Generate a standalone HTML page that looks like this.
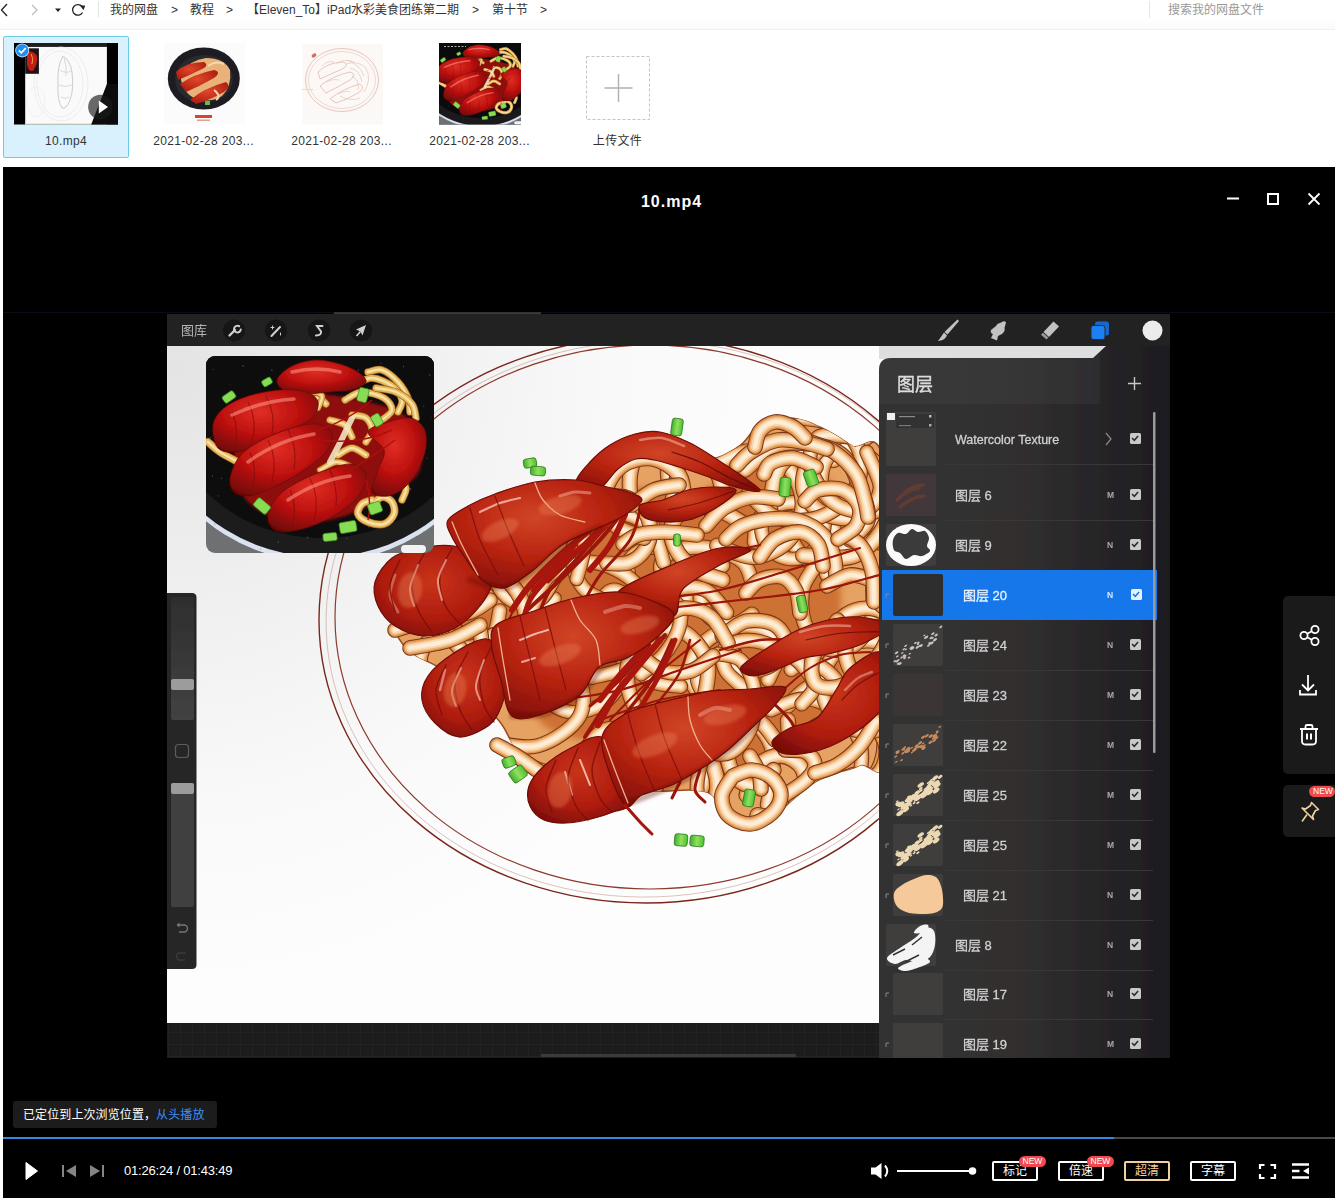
<!DOCTYPE html>
<html lang="zh-CN">
<head>
<meta charset="utf-8">
<title>10.mp4</title>
<style>
html,body{margin:0;padding:0;overflow:hidden;}
body{width:1335px;height:1198px;position:relative;overflow:hidden;background:#fff;font-family:"Liberation Sans","Noto Sans CJK SC",sans-serif;}
.abs{position:absolute;}
#topbar{left:0;top:0;width:1335px;height:29px;background:linear-gradient(#fff 65%,#fafafa);border-bottom:1px solid #efefef;}
.crumb{position:absolute;top:1px;font-size:12px;line-height:18px;color:#333;white-space:nowrap;}
.gt{position:absolute;top:1px;font-size:12px;line-height:18px;color:#333;}
.fitem{position:absolute;top:36px;width:125px;height:121px;}
.fname{position:absolute;left:0;width:100%;top:96px;text-align:center;font-size:12px;line-height:18px;color:#333;white-space:nowrap;letter-spacing:0.35px;}
#player{left:3px;top:167px;width:1332px;height:1031px;background:#000;}
.btn{position:absolute;top:1161px;height:14px;border:2px solid #fff;border-radius:2px;color:#fff;font-size:12px;line-height:16px;text-align:center;width:42px;height:15.5px;}
.new{position:absolute;background:#ee4a50;color:#fff;font-size:8.5px;line-height:11px;height:10.5px;border-radius:6px;padding:0 3.5px;font-family:"Liberation Sans",sans-serif;}
</style>
</head>
<body>
<!-- TOPBAR -->
<div id="topbar" class="abs"></div>
<svg class="abs" style="left:0;top:0" width="100" height="30" viewBox="0 0 100 30">
 <path d="M7 4 L1.5 10 L7 16" fill="none" stroke="#222" stroke-width="1.3"/>
 <path d="M32 5 L37 10 L32 15" fill="none" stroke="#bbb" stroke-width="1.2"/>
 <path d="M55 8.5 L61 8.5 L58 12 Z" fill="#222"/>
 <path d="M82 6.5 A5.3 5.3 0 1 0 82.5 12.5" fill="none" stroke="#222" stroke-width="1.3"/>
 <path d="M79.5 6.2 L84.5 9.5 L84.5 4.5 Z" fill="#222" transform="rotate(20 82 7)"/>
 <rect x="98" y="1" width="1" height="16" fill="#e2e2e2"/>
</svg>
<div class="crumb" style="left:110px">我的网盘</div>
<div class="gt" style="left:171px">&gt;</div>
<div class="crumb" style="left:190px">教程</div>
<div class="gt" style="left:226px">&gt;</div>
<div class="crumb" style="left:247px">【Eleven_To】iPad水彩美食团练第二期</div>
<div class="gt" style="left:472px">&gt;</div>
<div class="crumb" style="left:492px">第十节</div>
<div class="gt" style="left:540px">&gt;</div>
<div class="abs" style="left:1149px;top:1px;width:1px;height:17px;background:#e5e5e5"></div>
<div class="crumb" style="left:1168px;color:#999">搜索我的网盘文件</div>

<!-- FILES -->
<div class="fitem" id="f1" style="left:3px;background:#d9f1fd;border:1px solid #6ccbe6;border-radius:2px;width:124px;height:120px;">
  <div class="fname" style="top:95px">10.mp4</div>
</div>
<div class="fitem" id="f2" style="left:141px"><div class="fname">2021-02-28 203...</div></div>
<div class="fitem" id="f3" style="left:279px"><div class="fname">2021-02-28 203...</div></div>
<div class="fitem" id="f4" style="left:417px"><div class="fname">2021-02-28 203...</div></div>
<div class="fitem" id="f5" style="left:555px"><div class="fname">上传文件</div></div>

<svg class="abs" style="left:0;top:36px" width="668" height="122" viewBox="0 36 668 122">
<defs>
<filter id="tb"><feGaussianBlur stdDeviation="0.5"/></filter>
<filter id="tb2"><feGaussianBlur stdDeviation="1"/></filter>
<clipPath id="t1c"><rect x="14" y="43" width="104" height="81.500"/></clipPath>
<clipPath id="t4c"><rect x="439" y="43" width="82" height="81.500"/></clipPath>
<radialGradient id="tr" cx="0.45" cy="0.4" r="0.7"><stop offset="0" stop-color="#e2472c"/><stop offset="1" stop-color="#a51a0c"/></radialGradient>
</defs>
<!-- thumb 1: video -->
<g clip-path="url(#t1c)">
 <rect x="14" y="43" width="104" height="82" fill="#000"/>
 <rect x="25.200" y="46.700" width="81.700" height="78" fill="#fafafa"/>
 <rect x="25.200" y="43" width="81.700" height="3.700" fill="#1e1e1e"/>
 <rect x="25.200" y="123" width="66" height="1.800" fill="#dff0d0"/>
 <g fill="none" stroke="#e6e6e6" stroke-width="0.700">
  <ellipse cx="61" cy="84" rx="27" ry="37"/><ellipse cx="60" cy="84" rx="23" ry="33"/>
  <path d="M63,56 Q70,60 72,72 Q74,90 70,100 Q66,110 62,108 Q57,100 58,84 Q57,66 63,56 Z" stroke="#b8b8b8"/>
  <path d="M60,70 Q66,74 71,71 M59,85 Q65,88 72,85 M61,97 Q65,100 69,97 M64,58 Q67,66 66,76" stroke="#c8c8c8"/>
  <ellipse cx="36" cy="102" rx="9" ry="15" stroke="#ececec"/>
 </g>
 <rect x="25.200" y="48.300" width="13.700" height="25.500" fill="#1a1416"/>
 <path d="M27,52 Q33,50 37,56 Q38,64 33,71 Q28,72 27,64 Z" fill="#c41c18"/><path d="M31,54 q3,4 1,10" stroke="#e8a040" stroke-width="1" fill="none"/>
 <path d="M106.900,84 L91,125 H118 V84 Z" fill="#0c0c0c"/>
 <circle cx="100.400" cy="107" r="12.300" fill="#1a1a1a" opacity="0.650"/>
 <path d="M98.800,100.400 L108,107 L98.800,113.500 Z" fill="#fff"/>
</g>
<circle cx="22.200" cy="50.400" r="7" fill="#fff" opacity="0.850"/><circle cx="22.200" cy="50.400" r="6.200" fill="#1e90f5"/>
<path d="M18.800,50.400 L21.300,52.900 L25.800,48" fill="none" stroke="#fff" stroke-width="1.600"/>
<!-- thumb 2: painting on dark plate -->
<rect x="164" y="43" width="81" height="81.500" fill="#fbfbfb"/>
<g filter="url(#tb)">
 <ellipse cx="203.800" cy="78.500" rx="36" ry="31" fill="#1d1d20"/>
 <ellipse cx="204" cy="79" rx="29" ry="24" fill="#2a2a2e"/>
 <path d="M180,74 Q190,60 206,58 Q224,58 230,70 Q232,86 222,96 Q208,104 194,98 Q182,92 180,74Z" fill="#e8b27a"/>
 <path d="M176,72 Q186,62 204,62 Q210,66 200,70 Q188,76 178,80 Z" fill="url(#tr)"/>
 <path d="M180,84 Q194,74 214,70 Q222,72 214,78 Q200,86 186,92 Z" fill="url(#tr)"/>
 <path d="M190,100 Q204,88 226,82 Q232,86 224,92 Q210,100 196,104 Z" fill="url(#tr)"/>
 <path d="M208,66 Q216,60 224,64 M214,90 Q222,96 216,100" stroke="#f6d9b0" stroke-width="2" fill="none"/>
 <rect x="205" y="101" width="5" height="4" fill="#5fc040"/>
 <rect x="195" y="115" width="17" height="3" fill="#d8452c"/><rect x="197" y="119.500" width="13" height="1.500" fill="#e0a090"/>
</g>
<!-- thumb 3: line sketch -->
<rect x="302.500" y="44" width="80.500" height="80.500" fill="#fcf8f6"/>
<g fill="none" stroke="#dcb0a2" stroke-width="0.700" filter="url(#tb)">
 <ellipse cx="342" cy="80" rx="36.500" ry="31.500"/><ellipse cx="342" cy="80" rx="33.500" ry="28.500" stroke="#e8cabf"/>
 <path d="M318,72 Q328,62 344,62 Q350,66 340,70 Q328,75 320,79 Z"/>
 <path d="M320,86 Q332,76 350,72 Q358,74 350,80 Q338,87 326,93 Z"/>
 <path d="M330,99 Q342,89 360,84 Q366,88 358,93 Q346,100 336,103 Z"/>
 <path d="M346,64 Q358,60 366,68 Q372,80 364,92 M350,68 Q360,70 362,82 M340,96 Q352,102 360,98 M346,60 Q360,64 364,76 M352,76 Q360,80 358,90 M336,64 Q344,58 354,62" stroke="#e6c4b8"/>
 <path d="M322,66 q6,-6 12,-4 M326,82 q8,-4 14,-2 M338,94 q8,-4 12,-2" stroke="#e8c8bc"/>
</g>
<ellipse cx="314" cy="55.500" rx="2.600" ry="1.800" fill="#d2705e" transform="rotate(-35 314 55.500)"/><rect x="302" y="89" width="11" height="1" fill="#ecd8c8"/>
<!-- thumb 4: photo -->
<g clip-path="url(#t4c)">
 <rect x="439" y="43" width="82" height="82" fill="#15151a"/>
 <g transform="translate(433.500 43) scale(0.4137) translate(-206 -356)">
<rect x="206" y="355" width="228" height="198" fill="#6e6f72"/>
<ellipse cx="322" cy="398" rx="176" ry="164" fill="#d9e2ee"/>
<ellipse cx="322" cy="396" rx="173" ry="161" fill="#1a1a1d"/>
<ellipse cx="322" cy="410" rx="150" ry="128" fill="#0b0b0d"/>
<circle cx="348.2" cy="370.6" r="0.4" fill="#777" opacity="0.6"/>
<circle cx="260.5" cy="549.2" r="0.6" fill="#777" opacity="0.6"/>
<circle cx="358.4" cy="370.3" r="0.8" fill="#777" opacity="0.6"/>
<circle cx="214.9" cy="524.2" r="0.6" fill="#777" opacity="0.6"/>
<circle cx="369.0" cy="526.7" r="0.8" fill="#777" opacity="0.6"/>
<circle cx="414.3" cy="433.8" r="0.8" fill="#777" opacity="0.6"/>
<circle cx="307.6" cy="537.6" r="0.8" fill="#777" opacity="0.6"/>
<circle cx="229.8" cy="384.1" r="0.5" fill="#777" opacity="0.6"/>
<circle cx="424.3" cy="441.7" r="0.7" fill="#777" opacity="0.6"/>
<circle cx="410.5" cy="488.9" r="0.9" fill="#777" opacity="0.6"/>
<circle cx="399.8" cy="548.3" r="0.7" fill="#777" opacity="0.6"/>
<circle cx="424.1" cy="531.7" r="0.7" fill="#777" opacity="0.6"/>
<circle cx="271.8" cy="370.2" r="0.8" fill="#777" opacity="0.6"/>
<circle cx="429.7" cy="375.0" r="0.8" fill="#777" opacity="0.6"/>
<circle cx="403.5" cy="366.5" r="0.7" fill="#777" opacity="0.6"/>
<circle cx="218.1" cy="495.9" r="0.6" fill="#777" opacity="0.6"/>
<circle cx="405.3" cy="546.3" r="0.7" fill="#777" opacity="0.6"/>
<circle cx="431.7" cy="417.5" r="0.4" fill="#777" opacity="0.6"/>
<circle cx="342.3" cy="364.0" r="0.5" fill="#777" opacity="0.6"/>
<circle cx="243.0" cy="366.1" r="0.8" fill="#777" opacity="0.6"/>
<circle cx="278.3" cy="542.1" r="0.8" fill="#777" opacity="0.6"/>
<circle cx="346.9" cy="538.6" r="0.7" fill="#777" opacity="0.6"/>
<circle cx="427.0" cy="458.1" r="0.7" fill="#777" opacity="0.6"/>
<circle cx="210.6" cy="437.7" r="0.7" fill="#777" opacity="0.6"/>
<circle cx="212.5" cy="476.2" r="0.7" fill="#777" opacity="0.6"/>
<circle cx="221.5" cy="478.4" r="0.6" fill="#777" opacity="0.6"/>
<circle cx="213.0" cy="369.6" r="0.7" fill="#777" opacity="0.6"/>
<circle cx="423.8" cy="406.2" r="0.6" fill="#777" opacity="0.6"/>
<circle cx="381.0" cy="363.2" r="0.7" fill="#777" opacity="0.6"/>
<circle cx="353.7" cy="527.9" r="0.6" fill="#777" opacity="0.6"/>
<g filter="url(#b1)">
<path d="M240.0,420.0 C250.0,404.2 280.0,398.3 300.0,395.0 C320.0,391.7 341.7,395.8 360.0,400.0 C378.3,404.2 400.0,408.3 410.0,420.0 C420.0,431.7 425.0,456.7 420.0,470.0 C415.0,483.3 395.0,491.7 380.0,500.0 C365.0,508.3 346.7,516.7 330.0,520.0 C313.3,523.3 295.0,525.0 280.0,520.0 C265.0,515.0 246.7,506.7 240.0,490.0 C233.3,473.3 230.0,435.8 240.0,420.0Z" fill="#8e0c0a" filter="url(#b2)"/>
<path d="M368.0,372.0 C370.3,371.7 377.0,368.3 382.0,370.0 C387.0,371.7 393.7,377.3 398.0,382.0 C402.3,386.7 406.0,393.0 408.0,398.0 C410.0,403.0 409.7,409.7 410.0,412.0" fill="none" stroke="#a5661e" stroke-width="7.5" stroke-linecap="round"/>
<path d="M368.0,372.0 C370.3,371.7 377.0,368.3 382.0,370.0 C387.0,371.7 393.7,377.3 398.0,382.0 C402.3,386.7 406.0,393.0 408.0,398.0 C410.0,403.0 409.7,409.7 410.0,412.0" fill="none" stroke="#e6b860" stroke-width="6.0" stroke-linecap="round"/>
<path d="M368.0,372.0 C370.3,371.7 377.0,368.3 382.0,370.0 C387.0,371.7 393.7,377.3 398.0,382.0 C402.3,386.7 406.0,393.0 408.0,398.0 C410.0,403.0 409.7,409.7 410.0,412.0" fill="none" stroke="#f7e2a4" stroke-width="2.4" stroke-linecap="round"/>
<path d="M355.0,385.0 C357.8,383.8 365.8,377.8 372.0,378.0 C378.2,378.2 387.0,382.3 392.0,386.0 C397.0,389.7 401.0,395.7 402.0,400.0 C403.0,404.3 398.7,410.0 398.0,412.0" fill="none" stroke="#a5661e" stroke-width="7.5" stroke-linecap="round"/>
<path d="M355.0,385.0 C357.8,383.8 365.8,377.8 372.0,378.0 C378.2,378.2 387.0,382.3 392.0,386.0 C397.0,389.7 401.0,395.7 402.0,400.0 C403.0,404.3 398.7,410.0 398.0,412.0" fill="none" stroke="#e6b860" stroke-width="6.0" stroke-linecap="round"/>
<path d="M355.0,385.0 C357.8,383.8 365.8,377.8 372.0,378.0 C378.2,378.2 387.0,382.3 392.0,386.0 C397.0,389.7 401.0,395.7 402.0,400.0 C403.0,404.3 398.7,410.0 398.0,412.0" fill="none" stroke="#f7e2a4" stroke-width="2.4" stroke-linecap="round"/>
<path d="M345.0,400.0 C347.8,398.7 355.5,392.3 362.0,392.0 C368.5,391.7 379.0,395.0 384.0,398.0 C389.0,401.0 392.3,406.3 392.0,410.0 C391.7,413.7 383.7,418.3 382.0,420.0" fill="none" stroke="#a5661e" stroke-width="7.5" stroke-linecap="round"/>
<path d="M345.0,400.0 C347.8,398.7 355.5,392.3 362.0,392.0 C368.5,391.7 379.0,395.0 384.0,398.0 C389.0,401.0 392.3,406.3 392.0,410.0 C391.7,413.7 383.7,418.3 382.0,420.0" fill="none" stroke="#e6b860" stroke-width="6.0" stroke-linecap="round"/>
<path d="M345.0,400.0 C347.8,398.7 355.5,392.3 362.0,392.0 C368.5,391.7 379.0,395.0 384.0,398.0 C389.0,401.0 392.3,406.3 392.0,410.0 C391.7,413.7 383.7,418.3 382.0,420.0" fill="none" stroke="#f7e2a4" stroke-width="2.4" stroke-linecap="round"/>
<path d="M352.0,415.0 C354.3,415.5 362.7,415.5 366.0,418.0 C369.3,420.5 372.0,426.0 372.0,430.0 C372.0,434.0 367.0,440.0 366.0,442.0" fill="none" stroke="#a5661e" stroke-width="7.5" stroke-linecap="round"/>
<path d="M352.0,415.0 C354.3,415.5 362.7,415.5 366.0,418.0 C369.3,420.5 372.0,426.0 372.0,430.0 C372.0,434.0 367.0,440.0 366.0,442.0" fill="none" stroke="#e6b860" stroke-width="6.0" stroke-linecap="round"/>
<path d="M352.0,415.0 C354.3,415.5 362.7,415.5 366.0,418.0 C369.3,420.5 372.0,426.0 372.0,430.0 C372.0,434.0 367.0,440.0 366.0,442.0" fill="none" stroke="#f7e2a4" stroke-width="2.4" stroke-linecap="round"/>
<path d="M305.0,405.0 C307.2,403.8 314.5,398.2 318.0,398.0 C321.5,397.8 324.7,403.0 326.0,404.0" fill="none" stroke="#a5661e" stroke-width="7.5" stroke-linecap="round"/>
<path d="M305.0,405.0 C307.2,403.8 314.5,398.2 318.0,398.0 C321.5,397.8 324.7,403.0 326.0,404.0" fill="none" stroke="#e6b860" stroke-width="6.0" stroke-linecap="round"/>
<path d="M305.0,405.0 C307.2,403.8 314.5,398.2 318.0,398.0 C321.5,397.8 324.7,403.0 326.0,404.0" fill="none" stroke="#f7e2a4" stroke-width="2.4" stroke-linecap="round"/>
<path d="M338.0,455.0 C340.3,453.8 347.3,448.0 352.0,448.0 C356.7,448.0 363.7,453.8 366.0,455.0" fill="none" stroke="#a5661e" stroke-width="7.5" stroke-linecap="round"/>
<path d="M338.0,455.0 C340.3,453.8 347.3,448.0 352.0,448.0 C356.7,448.0 363.7,453.8 366.0,455.0" fill="none" stroke="#e6b860" stroke-width="6.0" stroke-linecap="round"/>
<path d="M338.0,455.0 C340.3,453.8 347.3,448.0 352.0,448.0 C356.7,448.0 363.7,453.8 366.0,455.0" fill="none" stroke="#f7e2a4" stroke-width="2.4" stroke-linecap="round"/>
<path d="M320.0,470.0 C322.7,468.7 331.0,462.7 336.0,462.0 C341.0,461.3 347.7,465.3 350.0,466.0" fill="none" stroke="#a5661e" stroke-width="6.5" stroke-linecap="round"/>
<path d="M320.0,470.0 C322.7,468.7 331.0,462.7 336.0,462.0 C341.0,461.3 347.7,465.3 350.0,466.0" fill="none" stroke="#e6b860" stroke-width="5.0" stroke-linecap="round"/>
<path d="M320.0,470.0 C322.7,468.7 331.0,462.7 336.0,462.0 C341.0,461.3 347.7,465.3 350.0,466.0" fill="none" stroke="#f7e2a4" stroke-width="2.0" stroke-linecap="round"/>
<path d="M376.0,388.0 C379.3,388.7 390.0,389.3 396.0,392.0 C402.0,394.7 408.7,399.7 412.0,404.0 C415.3,408.3 415.3,415.7 416.0,418.0" fill="none" stroke="#a5661e" stroke-width="7.5" stroke-linecap="round"/>
<path d="M376.0,388.0 C379.3,388.7 390.0,389.3 396.0,392.0 C402.0,394.7 408.7,399.7 412.0,404.0 C415.3,408.3 415.3,415.7 416.0,418.0" fill="none" stroke="#e6b860" stroke-width="6.0" stroke-linecap="round"/>
<path d="M376.0,388.0 C379.3,388.7 390.0,389.3 396.0,392.0 C402.0,394.7 408.7,399.7 412.0,404.0 C415.3,408.3 415.3,415.7 416.0,418.0" fill="none" stroke="#f7e2a4" stroke-width="2.4" stroke-linecap="round"/>
<path d="M300.0,398.0 C302.0,397.0 308.3,392.3 312.0,392.0 C315.7,391.7 321.0,393.3 322.0,396.0 C323.0,398.7 318.7,406.0 318.0,408.0" fill="none" stroke="#a5661e" stroke-width="6.5" stroke-linecap="round"/>
<path d="M300.0,398.0 C302.0,397.0 308.3,392.3 312.0,392.0 C315.7,391.7 321.0,393.3 322.0,396.0 C323.0,398.7 318.7,406.0 318.0,408.0" fill="none" stroke="#e6b860" stroke-width="5.0" stroke-linecap="round"/>
<path d="M300.0,398.0 C302.0,397.0 308.3,392.3 312.0,392.0 C315.7,391.7 321.0,393.3 322.0,396.0 C323.0,398.7 318.7,406.0 318.0,408.0" fill="none" stroke="#f7e2a4" stroke-width="2.0" stroke-linecap="round"/>
<path d="M330.0,420.0 C332.5,420.8 341.3,422.2 345.0,425.0 C348.7,427.8 350.8,435.0 352.0,437.0" fill="none" stroke="#a5661e" stroke-width="7.5" stroke-linecap="round"/>
<path d="M330.0,420.0 C332.5,420.8 341.3,422.2 345.0,425.0 C348.7,427.8 350.8,435.0 352.0,437.0" fill="none" stroke="#e6b860" stroke-width="6.0" stroke-linecap="round"/>
<path d="M330.0,420.0 C332.5,420.8 341.3,422.2 345.0,425.0 C348.7,427.8 350.8,435.0 352.0,437.0" fill="none" stroke="#f7e2a4" stroke-width="2.4" stroke-linecap="round"/>
<path d="M208.0,442.0 C210.0,443.7 215.3,448.8 220.0,452.0 C224.7,455.2 233.3,459.5 236.0,461.0" fill="none" stroke="#a5661e" stroke-width="8.0" stroke-linecap="round"/>
<path d="M208.0,442.0 C210.0,443.7 215.3,448.8 220.0,452.0 C224.7,455.2 233.3,459.5 236.0,461.0" fill="none" stroke="#e6b860" stroke-width="6.5" stroke-linecap="round"/>
<path d="M208.0,442.0 C210.0,443.7 215.3,448.8 220.0,452.0 C224.7,455.2 233.3,459.5 236.0,461.0" fill="none" stroke="#f7e2a4" stroke-width="2.6" stroke-linecap="round"/>
<path d="M400.0,440.0 C401.7,442.5 408.0,450.0 410.0,455.0 C412.0,460.0 412.8,465.8 412.0,470.0 C411.2,474.2 406.2,478.3 405.0,480.0" fill="none" stroke="#a5661e" stroke-width="7.5" stroke-linecap="round"/>
<path d="M400.0,440.0 C401.7,442.5 408.0,450.0 410.0,455.0 C412.0,460.0 412.8,465.8 412.0,470.0 C411.2,474.2 406.2,478.3 405.0,480.0" fill="none" stroke="#e6b860" stroke-width="6.0" stroke-linecap="round"/>
<path d="M400.0,440.0 C401.7,442.5 408.0,450.0 410.0,455.0 C412.0,460.0 412.8,465.8 412.0,470.0 C411.2,474.2 406.2,478.3 405.0,480.0" fill="none" stroke="#f7e2a4" stroke-width="2.4" stroke-linecap="round"/>
<path d="M372.0,505.0 C373.7,503.7 378.7,497.5 382.0,497.0 C385.3,496.5 390.0,499.2 392.0,502.0 C394.0,504.8 395.3,510.3 394.0,514.0 C392.7,517.7 388.3,522.7 384.0,524.0 C379.7,525.3 372.3,523.7 368.0,522.0 C363.7,520.3 359.0,517.0 358.0,514.0 C357.0,511.0 359.7,506.3 362.0,504.0 C364.3,501.7 370.3,500.7 372.0,500.0" fill="none" stroke="#a5661e" stroke-width="8.0" stroke-linecap="round"/>
<path d="M372.0,505.0 C373.7,503.7 378.7,497.5 382.0,497.0 C385.3,496.5 390.0,499.2 392.0,502.0 C394.0,504.8 395.3,510.3 394.0,514.0 C392.7,517.7 388.3,522.7 384.0,524.0 C379.7,525.3 372.3,523.7 368.0,522.0 C363.7,520.3 359.0,517.0 358.0,514.0 C357.0,511.0 359.7,506.3 362.0,504.0 C364.3,501.7 370.3,500.7 372.0,500.0" fill="none" stroke="#e6b860" stroke-width="6.5" stroke-linecap="round"/>
<path d="M372.0,505.0 C373.7,503.7 378.7,497.5 382.0,497.0 C385.3,496.5 390.0,499.2 392.0,502.0 C394.0,504.8 395.3,510.3 394.0,514.0 C392.7,517.7 388.3,522.7 384.0,524.0 C379.7,525.3 372.3,523.7 368.0,522.0 C363.7,520.3 359.0,517.0 358.0,514.0 C357.0,511.0 359.7,506.3 362.0,504.0 C364.3,501.7 370.3,500.7 372.0,500.0" fill="none" stroke="#f7e2a4" stroke-width="2.6" stroke-linecap="round"/>
<path d="M385.0,490.0 C387.2,488.3 394.5,480.3 398.0,480.0 C401.5,479.7 405.3,484.7 406.0,488.0 C406.7,491.3 402.7,498.0 402.0,500.0" fill="none" stroke="#a5661e" stroke-width="7.5" stroke-linecap="round"/>
<path d="M385.0,490.0 C387.2,488.3 394.5,480.3 398.0,480.0 C401.5,479.7 405.3,484.7 406.0,488.0 C406.7,491.3 402.7,498.0 402.0,500.0" fill="none" stroke="#e6b860" stroke-width="6.0" stroke-linecap="round"/>
<path d="M385.0,490.0 C387.2,488.3 394.5,480.3 398.0,480.0 C401.5,479.7 405.3,484.7 406.0,488.0 C406.7,491.3 402.7,498.0 402.0,500.0" fill="none" stroke="#f7e2a4" stroke-width="2.4" stroke-linecap="round"/>
<path d="M352,418 Q342,440 330,462" stroke="#efe6c0" stroke-width="6" fill="none" stroke-linecap="round" opacity="0.9"/>
<path d="M368.0,432.0 C368.7,427.3 381.0,424.3 388.0,422.0 C395.0,419.7 404.0,417.0 410.0,418.0 C416.0,419.0 421.3,423.0 424.0,428.0 C426.7,433.0 427.0,441.0 426.0,448.0 C425.0,455.0 421.7,463.3 418.0,470.0 C414.3,476.7 409.0,483.7 404.0,488.0 C399.0,492.3 393.3,495.3 388.0,496.0 C382.7,496.7 373.7,496.3 372.0,492.0 C370.3,487.7 376.0,477.0 378.0,470.0 C380.0,463.0 385.7,456.3 384.0,450.0 C382.3,443.7 367.3,436.7 368.0,432.0Z" fill="url(#pr)" stroke="#6c0605" stroke-width="0.8"/>
<path d="M277.0,380.0 C278.0,375.7 285.5,369.3 292.0,366.0 C298.5,362.7 308.0,360.3 316.0,360.0 C324.0,359.7 333.0,362.0 340.0,364.0 C347.0,366.0 353.7,369.0 358.0,372.0 C362.3,375.0 367.0,379.0 366.0,382.0 C365.0,385.0 358.0,388.3 352.0,390.0 C346.0,391.7 337.8,391.3 330.0,392.0 C322.2,392.7 312.3,394.0 305.0,394.0 C297.7,394.0 290.7,394.3 286.0,392.0 C281.3,389.7 276.0,384.3 277.0,380.0Z" fill="url(#pr)" stroke="#6c0605" stroke-width="0.8"/>
<path d="M213.0,425.0 C214.0,418.3 218.2,412.8 224.0,408.0 C229.8,403.2 238.7,399.0 248.0,396.0 C257.3,393.0 270.3,390.7 280.0,390.0 C289.7,389.3 299.7,390.0 306.0,392.0 C312.3,394.0 317.0,397.7 318.0,402.0 C319.0,406.3 316.7,413.3 312.0,418.0 C307.3,422.7 298.3,426.0 290.0,430.0 C281.7,434.0 270.7,438.3 262.0,442.0 C253.3,445.7 245.3,451.0 238.0,452.0 C230.7,453.0 222.2,452.5 218.0,448.0 C213.8,443.5 212.0,431.7 213.0,425.0Z" fill="url(#pr)" stroke="#6c0605" stroke-width="0.8"/>
<path d="M230.0,478.0 C231.0,472.0 234.7,462.3 240.0,456.0 C245.3,449.7 253.3,444.7 262.0,440.0 C270.7,435.3 282.7,430.7 292.0,428.0 C301.3,425.3 311.3,423.0 318.0,424.0 C324.7,425.0 330.7,429.3 332.0,434.0 C333.3,438.7 330.7,446.0 326.0,452.0 C321.3,458.0 312.3,464.3 304.0,470.0 C295.7,475.7 285.0,481.7 276.0,486.0 C267.0,490.3 257.0,495.0 250.0,496.0 C243.0,497.0 237.3,495.0 234.0,492.0 C230.7,489.0 229.0,484.0 230.0,478.0Z" fill="url(#pr)" stroke="#6c0605" stroke-width="0.8"/>
<path d="M268.0,515.0 C269.0,509.7 273.0,501.5 278.0,496.0 C283.0,490.5 290.0,486.3 298.0,482.0 C306.0,477.7 317.0,473.0 326.0,470.0 C335.0,467.0 345.3,463.3 352.0,464.0 C358.7,464.7 364.7,469.0 366.0,474.0 C367.3,479.0 364.3,487.7 360.0,494.0 C355.7,500.3 348.0,506.7 340.0,512.0 C332.0,517.3 321.0,522.7 312.0,526.0 C303.0,529.3 292.7,531.7 286.0,532.0 C279.3,532.3 275.0,530.8 272.0,528.0 C269.0,525.2 267.0,520.3 268.0,515.0Z" fill="url(#pr)" stroke="#6c0605" stroke-width="0.8"/>
<path d="M232,412 q8,18 2,36 M248,402 q10,20 4,40 M266,396 q10,18 6,38 M250,452 q8,18 2,38 M268,440 q10,20 4,42 M288,430 q10,18 6,40 M290,490 q8,18 2,36 M310,478 q10,20 4,42 M330,470 q8,18 6,36" stroke="#7a0806" stroke-width="1" fill="none" opacity="0.7"/>
<path d="M318,430 Q350,420 372,400 M322,440 Q360,445 392,430 M350,470 Q375,455 395,440 M366,480 Q372,500 368,520" stroke="#b0100c" stroke-width="1.4" fill="none"/>
<path d="M232,415 q30,-14 62,-16 M248,462 q30,-22 66,-28 M288,500 q30,-20 62,-24 M292,372 q25,-6 48,0" fill="none" stroke="#ff9a86" stroke-width="3.5" opacity="0.55" stroke-linecap="round"/>
<rect x="225.0" y="390.5" width="8" height="13" rx="2" fill="#86dc52" stroke="#3a8a20" stroke-width="0.7" transform="rotate(55 229 397)"/>
<rect x="358.0" y="388.0" width="10" height="14" rx="2" fill="#86dc52" stroke="#3a8a20" stroke-width="0.7" transform="rotate(15 363 395)"/>
<rect x="372.5" y="414.0" width="9" height="12" rx="2" fill="#86dc52" stroke="#3a8a20" stroke-width="0.7" transform="rotate(-30 377 420)"/>
<rect x="257.0" y="498.0" width="10" height="16" rx="2" fill="#86dc52" stroke="#3a8a20" stroke-width="0.7" transform="rotate(-50 262 506)"/>
<rect x="342.5" y="518.5" width="11" height="17" rx="2" fill="#86dc52" stroke="#3a8a20" stroke-width="0.7" transform="rotate(80 348 527)"/>
<rect x="369.5" y="501.5" width="11" height="13" rx="2" fill="#86dc52" stroke="#3a8a20" stroke-width="0.7" transform="rotate(70 375 508)"/>
<rect x="263.5" y="377.0" width="7" height="10" rx="2" fill="#86dc52" stroke="#3a8a20" stroke-width="0.7" transform="rotate(60 267 382)"/>
<rect x="326.0" y="530.0" width="8" height="14" rx="2" fill="#86dc52" stroke="#3a8a20" stroke-width="0.7" transform="rotate(85 330 537)"/>
</g>
<rect x="401" y="545" width="25" height="8" rx="4" fill="#f2f2f2"/>
</g>
 <path d="M444,46.500 H466" stroke="#ddd" stroke-width="1.200" stroke-dasharray="2 1.500" opacity="0.800"/>
</g>
<!-- upload -->
<rect x="586.500" y="56.500" width="63" height="63" fill="none" stroke="#c4c4c4" stroke-width="1" stroke-dasharray="3 2"/>
<path d="M604.500,88 H632.500 M618.500,74 V102" stroke="#b0b0b0" stroke-width="1.400"/>
</svg>

<!-- PLAYER -->
<div id="player" class="abs"></div>
<div class="abs" style="left:8px;top:192px;width:1327px;text-align:center;color:#fff;font-weight:bold;font-size:16px;line-height:20px;letter-spacing:1px;">10.mp4</div>
<svg class="abs" style="left:0;top:0" width="1335" height="1198" viewBox="0 0 1335 1198" font-family="'Liberation Sans','Noto Sans CJK SC',sans-serif">
<defs>
<radialGradient id="cv" gradientUnits="userSpaceOnUse" cx="175" cy="370" r="620"><stop offset="0" stop-color="#e4e4e4"/><stop offset="0.35" stop-color="#efefef"/><stop offset="0.7" stop-color="#f9f9f9"/><stop offset="1" stop-color="#fdfdfd"/></radialGradient>
<radialGradient id="red1" cx="0.45" cy="0.35" r="0.7"><stop offset="0" stop-color="#d04526"/><stop offset="0.5" stop-color="#b92411"/><stop offset="1" stop-color="#820f07"/></radialGradient>
<radialGradient id="red2" cx="0.5" cy="0.4" r="0.7"><stop offset="0" stop-color="#c8341a"/><stop offset="0.6" stop-color="#ae1c0e"/><stop offset="1" stop-color="#740b05"/></radialGradient>
<linearGradient id="on" x1="0" y1="0" x2="1" y2="0"><stop offset="0" stop-color="#3fae2a"/><stop offset="0.5" stop-color="#8fe060"/><stop offset="1" stop-color="#4fc030"/></linearGradient>
<pattern id="grid" width="12" height="12" patternUnits="userSpaceOnUse"><path d="M12 0H0V12" fill="none" stroke="#252525" stroke-width="1"/></pattern>
<clipPath id="vclip"><rect x="167" y="313" width="1003" height="745"/></clipPath>
<clipPath id="cclip"><rect x="167" y="346" width="712" height="677"/></clipPath>
<filter id="vb" x="0" y="0" width="100%" height="100%" filterUnits="userSpaceOnUse"><feGaussianBlur stdDeviation="0.45"/></filter>
<filter id="b1"><feGaussianBlur stdDeviation="0.6"/></filter>
<filter id="b2"><feGaussianBlur stdDeviation="1.5"/></filter>
<filter id="b4"><feGaussianBlur stdDeviation="4"/></filter>
</defs>
<rect x="3" y="312" width="1332" height="1" fill="#0b0c16"/>
<rect x="334" y="312" width="207" height="2" fill="#333"/>
<g clip-path="url(#vclip)"><g filter="url(#vb)">
<rect x="167" y="314" width="1003" height="33" fill="#242424"/>
<rect x="334" y="312" width="207" height="2" fill="#3a3a3a"/>
<rect x="167" y="346" width="1002" height="677" fill="url(#cv)"/>
<rect x="167" y="1023" width="1003" height="35" fill="#1d1d1d"/><rect x="167" y="1023" width="1003" height="35" fill="url(#grid)"/>
<rect x="541" y="1054" width="255" height="3" fill="#3a3a3a"/>
<rect x="879" y="346" width="230" height="13" fill="#dedede"/>
<g clip-path="url(#cclip)">
<g fill="none" stroke="#7a281c" stroke-width="1.4">
<ellipse cx="646" cy="620" rx="327" ry="283"/><ellipse cx="650" cy="617" rx="315" ry="272" stroke="#8c3a2c" stroke-width="1.2"/>
<ellipse cx="648" cy="619" rx="322" ry="278" stroke="#b88a7e" stroke-width="0.5" transform="rotate(-2 648 619)"/>
</g>
<clipPath id="nclip"><path d="M393.0,622.0 C395.0,615.7 407.2,615.7 420.0,612.0 C432.8,608.3 453.3,608.7 470.0,600.0 C486.7,591.3 503.3,576.7 520.0,560.0 C536.7,543.3 556.7,515.0 570.0,500.0 C583.3,485.0 588.3,477.5 600.0,470.0 C611.7,462.5 623.3,456.3 640.0,455.0 C656.7,453.7 683.7,463.3 700.0,462.0 C716.3,460.7 728.3,452.8 738.0,447.0 C747.7,441.2 749.3,431.8 758.0,427.0 C766.7,422.2 779.3,417.8 790.0,418.0 C800.7,418.2 811.7,423.3 822.0,428.0 C832.3,432.7 841.5,439.0 852.0,446.0 C862.5,453.0 878.7,420.2 885.0,470.0 C891.3,519.8 894.2,695.8 890.0,745.0 C885.8,794.2 868.8,760.3 860.0,765.0 C851.2,769.7 844.5,770.2 837.0,773.0 C829.5,775.8 822.8,777.2 815.0,782.0 C807.2,786.8 797.5,795.3 790.0,802.0 C782.5,808.7 776.3,817.7 770.0,822.0 C763.7,826.3 759.0,828.7 752.0,828.0 C745.0,827.3 734.7,823.5 728.0,818.0 C721.3,812.5 718.3,799.7 712.0,795.0 C705.7,790.3 700.3,790.8 690.0,790.0 C679.7,789.2 663.3,793.3 650.0,790.0 C636.7,786.7 625.0,773.7 610.0,770.0 C595.0,766.3 575.0,771.0 560.0,768.0 C545.0,765.0 530.0,759.7 520.0,752.0 C510.0,744.3 508.3,732.3 500.0,722.0 C491.7,711.7 480.0,699.0 470.0,690.0 C460.0,681.0 450.3,674.7 440.0,668.0 C429.7,661.3 415.8,657.7 408.0,650.0 C400.2,642.3 391.0,628.3 393.0,622.0Z"/></clipPath>
<path d="M393.0,622.0 C395.0,615.7 407.2,615.7 420.0,612.0 C432.8,608.3 453.3,608.7 470.0,600.0 C486.7,591.3 503.3,576.7 520.0,560.0 C536.7,543.3 556.7,515.0 570.0,500.0 C583.3,485.0 588.3,477.5 600.0,470.0 C611.7,462.5 623.3,456.3 640.0,455.0 C656.7,453.7 683.7,463.3 700.0,462.0 C716.3,460.7 728.3,452.8 738.0,447.0 C747.7,441.2 749.3,431.8 758.0,427.0 C766.7,422.2 779.3,417.8 790.0,418.0 C800.7,418.2 811.7,423.3 822.0,428.0 C832.3,432.7 841.5,439.0 852.0,446.0 C862.5,453.0 878.7,420.2 885.0,470.0 C891.3,519.8 894.2,695.8 890.0,745.0 C885.8,794.2 868.8,760.3 860.0,765.0 C851.2,769.7 844.5,770.2 837.0,773.0 C829.5,775.8 822.8,777.2 815.0,782.0 C807.2,786.8 797.5,795.3 790.0,802.0 C782.5,808.7 776.3,817.7 770.0,822.0 C763.7,826.3 759.0,828.7 752.0,828.0 C745.0,827.3 734.7,823.5 728.0,818.0 C721.3,812.5 718.3,799.7 712.0,795.0 C705.7,790.3 700.3,790.8 690.0,790.0 C679.7,789.2 663.3,793.3 650.0,790.0 C636.7,786.7 625.0,773.7 610.0,770.0 C595.0,766.3 575.0,771.0 560.0,768.0 C545.0,765.0 530.0,759.7 520.0,752.0 C510.0,744.3 508.3,732.3 500.0,722.0 C491.7,711.7 480.0,699.0 470.0,690.0 C460.0,681.0 450.3,674.7 440.0,668.0 C429.7,661.3 415.8,657.7 408.0,650.0 C400.2,642.3 391.0,628.3 393.0,622.0Z" fill="#e6a262" stroke="#9a4a1e" stroke-width="1.5"/>
<g clip-path="url(#nclip)" fill="none" stroke-linecap="round">
<path d="M393.0,622.0 C395.0,615.7 407.2,615.7 420.0,612.0 C432.8,608.3 453.3,608.7 470.0,600.0 C486.7,591.3 503.3,576.7 520.0,560.0 C536.7,543.3 556.7,515.0 570.0,500.0 C583.3,485.0 588.3,477.5 600.0,470.0 C611.7,462.5 623.3,456.3 640.0,455.0 C656.7,453.7 683.7,463.3 700.0,462.0 C716.3,460.7 728.3,452.8 738.0,447.0 C747.7,441.2 749.3,431.8 758.0,427.0 C766.7,422.2 779.3,417.8 790.0,418.0 C800.7,418.2 811.7,423.3 822.0,428.0 C832.3,432.7 841.5,439.0 852.0,446.0 C862.5,453.0 878.7,420.2 885.0,470.0 C891.3,519.8 894.2,695.8 890.0,745.0 C885.8,794.2 868.8,760.3 860.0,765.0 C851.2,769.7 844.5,770.2 837.0,773.0 C829.5,775.8 822.8,777.2 815.0,782.0 C807.2,786.8 797.5,795.3 790.0,802.0 C782.5,808.7 776.3,817.7 770.0,822.0 C763.7,826.3 759.0,828.7 752.0,828.0 C745.0,827.3 734.7,823.5 728.0,818.0 C721.3,812.5 718.3,799.7 712.0,795.0 C705.7,790.3 700.3,790.8 690.0,790.0 C679.7,789.2 663.3,793.3 650.0,790.0 C636.7,786.7 625.0,773.7 610.0,770.0 C595.0,766.3 575.0,771.0 560.0,768.0 C545.0,765.0 530.0,759.7 520.0,752.0 C510.0,744.3 508.3,732.3 500.0,722.0 C491.7,711.7 480.0,699.0 470.0,690.0 C460.0,681.0 450.3,674.7 440.0,668.0 C429.7,661.3 415.8,657.7 408.0,650.0 C400.2,642.3 391.0,628.3 393.0,622.0Z" fill="#c8662c" filter="url(#b4)" opacity="0.8" transform="translate(640 620) scale(0.8) translate(-640 -620)"/>
<path d="M628.9,575.8 C628.9,573.5 626.9,566.3 628.5,562.2 C630.1,558.1 634.0,553.9 638.4,551.4 C642.8,548.9 649.3,547.3 655.0,547.2 C660.7,547.2 667.5,548.8 672.4,551.2 C677.3,553.6 682.0,557.8 684.4,561.9 C686.8,565.9 686.3,573.2 686.6,575.5" stroke="#7a3a1c" stroke-width="14.9"/>
<path d="M628.9,575.8 C628.9,573.5 626.9,566.3 628.5,562.2 C630.1,558.1 634.0,553.9 638.4,551.4 C642.8,548.9 649.3,547.3 655.0,547.2 C660.7,547.2 667.5,548.8 672.4,551.2 C677.3,553.6 682.0,557.8 684.4,561.9 C686.8,565.9 686.3,573.2 686.6,575.5" stroke="#e2924c" stroke-width="12.7"/>
<path d="M628.9,575.8 C628.9,573.5 626.9,566.3 628.5,562.2 C630.1,558.1 634.0,553.9 638.4,551.4 C642.8,548.9 649.3,547.3 655.0,547.2 C660.7,547.2 667.5,548.8 672.4,551.2 C677.3,553.6 682.0,557.8 684.4,561.9 C686.8,565.9 686.3,573.2 686.6,575.5" stroke="#efb478" stroke-width="10.1"/>
<path d="M628.9,575.8 C628.9,573.5 626.9,566.3 628.5,562.2 C630.1,558.1 634.0,553.9 638.4,551.4 C642.8,548.9 649.3,547.3 655.0,547.2 C660.7,547.2 667.5,548.8 672.4,551.2 C677.3,553.6 682.0,557.8 684.4,561.9 C686.8,565.9 686.3,573.2 686.6,575.5" stroke="#f8d8ae" stroke-width="7.4"/>
<path d="M628.9,575.8 C628.9,573.5 626.9,566.3 628.5,562.2 C630.1,558.1 634.0,553.9 638.4,551.4 C642.8,548.9 649.3,547.3 655.0,547.2 C660.7,547.2 667.5,548.8 672.4,551.2 C677.3,553.6 682.0,557.8 684.4,561.9 C686.8,565.9 686.3,573.2 686.6,575.5" stroke="#fdecd6" stroke-width="3.8"/>
<path d="M597.7,789.6 C595.5,788.3 586.8,786.8 584.3,781.9 C581.8,777.1 581.1,767.7 582.7,760.4 C584.3,753.1 589.2,743.4 593.9,738.0 C598.6,732.7 606.0,728.5 611.0,728.4 C616.0,728.3 621.5,732.1 623.8,737.3 C626.0,742.5 624.3,755.7 624.4,759.4" stroke="#7a3a1c" stroke-width="15.5"/>
<path d="M597.7,789.6 C595.5,788.3 586.8,786.8 584.3,781.9 C581.8,777.1 581.1,767.7 582.7,760.4 C584.3,753.1 589.2,743.4 593.9,738.0 C598.6,732.7 606.0,728.5 611.0,728.4 C616.0,728.3 621.5,732.1 623.8,737.3 C626.0,742.5 624.3,755.7 624.4,759.4" stroke="#e2924c" stroke-width="13.3"/>
<path d="M597.7,789.6 C595.5,788.3 586.8,786.8 584.3,781.9 C581.8,777.1 581.1,767.7 582.7,760.4 C584.3,753.1 589.2,743.4 593.9,738.0 C598.6,732.7 606.0,728.5 611.0,728.4 C616.0,728.3 621.5,732.1 623.8,737.3 C626.0,742.5 624.3,755.7 624.4,759.4" stroke="#efb478" stroke-width="10.6"/>
<path d="M597.7,789.6 C595.5,788.3 586.8,786.8 584.3,781.9 C581.8,777.1 581.1,767.7 582.7,760.4 C584.3,753.1 589.2,743.4 593.9,738.0 C598.6,732.7 606.0,728.5 611.0,728.4 C616.0,728.3 621.5,732.1 623.8,737.3 C626.0,742.5 624.3,755.7 624.4,759.4" stroke="#f8d8ae" stroke-width="7.7"/>
<path d="M597.7,789.6 C595.5,788.3 586.8,786.8 584.3,781.9 C581.8,777.1 581.1,767.7 582.7,760.4 C584.3,753.1 589.2,743.4 593.9,738.0 C598.6,732.7 606.0,728.5 611.0,728.4 C616.0,728.3 621.5,732.1 623.8,737.3 C626.0,742.5 624.3,755.7 624.4,759.4" stroke="#fdecd6" stroke-width="4.0"/>
<path d="M833.5,540.2 C833.8,543.0 836.6,553.0 835.7,557.4 C834.8,561.9 831.9,565.8 828.3,567.1 C824.7,568.4 819.1,567.6 814.3,565.2 C809.5,562.7 803.5,557.6 799.4,552.5 C795.2,547.3 791.3,540.0 789.6,534.2 C787.9,528.4 789.1,520.5 789.0,517.7" stroke="#7a3a1c" stroke-width="15.9"/>
<path d="M833.5,540.2 C833.8,543.0 836.6,553.0 835.7,557.4 C834.8,561.9 831.9,565.8 828.3,567.1 C824.7,568.4 819.1,567.6 814.3,565.2 C809.5,562.7 803.5,557.6 799.4,552.5 C795.2,547.3 791.3,540.0 789.6,534.2 C787.9,528.4 789.1,520.5 789.0,517.7" stroke="#e2924c" stroke-width="13.7"/>
<path d="M833.5,540.2 C833.8,543.0 836.6,553.0 835.7,557.4 C834.8,561.9 831.9,565.8 828.3,567.1 C824.7,568.4 819.1,567.6 814.3,565.2 C809.5,562.7 803.5,557.6 799.4,552.5 C795.2,547.3 791.3,540.0 789.6,534.2 C787.9,528.4 789.1,520.5 789.0,517.7" stroke="#efb478" stroke-width="10.9"/>
<path d="M833.5,540.2 C833.8,543.0 836.6,553.0 835.7,557.4 C834.8,561.9 831.9,565.8 828.3,567.1 C824.7,568.4 819.1,567.6 814.3,565.2 C809.5,562.7 803.5,557.6 799.4,552.5 C795.2,547.3 791.3,540.0 789.6,534.2 C787.9,528.4 789.1,520.5 789.0,517.7" stroke="#f8d8ae" stroke-width="7.9"/>
<path d="M833.5,540.2 C833.8,543.0 836.6,553.0 835.7,557.4 C834.8,561.9 831.9,565.8 828.3,567.1 C824.7,568.4 819.1,567.6 814.3,565.2 C809.5,562.7 803.5,557.6 799.4,552.5 C795.2,547.3 791.3,540.0 789.6,534.2 C787.9,528.4 789.1,520.5 789.0,517.7" stroke="#fdecd6" stroke-width="4.1"/>
<path d="M714.8,598.5 C708.7,596.8 687.4,593.7 678.4,588.6 C669.4,583.6 661.5,574.5 660.7,568.2 C660.0,561.9 665.7,554.2 673.6,550.8 C681.6,547.4 697.0,546.1 708.4,547.8 C719.9,549.6 734.8,555.6 742.1,561.4 C749.4,567.2 750.5,578.9 752.2,582.5" stroke="#7a3a1c" stroke-width="15.6"/>
<path d="M714.8,598.5 C708.7,596.8 687.4,593.7 678.4,588.6 C669.4,583.6 661.5,574.5 660.7,568.2 C660.0,561.9 665.7,554.2 673.6,550.8 C681.6,547.4 697.0,546.1 708.4,547.8 C719.9,549.6 734.8,555.6 742.1,561.4 C749.4,567.2 750.5,578.9 752.2,582.5" stroke="#e2924c" stroke-width="13.4"/>
<path d="M714.8,598.5 C708.7,596.8 687.4,593.7 678.4,588.6 C669.4,583.6 661.5,574.5 660.7,568.2 C660.0,561.9 665.7,554.2 673.6,550.8 C681.6,547.4 697.0,546.1 708.4,547.8 C719.9,549.6 734.8,555.6 742.1,561.4 C749.4,567.2 750.5,578.9 752.2,582.5" stroke="#efb478" stroke-width="10.7"/>
<path d="M714.8,598.5 C708.7,596.8 687.4,593.7 678.4,588.6 C669.4,583.6 661.5,574.5 660.7,568.2 C660.0,561.9 665.7,554.2 673.6,550.8 C681.6,547.4 697.0,546.1 708.4,547.8 C719.9,549.6 734.8,555.6 742.1,561.4 C749.4,567.2 750.5,578.9 752.2,582.5" stroke="#f8d8ae" stroke-width="7.7"/>
<path d="M714.8,598.5 C708.7,596.8 687.4,593.7 678.4,588.6 C669.4,583.6 661.5,574.5 660.7,568.2 C660.0,561.9 665.7,554.2 673.6,550.8 C681.6,547.4 697.0,546.1 708.4,547.8 C719.9,549.6 734.8,555.6 742.1,561.4 C749.4,567.2 750.5,578.9 752.2,582.5" stroke="#fdecd6" stroke-width="4.0"/>
<path d="M577.8,673.2 C574.0,676.1 562.7,686.8 554.7,690.3 C546.7,693.7 536.6,695.3 529.9,694.1 C523.1,692.9 516.8,688.4 514.2,683.0 C511.6,677.7 511.8,669.1 514.5,662.0 C517.3,654.8 523.8,645.9 530.7,640.0 C537.6,634.2 551.5,629.1 555.7,626.9" stroke="#7a3a1c" stroke-width="15.8"/>
<path d="M577.8,673.2 C574.0,676.1 562.7,686.8 554.7,690.3 C546.7,693.7 536.6,695.3 529.9,694.1 C523.1,692.9 516.8,688.4 514.2,683.0 C511.6,677.7 511.8,669.1 514.5,662.0 C517.3,654.8 523.8,645.9 530.7,640.0 C537.6,634.2 551.5,629.1 555.7,626.9" stroke="#e2924c" stroke-width="13.6"/>
<path d="M577.8,673.2 C574.0,676.1 562.7,686.8 554.7,690.3 C546.7,693.7 536.6,695.3 529.9,694.1 C523.1,692.9 516.8,688.4 514.2,683.0 C511.6,677.7 511.8,669.1 514.5,662.0 C517.3,654.8 523.8,645.9 530.7,640.0 C537.6,634.2 551.5,629.1 555.7,626.9" stroke="#efb478" stroke-width="10.9"/>
<path d="M577.8,673.2 C574.0,676.1 562.7,686.8 554.7,690.3 C546.7,693.7 536.6,695.3 529.9,694.1 C523.1,692.9 516.8,688.4 514.2,683.0 C511.6,677.7 511.8,669.1 514.5,662.0 C517.3,654.8 523.8,645.9 530.7,640.0 C537.6,634.2 551.5,629.1 555.7,626.9" stroke="#f8d8ae" stroke-width="7.9"/>
<path d="M577.8,673.2 C574.0,676.1 562.7,686.8 554.7,690.3 C546.7,693.7 536.6,695.3 529.9,694.1 C523.1,692.9 516.8,688.4 514.2,683.0 C511.6,677.7 511.8,669.1 514.5,662.0 C517.3,654.8 523.8,645.9 530.7,640.0 C537.6,634.2 551.5,629.1 555.7,626.9" stroke="#fdecd6" stroke-width="4.1"/>
<path d="M611.8,758.3 C617.4,756.1 633.5,746.7 645.3,745.3 C657.1,743.9 672.6,745.8 682.3,749.8 C692.0,753.8 701.0,762.1 703.6,769.5 C706.2,776.9 703.8,787.2 697.9,794.0 C692.0,800.9 679.5,807.9 668.2,810.6 C657.0,813.4 636.5,810.6 630.2,810.6" stroke="#7a3a1c" stroke-width="16.2"/>
<path d="M611.8,758.3 C617.4,756.1 633.5,746.7 645.3,745.3 C657.1,743.9 672.6,745.8 682.3,749.8 C692.0,753.8 701.0,762.1 703.6,769.5 C706.2,776.9 703.8,787.2 697.9,794.0 C692.0,800.9 679.5,807.9 668.2,810.6 C657.0,813.4 636.5,810.6 630.2,810.6" stroke="#e2924c" stroke-width="14.0"/>
<path d="M611.8,758.3 C617.4,756.1 633.5,746.7 645.3,745.3 C657.1,743.9 672.6,745.8 682.3,749.8 C692.0,753.8 701.0,762.1 703.6,769.5 C706.2,776.9 703.8,787.2 697.9,794.0 C692.0,800.9 679.5,807.9 668.2,810.6 C657.0,813.4 636.5,810.6 630.2,810.6" stroke="#efb478" stroke-width="11.2"/>
<path d="M611.8,758.3 C617.4,756.1 633.5,746.7 645.3,745.3 C657.1,743.9 672.6,745.8 682.3,749.8 C692.0,753.8 701.0,762.1 703.6,769.5 C706.2,776.9 703.8,787.2 697.9,794.0 C692.0,800.9 679.5,807.9 668.2,810.6 C657.0,813.4 636.5,810.6 630.2,810.6" stroke="#f8d8ae" stroke-width="8.1"/>
<path d="M611.8,758.3 C617.4,756.1 633.5,746.7 645.3,745.3 C657.1,743.9 672.6,745.8 682.3,749.8 C692.0,753.8 701.0,762.1 703.6,769.5 C706.2,776.9 703.8,787.2 697.9,794.0 C692.0,800.9 679.5,807.9 668.2,810.6 C657.0,813.4 636.5,810.6 630.2,810.6" stroke="#fdecd6" stroke-width="4.2"/>
<path d="M499.7,610.8 C498.6,614.7 498.1,628.2 493.4,634.3 C488.7,640.3 478.4,646.3 471.2,647.1 C464.1,647.9 454.4,644.3 450.4,639.2 C446.4,634.2 444.8,623.8 447.1,616.8 C449.3,609.8 457.1,600.7 463.9,597.2 C470.6,593.7 483.7,596.0 487.7,595.7" stroke="#7a3a1c" stroke-width="15.3"/>
<path d="M499.7,610.8 C498.6,614.7 498.1,628.2 493.4,634.3 C488.7,640.3 478.4,646.3 471.2,647.1 C464.1,647.9 454.4,644.3 450.4,639.2 C446.4,634.2 444.8,623.8 447.1,616.8 C449.3,609.8 457.1,600.7 463.9,597.2 C470.6,593.7 483.7,596.0 487.7,595.7" stroke="#e2924c" stroke-width="13.1"/>
<path d="M499.7,610.8 C498.6,614.7 498.1,628.2 493.4,634.3 C488.7,640.3 478.4,646.3 471.2,647.1 C464.1,647.9 454.4,644.3 450.4,639.2 C446.4,634.2 444.8,623.8 447.1,616.8 C449.3,609.8 457.1,600.7 463.9,597.2 C470.6,593.7 483.7,596.0 487.7,595.7" stroke="#efb478" stroke-width="10.5"/>
<path d="M499.7,610.8 C498.6,614.7 498.1,628.2 493.4,634.3 C488.7,640.3 478.4,646.3 471.2,647.1 C464.1,647.9 454.4,644.3 450.4,639.2 C446.4,634.2 444.8,623.8 447.1,616.8 C449.3,609.8 457.1,600.7 463.9,597.2 C470.6,593.7 483.7,596.0 487.7,595.7" stroke="#f8d8ae" stroke-width="7.6"/>
<path d="M499.7,610.8 C498.6,614.7 498.1,628.2 493.4,634.3 C488.7,640.3 478.4,646.3 471.2,647.1 C464.1,647.9 454.4,644.3 450.4,639.2 C446.4,634.2 444.8,623.8 447.1,616.8 C449.3,609.8 457.1,600.7 463.9,597.2 C470.6,593.7 483.7,596.0 487.7,595.7" stroke="#fdecd6" stroke-width="3.9"/>
<path d="M700.1,695.7 C698.2,691.8 688.4,681.0 688.7,672.5 C689.1,664.0 694.8,652.1 702.2,644.5 C709.5,636.9 722.7,629.5 733.0,627.0 C743.4,624.6 756.7,625.8 764.3,629.8 C771.9,633.9 778.0,643.0 778.7,651.3 C779.4,659.6 770.0,674.9 768.3,679.6" stroke="#7a3a1c" stroke-width="16.0"/>
<path d="M700.1,695.7 C698.2,691.8 688.4,681.0 688.7,672.5 C689.1,664.0 694.8,652.1 702.2,644.5 C709.5,636.9 722.7,629.5 733.0,627.0 C743.4,624.6 756.7,625.8 764.3,629.8 C771.9,633.9 778.0,643.0 778.7,651.3 C779.4,659.6 770.0,674.9 768.3,679.6" stroke="#e2924c" stroke-width="13.8"/>
<path d="M700.1,695.7 C698.2,691.8 688.4,681.0 688.7,672.5 C689.1,664.0 694.8,652.1 702.2,644.5 C709.5,636.9 722.7,629.5 733.0,627.0 C743.4,624.6 756.7,625.8 764.3,629.8 C771.9,633.9 778.0,643.0 778.7,651.3 C779.4,659.6 770.0,674.9 768.3,679.6" stroke="#efb478" stroke-width="11.1"/>
<path d="M700.1,695.7 C698.2,691.8 688.4,681.0 688.7,672.5 C689.1,664.0 694.8,652.1 702.2,644.5 C709.5,636.9 722.7,629.5 733.0,627.0 C743.4,624.6 756.7,625.8 764.3,629.8 C771.9,633.9 778.0,643.0 778.7,651.3 C779.4,659.6 770.0,674.9 768.3,679.6" stroke="#f8d8ae" stroke-width="8.0"/>
<path d="M700.1,695.7 C698.2,691.8 688.4,681.0 688.7,672.5 C689.1,664.0 694.8,652.1 702.2,644.5 C709.5,636.9 722.7,629.5 733.0,627.0 C743.4,624.6 756.7,625.8 764.3,629.8 C771.9,633.9 778.0,643.0 778.7,651.3 C779.4,659.6 770.0,674.9 768.3,679.6" stroke="#fdecd6" stroke-width="4.1"/>
<path d="M754.1,542.0 C754.7,538.4 754.1,526.6 757.8,520.5 C761.5,514.5 768.8,508.5 776.2,505.6 C783.6,502.6 793.9,501.7 802.0,503.1 C810.1,504.5 819.2,508.9 824.8,514.1 C830.4,519.3 834.6,527.4 835.4,534.3 C836.2,541.1 830.5,551.8 829.6,555.3" stroke="#7a3a1c" stroke-width="14.9"/>
<path d="M754.1,542.0 C754.7,538.4 754.1,526.6 757.8,520.5 C761.5,514.5 768.8,508.5 776.2,505.6 C783.6,502.6 793.9,501.7 802.0,503.1 C810.1,504.5 819.2,508.9 824.8,514.1 C830.4,519.3 834.6,527.4 835.4,534.3 C836.2,541.1 830.5,551.8 829.6,555.3" stroke="#e2924c" stroke-width="12.7"/>
<path d="M754.1,542.0 C754.7,538.4 754.1,526.6 757.8,520.5 C761.5,514.5 768.8,508.5 776.2,505.6 C783.6,502.6 793.9,501.7 802.0,503.1 C810.1,504.5 819.2,508.9 824.8,514.1 C830.4,519.3 834.6,527.4 835.4,534.3 C836.2,541.1 830.5,551.8 829.6,555.3" stroke="#efb478" stroke-width="10.2"/>
<path d="M754.1,542.0 C754.7,538.4 754.1,526.6 757.8,520.5 C761.5,514.5 768.8,508.5 776.2,505.6 C783.6,502.6 793.9,501.7 802.0,503.1 C810.1,504.5 819.2,508.9 824.8,514.1 C830.4,519.3 834.6,527.4 835.4,534.3 C836.2,541.1 830.5,551.8 829.6,555.3" stroke="#f8d8ae" stroke-width="7.4"/>
<path d="M754.1,542.0 C754.7,538.4 754.1,526.6 757.8,520.5 C761.5,514.5 768.8,508.5 776.2,505.6 C783.6,502.6 793.9,501.7 802.0,503.1 C810.1,504.5 819.2,508.9 824.8,514.1 C830.4,519.3 834.6,527.4 835.4,534.3 C836.2,541.1 830.5,551.8 829.6,555.3" stroke="#fdecd6" stroke-width="3.8"/>
<path d="M612.6,762.2 C616.5,757.5 625.8,739.4 635.9,733.9 C645.9,728.5 661.3,726.6 672.9,729.4 C684.5,732.3 698.0,741.2 705.4,751.0 C712.8,760.7 717.8,776.0 717.3,787.9 C716.9,799.7 710.9,813.9 702.9,822.0 C694.8,830.1 674.7,834.1 669.1,836.5" stroke="#7a3a1c" stroke-width="16.5"/>
<path d="M612.6,762.2 C616.5,757.5 625.8,739.4 635.9,733.9 C645.9,728.5 661.3,726.6 672.9,729.4 C684.5,732.3 698.0,741.2 705.4,751.0 C712.8,760.7 717.8,776.0 717.3,787.9 C716.9,799.7 710.9,813.9 702.9,822.0 C694.8,830.1 674.7,834.1 669.1,836.5" stroke="#e2924c" stroke-width="14.3"/>
<path d="M612.6,762.2 C616.5,757.5 625.8,739.4 635.9,733.9 C645.9,728.5 661.3,726.6 672.9,729.4 C684.5,732.3 698.0,741.2 705.4,751.0 C712.8,760.7 717.8,776.0 717.3,787.9 C716.9,799.7 710.9,813.9 702.9,822.0 C694.8,830.1 674.7,834.1 669.1,836.5" stroke="#efb478" stroke-width="11.4"/>
<path d="M612.6,762.2 C616.5,757.5 625.8,739.4 635.9,733.9 C645.9,728.5 661.3,726.6 672.9,729.4 C684.5,732.3 698.0,741.2 705.4,751.0 C712.8,760.7 717.8,776.0 717.3,787.9 C716.9,799.7 710.9,813.9 702.9,822.0 C694.8,830.1 674.7,834.1 669.1,836.5" stroke="#f8d8ae" stroke-width="8.3"/>
<path d="M612.6,762.2 C616.5,757.5 625.8,739.4 635.9,733.9 C645.9,728.5 661.3,726.6 672.9,729.4 C684.5,732.3 698.0,741.2 705.4,751.0 C712.8,760.7 717.8,776.0 717.3,787.9 C716.9,799.7 710.9,813.9 702.9,822.0 C694.8,830.1 674.7,834.1 669.1,836.5" stroke="#fdecd6" stroke-width="4.3"/>
<path d="M833.2,460.7 C836.0,459.7 843.2,453.8 849.7,454.5 C856.2,455.2 866.0,459.8 872.3,465.1 C878.5,470.3 885.0,479.4 887.2,486.0 C889.3,492.5 888.5,500.5 885.2,504.3 C882.0,508.2 874.3,510.2 867.6,509.0 C861.0,507.7 848.9,499.0 845.2,497.0" stroke="#7a3a1c" stroke-width="15.2"/>
<path d="M833.2,460.7 C836.0,459.7 843.2,453.8 849.7,454.5 C856.2,455.2 866.0,459.8 872.3,465.1 C878.5,470.3 885.0,479.4 887.2,486.0 C889.3,492.5 888.5,500.5 885.2,504.3 C882.0,508.2 874.3,510.2 867.6,509.0 C861.0,507.7 848.9,499.0 845.2,497.0" stroke="#e2924c" stroke-width="13.0"/>
<path d="M833.2,460.7 C836.0,459.7 843.2,453.8 849.7,454.5 C856.2,455.2 866.0,459.8 872.3,465.1 C878.5,470.3 885.0,479.4 887.2,486.0 C889.3,492.5 888.5,500.5 885.2,504.3 C882.0,508.2 874.3,510.2 867.6,509.0 C861.0,507.7 848.9,499.0 845.2,497.0" stroke="#efb478" stroke-width="10.4"/>
<path d="M833.2,460.7 C836.0,459.7 843.2,453.8 849.7,454.5 C856.2,455.2 866.0,459.8 872.3,465.1 C878.5,470.3 885.0,479.4 887.2,486.0 C889.3,492.5 888.5,500.5 885.2,504.3 C882.0,508.2 874.3,510.2 867.6,509.0 C861.0,507.7 848.9,499.0 845.2,497.0" stroke="#f8d8ae" stroke-width="7.6"/>
<path d="M833.2,460.7 C836.0,459.7 843.2,453.8 849.7,454.5 C856.2,455.2 866.0,459.8 872.3,465.1 C878.5,470.3 885.0,479.4 887.2,486.0 C889.3,492.5 888.5,500.5 885.2,504.3 C882.0,508.2 874.3,510.2 867.6,509.0 C861.0,507.7 848.9,499.0 845.2,497.0" stroke="#fdecd6" stroke-width="3.9"/>
<path d="M613.8,609.3 C616.2,616.9 629.0,640.1 628.2,655.0 C627.4,670.0 618.9,689.4 609.0,698.9 C599.1,708.4 581.2,714.1 568.7,711.9 C556.3,709.7 540.9,697.9 534.1,685.4 C527.3,672.9 524.6,651.4 528.0,637.0 C531.4,622.5 550.1,605.0 554.5,598.6" stroke="#7a3a1c" stroke-width="14.8"/>
<path d="M613.8,609.3 C616.2,616.9 629.0,640.1 628.2,655.0 C627.4,670.0 618.9,689.4 609.0,698.9 C599.1,708.4 581.2,714.1 568.7,711.9 C556.3,709.7 540.9,697.9 534.1,685.4 C527.3,672.9 524.6,651.4 528.0,637.0 C531.4,622.5 550.1,605.0 554.5,598.6" stroke="#e2924c" stroke-width="12.6"/>
<path d="M613.8,609.3 C616.2,616.9 629.0,640.1 628.2,655.0 C627.4,670.0 618.9,689.4 609.0,698.9 C599.1,708.4 581.2,714.1 568.7,711.9 C556.3,709.7 540.9,697.9 534.1,685.4 C527.3,672.9 524.6,651.4 528.0,637.0 C531.4,622.5 550.1,605.0 554.5,598.6" stroke="#efb478" stroke-width="10.1"/>
<path d="M613.8,609.3 C616.2,616.9 629.0,640.1 628.2,655.0 C627.4,670.0 618.9,689.4 609.0,698.9 C599.1,708.4 581.2,714.1 568.7,711.9 C556.3,709.7 540.9,697.9 534.1,685.4 C527.3,672.9 524.6,651.4 528.0,637.0 C531.4,622.5 550.1,605.0 554.5,598.6" stroke="#f8d8ae" stroke-width="7.3"/>
<path d="M613.8,609.3 C616.2,616.9 629.0,640.1 628.2,655.0 C627.4,670.0 618.9,689.4 609.0,698.9 C599.1,708.4 581.2,714.1 568.7,711.9 C556.3,709.7 540.9,697.9 534.1,685.4 C527.3,672.9 524.6,651.4 528.0,637.0 C531.4,622.5 550.1,605.0 554.5,598.6" stroke="#fdecd6" stroke-width="3.8"/>
<path d="M787.3,706.1 C791.4,702.7 802.5,689.0 812.0,685.6 C821.4,682.1 834.1,682.0 844.0,685.2 C853.9,688.5 864.8,696.4 871.5,705.3 C878.1,714.1 883.1,727.1 884.1,738.2 C885.1,749.3 882.4,762.5 877.2,771.7 C872.1,780.9 857.4,789.7 853.4,793.3" stroke="#7a3a1c" stroke-width="16.0"/>
<path d="M787.3,706.1 C791.4,702.7 802.5,689.0 812.0,685.6 C821.4,682.1 834.1,682.0 844.0,685.2 C853.9,688.5 864.8,696.4 871.5,705.3 C878.1,714.1 883.1,727.1 884.1,738.2 C885.1,749.3 882.4,762.5 877.2,771.7 C872.1,780.9 857.4,789.7 853.4,793.3" stroke="#e2924c" stroke-width="13.8"/>
<path d="M787.3,706.1 C791.4,702.7 802.5,689.0 812.0,685.6 C821.4,682.1 834.1,682.0 844.0,685.2 C853.9,688.5 864.8,696.4 871.5,705.3 C878.1,714.1 883.1,727.1 884.1,738.2 C885.1,749.3 882.4,762.5 877.2,771.7 C872.1,780.9 857.4,789.7 853.4,793.3" stroke="#efb478" stroke-width="11.0"/>
<path d="M787.3,706.1 C791.4,702.7 802.5,689.0 812.0,685.6 C821.4,682.1 834.1,682.0 844.0,685.2 C853.9,688.5 864.8,696.4 871.5,705.3 C878.1,714.1 883.1,727.1 884.1,738.2 C885.1,749.3 882.4,762.5 877.2,771.7 C872.1,780.9 857.4,789.7 853.4,793.3" stroke="#f8d8ae" stroke-width="8.0"/>
<path d="M787.3,706.1 C791.4,702.7 802.5,689.0 812.0,685.6 C821.4,682.1 834.1,682.0 844.0,685.2 C853.9,688.5 864.8,696.4 871.5,705.3 C878.1,714.1 883.1,727.1 884.1,738.2 C885.1,749.3 882.4,762.5 877.2,771.7 C872.1,780.9 857.4,789.7 853.4,793.3" stroke="#fdecd6" stroke-width="4.1"/>
<path d="M690.0,511.9 C686.8,507.8 674.2,496.5 670.9,487.6 C667.5,478.7 667.1,465.1 670.0,458.2 C672.8,451.3 681.1,445.7 687.9,446.1 C694.8,446.5 705.4,453.1 711.1,460.5 C716.7,467.9 721.7,481.6 721.8,490.4 C722.0,499.2 713.6,509.3 711.9,513.1" stroke="#7a3a1c" stroke-width="16.7"/>
<path d="M690.0,511.9 C686.8,507.8 674.2,496.5 670.9,487.6 C667.5,478.7 667.1,465.1 670.0,458.2 C672.8,451.3 681.1,445.7 687.9,446.1 C694.8,446.5 705.4,453.1 711.1,460.5 C716.7,467.9 721.7,481.6 721.8,490.4 C722.0,499.2 713.6,509.3 711.9,513.1" stroke="#e2924c" stroke-width="14.5"/>
<path d="M690.0,511.9 C686.8,507.8 674.2,496.5 670.9,487.6 C667.5,478.7 667.1,465.1 670.0,458.2 C672.8,451.3 681.1,445.7 687.9,446.1 C694.8,446.5 705.4,453.1 711.1,460.5 C716.7,467.9 721.7,481.6 721.8,490.4 C722.0,499.2 713.6,509.3 711.9,513.1" stroke="#efb478" stroke-width="11.6"/>
<path d="M690.0,511.9 C686.8,507.8 674.2,496.5 670.9,487.6 C667.5,478.7 667.1,465.1 670.0,458.2 C672.8,451.3 681.1,445.7 687.9,446.1 C694.8,446.5 705.4,453.1 711.1,460.5 C716.7,467.9 721.7,481.6 721.8,490.4 C722.0,499.2 713.6,509.3 711.9,513.1" stroke="#f8d8ae" stroke-width="8.4"/>
<path d="M690.0,511.9 C686.8,507.8 674.2,496.5 670.9,487.6 C667.5,478.7 667.1,465.1 670.0,458.2 C672.8,451.3 681.1,445.7 687.9,446.1 C694.8,446.5 705.4,453.1 711.1,460.5 C716.7,467.9 721.7,481.6 721.8,490.4 C722.0,499.2 713.6,509.3 711.9,513.1" stroke="#fdecd6" stroke-width="4.3"/>
<path d="M607.4,623.9 C606.7,619.9 602.0,605.8 603.2,600.1 C604.3,594.4 609.4,589.8 614.3,590.0 C619.2,590.2 627.5,595.3 632.5,601.1 C637.4,607.0 642.7,618.0 644.0,625.2 C645.4,632.4 643.7,641.1 640.3,644.2 C637.0,647.2 626.8,643.8 624.2,643.8" stroke="#7a3a1c" stroke-width="15.0"/>
<path d="M607.4,623.9 C606.7,619.9 602.0,605.8 603.2,600.1 C604.3,594.4 609.4,589.8 614.3,590.0 C619.2,590.2 627.5,595.3 632.5,601.1 C637.4,607.0 642.7,618.0 644.0,625.2 C645.4,632.4 643.7,641.1 640.3,644.2 C637.0,647.2 626.8,643.8 624.2,643.8" stroke="#e2924c" stroke-width="12.8"/>
<path d="M607.4,623.9 C606.7,619.9 602.0,605.8 603.2,600.1 C604.3,594.4 609.4,589.8 614.3,590.0 C619.2,590.2 627.5,595.3 632.5,601.1 C637.4,607.0 642.7,618.0 644.0,625.2 C645.4,632.4 643.7,641.1 640.3,644.2 C637.0,647.2 626.8,643.8 624.2,643.8" stroke="#efb478" stroke-width="10.3"/>
<path d="M607.4,623.9 C606.7,619.9 602.0,605.8 603.2,600.1 C604.3,594.4 609.4,589.8 614.3,590.0 C619.2,590.2 627.5,595.3 632.5,601.1 C637.4,607.0 642.7,618.0 644.0,625.2 C645.4,632.4 643.7,641.1 640.3,644.2 C637.0,647.2 626.8,643.8 624.2,643.8" stroke="#f8d8ae" stroke-width="7.4"/>
<path d="M607.4,623.9 C606.7,619.9 602.0,605.8 603.2,600.1 C604.3,594.4 609.4,589.8 614.3,590.0 C619.2,590.2 627.5,595.3 632.5,601.1 C637.4,607.0 642.7,618.0 644.0,625.2 C645.4,632.4 643.7,641.1 640.3,644.2 C637.0,647.2 626.8,643.8 624.2,643.8" stroke="#fdecd6" stroke-width="3.8"/>
<path d="M652.7,526.3 C649.6,523.8 637.7,520.7 634.0,511.8 C630.3,502.9 628.6,484.9 630.4,472.9 C632.2,460.9 638.7,445.5 644.6,439.6 C650.5,433.7 660.2,432.7 665.7,437.5 C671.2,442.2 676.6,456.4 677.5,468.2 C678.3,479.9 671.9,501.4 670.8,508.1" stroke="#7a3a1c" stroke-width="16.1"/>
<path d="M652.7,526.3 C649.6,523.8 637.7,520.7 634.0,511.8 C630.3,502.9 628.6,484.9 630.4,472.9 C632.2,460.9 638.7,445.5 644.6,439.6 C650.5,433.7 660.2,432.7 665.7,437.5 C671.2,442.2 676.6,456.4 677.5,468.2 C678.3,479.9 671.9,501.4 670.8,508.1" stroke="#e2924c" stroke-width="13.9"/>
<path d="M652.7,526.3 C649.6,523.8 637.7,520.7 634.0,511.8 C630.3,502.9 628.6,484.9 630.4,472.9 C632.2,460.9 638.7,445.5 644.6,439.6 C650.5,433.7 660.2,432.7 665.7,437.5 C671.2,442.2 676.6,456.4 677.5,468.2 C678.3,479.9 671.9,501.4 670.8,508.1" stroke="#efb478" stroke-width="11.1"/>
<path d="M652.7,526.3 C649.6,523.8 637.7,520.7 634.0,511.8 C630.3,502.9 628.6,484.9 630.4,472.9 C632.2,460.9 638.7,445.5 644.6,439.6 C650.5,433.7 660.2,432.7 665.7,437.5 C671.2,442.2 676.6,456.4 677.5,468.2 C678.3,479.9 671.9,501.4 670.8,508.1" stroke="#f8d8ae" stroke-width="8.1"/>
<path d="M652.7,526.3 C649.6,523.8 637.7,520.7 634.0,511.8 C630.3,502.9 628.6,484.9 630.4,472.9 C632.2,460.9 638.7,445.5 644.6,439.6 C650.5,433.7 660.2,432.7 665.7,437.5 C671.2,442.2 676.6,456.4 677.5,468.2 C678.3,479.9 671.9,501.4 670.8,508.1" stroke="#fdecd6" stroke-width="4.2"/>
<path d="M553.9,579.4 C551.8,582.6 546.8,594.2 541.4,598.3 C535.9,602.3 527.6,604.6 521.2,603.8 C514.8,602.9 507.2,598.6 503.0,593.3 C498.7,587.9 495.6,579.0 495.5,571.8 C495.3,564.5 498.2,555.3 502.3,549.6 C506.4,543.9 517.1,539.4 520.1,537.4" stroke="#7a3a1c" stroke-width="15.1"/>
<path d="M553.9,579.4 C551.8,582.6 546.8,594.2 541.4,598.3 C535.9,602.3 527.6,604.6 521.2,603.8 C514.8,602.9 507.2,598.6 503.0,593.3 C498.7,587.9 495.6,579.0 495.5,571.8 C495.3,564.5 498.2,555.3 502.3,549.6 C506.4,543.9 517.1,539.4 520.1,537.4" stroke="#e2924c" stroke-width="12.9"/>
<path d="M553.9,579.4 C551.8,582.6 546.8,594.2 541.4,598.3 C535.9,602.3 527.6,604.6 521.2,603.8 C514.8,602.9 507.2,598.6 503.0,593.3 C498.7,587.9 495.6,579.0 495.5,571.8 C495.3,564.5 498.2,555.3 502.3,549.6 C506.4,543.9 517.1,539.4 520.1,537.4" stroke="#efb478" stroke-width="10.4"/>
<path d="M553.9,579.4 C551.8,582.6 546.8,594.2 541.4,598.3 C535.9,602.3 527.6,604.6 521.2,603.8 C514.8,602.9 507.2,598.6 503.0,593.3 C498.7,587.9 495.6,579.0 495.5,571.8 C495.3,564.5 498.2,555.3 502.3,549.6 C506.4,543.9 517.1,539.4 520.1,537.4" stroke="#f8d8ae" stroke-width="7.5"/>
<path d="M553.9,579.4 C551.8,582.6 546.8,594.2 541.4,598.3 C535.9,602.3 527.6,604.6 521.2,603.8 C514.8,602.9 507.2,598.6 503.0,593.3 C498.7,587.9 495.6,579.0 495.5,571.8 C495.3,564.5 498.2,555.3 502.3,549.6 C506.4,543.9 517.1,539.4 520.1,537.4" stroke="#fdecd6" stroke-width="3.9"/>
<path d="M770.8,710.2 C776.3,708.3 792.5,698.3 804.0,698.7 C815.5,699.2 830.4,705.0 839.8,712.7 C849.3,720.5 857.9,734.0 860.6,745.3 C863.3,756.6 861.5,771.2 856.2,780.4 C850.8,789.7 839.4,798.1 828.7,800.8 C817.9,803.5 797.8,797.2 791.6,796.5" stroke="#7a3a1c" stroke-width="14.8"/>
<path d="M770.8,710.2 C776.3,708.3 792.5,698.3 804.0,698.7 C815.5,699.2 830.4,705.0 839.8,712.7 C849.3,720.5 857.9,734.0 860.6,745.3 C863.3,756.6 861.5,771.2 856.2,780.4 C850.8,789.7 839.4,798.1 828.7,800.8 C817.9,803.5 797.8,797.2 791.6,796.5" stroke="#e2924c" stroke-width="12.6"/>
<path d="M770.8,710.2 C776.3,708.3 792.5,698.3 804.0,698.7 C815.5,699.2 830.4,705.0 839.8,712.7 C849.3,720.5 857.9,734.0 860.6,745.3 C863.3,756.6 861.5,771.2 856.2,780.4 C850.8,789.7 839.4,798.1 828.7,800.8 C817.9,803.5 797.8,797.2 791.6,796.5" stroke="#efb478" stroke-width="10.0"/>
<path d="M770.8,710.2 C776.3,708.3 792.5,698.3 804.0,698.7 C815.5,699.2 830.4,705.0 839.8,712.7 C849.3,720.5 857.9,734.0 860.6,745.3 C863.3,756.6 861.5,771.2 856.2,780.4 C850.8,789.7 839.4,798.1 828.7,800.8 C817.9,803.5 797.8,797.2 791.6,796.5" stroke="#f8d8ae" stroke-width="7.3"/>
<path d="M770.8,710.2 C776.3,708.3 792.5,698.3 804.0,698.7 C815.5,699.2 830.4,705.0 839.8,712.7 C849.3,720.5 857.9,734.0 860.6,745.3 C863.3,756.6 861.5,771.2 856.2,780.4 C850.8,789.7 839.4,798.1 828.7,800.8 C817.9,803.5 797.8,797.2 791.6,796.5" stroke="#fdecd6" stroke-width="3.8"/>
<path d="M465.9,719.0 C468.1,712.3 468.8,688.8 479.5,678.9 C490.2,668.9 514.0,659.8 530.1,659.4 C546.2,659.0 567.9,667.2 576.1,676.7 C584.3,686.2 585.8,704.9 579.4,716.4 C572.9,728.0 553.1,741.8 537.3,745.9 C521.5,749.9 493.4,741.6 484.6,740.7" stroke="#7a3a1c" stroke-width="15.4"/>
<path d="M465.9,719.0 C468.1,712.3 468.8,688.8 479.5,678.9 C490.2,668.9 514.0,659.8 530.1,659.4 C546.2,659.0 567.9,667.2 576.1,676.7 C584.3,686.2 585.8,704.9 579.4,716.4 C572.9,728.0 553.1,741.8 537.3,745.9 C521.5,749.9 493.4,741.6 484.6,740.7" stroke="#e2924c" stroke-width="13.2"/>
<path d="M465.9,719.0 C468.1,712.3 468.8,688.8 479.5,678.9 C490.2,668.9 514.0,659.8 530.1,659.4 C546.2,659.0 567.9,667.2 576.1,676.7 C584.3,686.2 585.8,704.9 579.4,716.4 C572.9,728.0 553.1,741.8 537.3,745.9 C521.5,749.9 493.4,741.6 484.6,740.7" stroke="#efb478" stroke-width="10.6"/>
<path d="M465.9,719.0 C468.1,712.3 468.8,688.8 479.5,678.9 C490.2,668.9 514.0,659.8 530.1,659.4 C546.2,659.0 567.9,667.2 576.1,676.7 C584.3,686.2 585.8,704.9 579.4,716.4 C572.9,728.0 553.1,741.8 537.3,745.9 C521.5,749.9 493.4,741.6 484.6,740.7" stroke="#f8d8ae" stroke-width="7.7"/>
<path d="M465.9,719.0 C468.1,712.3 468.8,688.8 479.5,678.9 C490.2,668.9 514.0,659.8 530.1,659.4 C546.2,659.0 567.9,667.2 576.1,676.7 C584.3,686.2 585.8,704.9 579.4,716.4 C572.9,728.0 553.1,741.8 537.3,745.9 C521.5,749.9 493.4,741.6 484.6,740.7" stroke="#fdecd6" stroke-width="4.0"/>
<path d="M726.8,822.9 C722.5,825.9 709.7,838.0 701.0,840.8 C692.3,843.7 681.8,843.3 674.6,839.9 C667.3,836.5 660.5,828.8 657.3,820.4 C654.1,812.0 653.4,799.8 655.4,789.5 C657.5,779.1 663.1,766.9 669.7,758.4 C676.3,750.0 690.7,741.9 694.9,738.6" stroke="#7a3a1c" stroke-width="16.0"/>
<path d="M726.8,822.9 C722.5,825.9 709.7,838.0 701.0,840.8 C692.3,843.7 681.8,843.3 674.6,839.9 C667.3,836.5 660.5,828.8 657.3,820.4 C654.1,812.0 653.4,799.8 655.4,789.5 C657.5,779.1 663.1,766.9 669.7,758.4 C676.3,750.0 690.7,741.9 694.9,738.6" stroke="#e2924c" stroke-width="13.8"/>
<path d="M726.8,822.9 C722.5,825.9 709.7,838.0 701.0,840.8 C692.3,843.7 681.8,843.3 674.6,839.9 C667.3,836.5 660.5,828.8 657.3,820.4 C654.1,812.0 653.4,799.8 655.4,789.5 C657.5,779.1 663.1,766.9 669.7,758.4 C676.3,750.0 690.7,741.9 694.9,738.6" stroke="#efb478" stroke-width="11.1"/>
<path d="M726.8,822.9 C722.5,825.9 709.7,838.0 701.0,840.8 C692.3,843.7 681.8,843.3 674.6,839.9 C667.3,836.5 660.5,828.8 657.3,820.4 C654.1,812.0 653.4,799.8 655.4,789.5 C657.5,779.1 663.1,766.9 669.7,758.4 C676.3,750.0 690.7,741.9 694.9,738.6" stroke="#f8d8ae" stroke-width="8.0"/>
<path d="M726.8,822.9 C722.5,825.9 709.7,838.0 701.0,840.8 C692.3,843.7 681.8,843.3 674.6,839.9 C667.3,836.5 660.5,828.8 657.3,820.4 C654.1,812.0 653.4,799.8 655.4,789.5 C657.5,779.1 663.1,766.9 669.7,758.4 C676.3,750.0 690.7,741.9 694.9,738.6" stroke="#fdecd6" stroke-width="4.1"/>
<path d="M868.1,715.2 C871.1,720.1 883.8,735.1 885.8,744.6 C887.8,754.1 885.3,765.4 879.9,772.1 C874.5,778.8 863.5,783.9 853.3,784.6 C843.1,785.2 828.8,781.7 818.7,776.0 C808.6,770.3 797.9,759.8 792.7,750.5 C787.6,741.2 788.7,725.4 787.9,720.3" stroke="#7a3a1c" stroke-width="16.3"/>
<path d="M868.1,715.2 C871.1,720.1 883.8,735.1 885.8,744.6 C887.8,754.1 885.3,765.4 879.9,772.1 C874.5,778.8 863.5,783.9 853.3,784.6 C843.1,785.2 828.8,781.7 818.7,776.0 C808.6,770.3 797.9,759.8 792.7,750.5 C787.6,741.2 788.7,725.4 787.9,720.3" stroke="#e2924c" stroke-width="14.1"/>
<path d="M868.1,715.2 C871.1,720.1 883.8,735.1 885.8,744.6 C887.8,754.1 885.3,765.4 879.9,772.1 C874.5,778.8 863.5,783.9 853.3,784.6 C843.1,785.2 828.8,781.7 818.7,776.0 C808.6,770.3 797.9,759.8 792.7,750.5 C787.6,741.2 788.7,725.4 787.9,720.3" stroke="#efb478" stroke-width="11.3"/>
<path d="M868.1,715.2 C871.1,720.1 883.8,735.1 885.8,744.6 C887.8,754.1 885.3,765.4 879.9,772.1 C874.5,778.8 863.5,783.9 853.3,784.6 C843.1,785.2 828.8,781.7 818.7,776.0 C808.6,770.3 797.9,759.8 792.7,750.5 C787.6,741.2 788.7,725.4 787.9,720.3" stroke="#f8d8ae" stroke-width="8.2"/>
<path d="M868.1,715.2 C871.1,720.1 883.8,735.1 885.8,744.6 C887.8,754.1 885.3,765.4 879.9,772.1 C874.5,778.8 863.5,783.9 853.3,784.6 C843.1,785.2 828.8,781.7 818.7,776.0 C808.6,770.3 797.9,759.8 792.7,750.5 C787.6,741.2 788.7,725.4 787.9,720.3" stroke="#fdecd6" stroke-width="4.2"/>
<path d="M826.3,574.5 C828.5,570.8 833.2,557.7 839.2,552.2 C845.3,546.7 854.5,542.4 862.5,541.4 C870.6,540.4 880.4,542.4 887.3,546.3 C894.2,550.3 900.9,557.7 904.1,565.0 C907.3,572.4 908.2,582.5 906.4,590.4 C904.6,598.3 895.5,608.9 893.3,612.6" stroke="#7a3a1c" stroke-width="15.0"/>
<path d="M826.3,574.5 C828.5,570.8 833.2,557.7 839.2,552.2 C845.3,546.7 854.5,542.4 862.5,541.4 C870.6,540.4 880.4,542.4 887.3,546.3 C894.2,550.3 900.9,557.7 904.1,565.0 C907.3,572.4 908.2,582.5 906.4,590.4 C904.6,598.3 895.5,608.9 893.3,612.6" stroke="#e2924c" stroke-width="12.8"/>
<path d="M826.3,574.5 C828.5,570.8 833.2,557.7 839.2,552.2 C845.3,546.7 854.5,542.4 862.5,541.4 C870.6,540.4 880.4,542.4 887.3,546.3 C894.2,550.3 900.9,557.7 904.1,565.0 C907.3,572.4 908.2,582.5 906.4,590.4 C904.6,598.3 895.5,608.9 893.3,612.6" stroke="#efb478" stroke-width="10.2"/>
<path d="M826.3,574.5 C828.5,570.8 833.2,557.7 839.2,552.2 C845.3,546.7 854.5,542.4 862.5,541.4 C870.6,540.4 880.4,542.4 887.3,546.3 C894.2,550.3 900.9,557.7 904.1,565.0 C907.3,572.4 908.2,582.5 906.4,590.4 C904.6,598.3 895.5,608.9 893.3,612.6" stroke="#f8d8ae" stroke-width="7.4"/>
<path d="M826.3,574.5 C828.5,570.8 833.2,557.7 839.2,552.2 C845.3,546.7 854.5,542.4 862.5,541.4 C870.6,540.4 880.4,542.4 887.3,546.3 C894.2,550.3 900.9,557.7 904.1,565.0 C907.3,572.4 908.2,582.5 906.4,590.4 C904.6,598.3 895.5,608.9 893.3,612.6" stroke="#fdecd6" stroke-width="3.8"/>
<path d="M854.0,774.6 C850.3,775.7 839.0,781.1 831.9,780.7 C824.7,780.3 816.0,776.7 810.9,772.1 C805.9,767.5 801.9,759.6 801.4,753.0 C801.0,746.5 803.7,738.1 808.0,732.8 C812.4,727.5 820.4,722.7 827.5,721.3 C834.5,719.8 846.5,723.7 850.3,724.1" stroke="#7a3a1c" stroke-width="15.8"/>
<path d="M854.0,774.6 C850.3,775.7 839.0,781.1 831.9,780.7 C824.7,780.3 816.0,776.7 810.9,772.1 C805.9,767.5 801.9,759.6 801.4,753.0 C801.0,746.5 803.7,738.1 808.0,732.8 C812.4,727.5 820.4,722.7 827.5,721.3 C834.5,719.8 846.5,723.7 850.3,724.1" stroke="#e2924c" stroke-width="13.6"/>
<path d="M854.0,774.6 C850.3,775.7 839.0,781.1 831.9,780.7 C824.7,780.3 816.0,776.7 810.9,772.1 C805.9,767.5 801.9,759.6 801.4,753.0 C801.0,746.5 803.7,738.1 808.0,732.8 C812.4,727.5 820.4,722.7 827.5,721.3 C834.5,719.8 846.5,723.7 850.3,724.1" stroke="#efb478" stroke-width="10.9"/>
<path d="M854.0,774.6 C850.3,775.7 839.0,781.1 831.9,780.7 C824.7,780.3 816.0,776.7 810.9,772.1 C805.9,767.5 801.9,759.6 801.4,753.0 C801.0,746.5 803.7,738.1 808.0,732.8 C812.4,727.5 820.4,722.7 827.5,721.3 C834.5,719.8 846.5,723.7 850.3,724.1" stroke="#f8d8ae" stroke-width="7.9"/>
<path d="M854.0,774.6 C850.3,775.7 839.0,781.1 831.9,780.7 C824.7,780.3 816.0,776.7 810.9,772.1 C805.9,767.5 801.9,759.6 801.4,753.0 C801.0,746.5 803.7,738.1 808.0,732.8 C812.4,727.5 820.4,722.7 827.5,721.3 C834.5,719.8 846.5,723.7 850.3,724.1" stroke="#fdecd6" stroke-width="4.1"/>
<path d="M903.9,710.9 C898.5,714.4 883.1,730.6 871.6,731.9 C860.2,733.3 843.5,727.3 835.2,718.9 C826.8,710.5 820.7,693.4 821.8,681.6 C822.8,669.7 831.8,654.3 841.5,647.8 C851.1,641.4 868.5,639.1 879.5,642.9 C890.5,646.7 902.8,665.9 907.5,670.5" stroke="#7a3a1c" stroke-width="15.1"/>
<path d="M903.9,710.9 C898.5,714.4 883.1,730.6 871.6,731.9 C860.2,733.3 843.5,727.3 835.2,718.9 C826.8,710.5 820.7,693.4 821.8,681.6 C822.8,669.7 831.8,654.3 841.5,647.8 C851.1,641.4 868.5,639.1 879.5,642.9 C890.5,646.7 902.8,665.9 907.5,670.5" stroke="#e2924c" stroke-width="12.9"/>
<path d="M903.9,710.9 C898.5,714.4 883.1,730.6 871.6,731.9 C860.2,733.3 843.5,727.3 835.2,718.9 C826.8,710.5 820.7,693.4 821.8,681.6 C822.8,669.7 831.8,654.3 841.5,647.8 C851.1,641.4 868.5,639.1 879.5,642.9 C890.5,646.7 902.8,665.9 907.5,670.5" stroke="#efb478" stroke-width="10.3"/>
<path d="M903.9,710.9 C898.5,714.4 883.1,730.6 871.6,731.9 C860.2,733.3 843.5,727.3 835.2,718.9 C826.8,710.5 820.7,693.4 821.8,681.6 C822.8,669.7 831.8,654.3 841.5,647.8 C851.1,641.4 868.5,639.1 879.5,642.9 C890.5,646.7 902.8,665.9 907.5,670.5" stroke="#f8d8ae" stroke-width="7.5"/>
<path d="M903.9,710.9 C898.5,714.4 883.1,730.6 871.6,731.9 C860.2,733.3 843.5,727.3 835.2,718.9 C826.8,710.5 820.7,693.4 821.8,681.6 C822.8,669.7 831.8,654.3 841.5,647.8 C851.1,641.4 868.5,639.1 879.5,642.9 C890.5,646.7 902.8,665.9 907.5,670.5" stroke="#fdecd6" stroke-width="3.9"/>
<path d="M549.6,660.1 C549.2,663.1 550.6,673.9 547.3,678.6 C543.9,683.3 536.5,687.3 529.4,688.2 C522.3,689.2 512.0,687.5 504.6,684.2 C497.3,680.9 489.2,674.4 485.2,668.6 C481.2,662.7 479.3,654.5 480.7,648.9 C482.0,643.3 491.1,637.2 493.1,634.9" stroke="#7a3a1c" stroke-width="15.6"/>
<path d="M549.6,660.1 C549.2,663.1 550.6,673.9 547.3,678.6 C543.9,683.3 536.5,687.3 529.4,688.2 C522.3,689.2 512.0,687.5 504.6,684.2 C497.3,680.9 489.2,674.4 485.2,668.6 C481.2,662.7 479.3,654.5 480.7,648.9 C482.0,643.3 491.1,637.2 493.1,634.9" stroke="#e2924c" stroke-width="13.4"/>
<path d="M549.6,660.1 C549.2,663.1 550.6,673.9 547.3,678.6 C543.9,683.3 536.5,687.3 529.4,688.2 C522.3,689.2 512.0,687.5 504.6,684.2 C497.3,680.9 489.2,674.4 485.2,668.6 C481.2,662.7 479.3,654.5 480.7,648.9 C482.0,643.3 491.1,637.2 493.1,634.9" stroke="#efb478" stroke-width="10.7"/>
<path d="M549.6,660.1 C549.2,663.1 550.6,673.9 547.3,678.6 C543.9,683.3 536.5,687.3 529.4,688.2 C522.3,689.2 512.0,687.5 504.6,684.2 C497.3,680.9 489.2,674.4 485.2,668.6 C481.2,662.7 479.3,654.5 480.7,648.9 C482.0,643.3 491.1,637.2 493.1,634.9" stroke="#f8d8ae" stroke-width="7.8"/>
<path d="M549.6,660.1 C549.2,663.1 550.6,673.9 547.3,678.6 C543.9,683.3 536.5,687.3 529.4,688.2 C522.3,689.2 512.0,687.5 504.6,684.2 C497.3,680.9 489.2,674.4 485.2,668.6 C481.2,662.7 479.3,654.5 480.7,648.9 C482.0,643.3 491.1,637.2 493.1,634.9" stroke="#fdecd6" stroke-width="4.0"/>
<path d="M623.4,660.4 C622.3,656.2 617.7,643.3 616.8,635.1 C615.9,626.8 616.4,617.3 618.2,610.7 C619.9,604.1 623.3,598.2 627.0,595.4 C630.7,592.7 635.9,592.2 640.4,594.2 C644.9,596.2 650.2,601.4 653.9,607.5 C657.7,613.6 661.6,627.0 663.1,630.9" stroke="#7a3a1c" stroke-width="16.3"/>
<path d="M623.4,660.4 C622.3,656.2 617.7,643.3 616.8,635.1 C615.9,626.8 616.4,617.3 618.2,610.7 C619.9,604.1 623.3,598.2 627.0,595.4 C630.7,592.7 635.9,592.2 640.4,594.2 C644.9,596.2 650.2,601.4 653.9,607.5 C657.7,613.6 661.6,627.0 663.1,630.9" stroke="#e2924c" stroke-width="14.1"/>
<path d="M623.4,660.4 C622.3,656.2 617.7,643.3 616.8,635.1 C615.9,626.8 616.4,617.3 618.2,610.7 C619.9,604.1 623.3,598.2 627.0,595.4 C630.7,592.7 635.9,592.2 640.4,594.2 C644.9,596.2 650.2,601.4 653.9,607.5 C657.7,613.6 661.6,627.0 663.1,630.9" stroke="#efb478" stroke-width="11.3"/>
<path d="M623.4,660.4 C622.3,656.2 617.7,643.3 616.8,635.1 C615.9,626.8 616.4,617.3 618.2,610.7 C619.9,604.1 623.3,598.2 627.0,595.4 C630.7,592.7 635.9,592.2 640.4,594.2 C644.9,596.2 650.2,601.4 653.9,607.5 C657.7,613.6 661.6,627.0 663.1,630.9" stroke="#f8d8ae" stroke-width="8.2"/>
<path d="M623.4,660.4 C622.3,656.2 617.7,643.3 616.8,635.1 C615.9,626.8 616.4,617.3 618.2,610.7 C619.9,604.1 623.3,598.2 627.0,595.4 C630.7,592.7 635.9,592.2 640.4,594.2 C644.9,596.2 650.2,601.4 653.9,607.5 C657.7,613.6 661.6,627.0 663.1,630.9" stroke="#fdecd6" stroke-width="4.2"/>
<path d="M459.6,567.0 C465.2,567.4 483.2,564.3 493.4,569.6 C503.7,574.9 515.6,587.5 520.9,598.8 C526.3,610.0 528.4,626.5 525.7,637.0 C523.0,647.5 514.0,658.2 504.9,661.7 C495.8,665.2 481.1,663.6 470.9,658.0 C460.7,652.5 448.4,633.2 443.9,628.3" stroke="#7a3a1c" stroke-width="16.3"/>
<path d="M459.6,567.0 C465.2,567.4 483.2,564.3 493.4,569.6 C503.7,574.9 515.6,587.5 520.9,598.8 C526.3,610.0 528.4,626.5 525.7,637.0 C523.0,647.5 514.0,658.2 504.9,661.7 C495.8,665.2 481.1,663.6 470.9,658.0 C460.7,652.5 448.4,633.2 443.9,628.3" stroke="#e2924c" stroke-width="14.1"/>
<path d="M459.6,567.0 C465.2,567.4 483.2,564.3 493.4,569.6 C503.7,574.9 515.6,587.5 520.9,598.8 C526.3,610.0 528.4,626.5 525.7,637.0 C523.0,647.5 514.0,658.2 504.9,661.7 C495.8,665.2 481.1,663.6 470.9,658.0 C460.7,652.5 448.4,633.2 443.9,628.3" stroke="#efb478" stroke-width="11.3"/>
<path d="M459.6,567.0 C465.2,567.4 483.2,564.3 493.4,569.6 C503.7,574.9 515.6,587.5 520.9,598.8 C526.3,610.0 528.4,626.5 525.7,637.0 C523.0,647.5 514.0,658.2 504.9,661.7 C495.8,665.2 481.1,663.6 470.9,658.0 C460.7,652.5 448.4,633.2 443.9,628.3" stroke="#f8d8ae" stroke-width="8.2"/>
<path d="M459.6,567.0 C465.2,567.4 483.2,564.3 493.4,569.6 C503.7,574.9 515.6,587.5 520.9,598.8 C526.3,610.0 528.4,626.5 525.7,637.0 C523.0,647.5 514.0,658.2 504.9,661.7 C495.8,665.2 481.1,663.6 470.9,658.0 C460.7,652.5 448.4,633.2 443.9,628.3" stroke="#fdecd6" stroke-width="4.2"/>
<path d="M479.2,626.7 C479.4,630.1 483.1,639.9 480.6,646.9 C478.2,653.9 471.1,663.4 464.3,668.8 C457.6,674.2 447.1,678.8 440.0,679.3 C433.0,679.8 425.3,676.7 422.2,672.1 C419.2,667.4 418.9,658.5 421.6,651.5 C424.3,644.4 435.7,633.4 438.5,629.8" stroke="#7a3a1c" stroke-width="16.2"/>
<path d="M479.2,626.7 C479.4,630.1 483.1,639.9 480.6,646.9 C478.2,653.9 471.1,663.4 464.3,668.8 C457.6,674.2 447.1,678.8 440.0,679.3 C433.0,679.8 425.3,676.7 422.2,672.1 C419.2,667.4 418.9,658.5 421.6,651.5 C424.3,644.4 435.7,633.4 438.5,629.8" stroke="#e2924c" stroke-width="14.0"/>
<path d="M479.2,626.7 C479.4,630.1 483.1,639.9 480.6,646.9 C478.2,653.9 471.1,663.4 464.3,668.8 C457.6,674.2 447.1,678.8 440.0,679.3 C433.0,679.8 425.3,676.7 422.2,672.1 C419.2,667.4 418.9,658.5 421.6,651.5 C424.3,644.4 435.7,633.4 438.5,629.8" stroke="#efb478" stroke-width="11.2"/>
<path d="M479.2,626.7 C479.4,630.1 483.1,639.9 480.6,646.9 C478.2,653.9 471.1,663.4 464.3,668.8 C457.6,674.2 447.1,678.8 440.0,679.3 C433.0,679.8 425.3,676.7 422.2,672.1 C419.2,667.4 418.9,658.5 421.6,651.5 C424.3,644.4 435.7,633.4 438.5,629.8" stroke="#f8d8ae" stroke-width="8.1"/>
<path d="M479.2,626.7 C479.4,630.1 483.1,639.9 480.6,646.9 C478.2,653.9 471.1,663.4 464.3,668.8 C457.6,674.2 447.1,678.8 440.0,679.3 C433.0,679.8 425.3,676.7 422.2,672.1 C419.2,667.4 418.9,658.5 421.6,651.5 C424.3,644.4 435.7,633.4 438.5,629.8" stroke="#fdecd6" stroke-width="4.2"/>
<path d="M873.0,585.9 C872.7,591.8 874.8,611.6 871.2,621.7 C867.6,631.9 859.2,642.5 851.4,646.8 C843.6,651.1 832.2,651.4 824.4,647.5 C816.6,643.6 808.3,633.4 804.7,623.5 C801.1,613.5 800.4,598.4 803.0,587.7 C805.6,577.0 817.4,564.2 820.2,559.5" stroke="#7a3a1c" stroke-width="15.8"/>
<path d="M873.0,585.9 C872.7,591.8 874.8,611.6 871.2,621.7 C867.6,631.9 859.2,642.5 851.4,646.8 C843.6,651.1 832.2,651.4 824.4,647.5 C816.6,643.6 808.3,633.4 804.7,623.5 C801.1,613.5 800.4,598.4 803.0,587.7 C805.6,577.0 817.4,564.2 820.2,559.5" stroke="#e2924c" stroke-width="13.6"/>
<path d="M873.0,585.9 C872.7,591.8 874.8,611.6 871.2,621.7 C867.6,631.9 859.2,642.5 851.4,646.8 C843.6,651.1 832.2,651.4 824.4,647.5 C816.6,643.6 808.3,633.4 804.7,623.5 C801.1,613.5 800.4,598.4 803.0,587.7 C805.6,577.0 817.4,564.2 820.2,559.5" stroke="#efb478" stroke-width="10.9"/>
<path d="M873.0,585.9 C872.7,591.8 874.8,611.6 871.2,621.7 C867.6,631.9 859.2,642.5 851.4,646.8 C843.6,651.1 832.2,651.4 824.4,647.5 C816.6,643.6 808.3,633.4 804.7,623.5 C801.1,613.5 800.4,598.4 803.0,587.7 C805.6,577.0 817.4,564.2 820.2,559.5" stroke="#f8d8ae" stroke-width="7.9"/>
<path d="M873.0,585.9 C872.7,591.8 874.8,611.6 871.2,621.7 C867.6,631.9 859.2,642.5 851.4,646.8 C843.6,651.1 832.2,651.4 824.4,647.5 C816.6,643.6 808.3,633.4 804.7,623.5 C801.1,613.5 800.4,598.4 803.0,587.7 C805.6,577.0 817.4,564.2 820.2,559.5" stroke="#fdecd6" stroke-width="4.1"/>
<path d="M738.1,837.1 C732.9,835.3 713.7,835.8 706.9,826.3 C700.1,816.7 695.7,795.5 697.4,780.0 C699.0,764.5 707.9,743.0 716.8,733.2 C725.6,723.5 741.1,718.0 750.4,721.4 C759.8,724.7 770.1,739.4 772.9,753.4 C775.7,767.3 768.2,796.4 767.2,805.0" stroke="#7a3a1c" stroke-width="15.0"/>
<path d="M738.1,837.1 C732.9,835.3 713.7,835.8 706.9,826.3 C700.1,816.7 695.7,795.5 697.4,780.0 C699.0,764.5 707.9,743.0 716.8,733.2 C725.6,723.5 741.1,718.0 750.4,721.4 C759.8,724.7 770.1,739.4 772.9,753.4 C775.7,767.3 768.2,796.4 767.2,805.0" stroke="#e2924c" stroke-width="12.8"/>
<path d="M738.1,837.1 C732.9,835.3 713.7,835.8 706.9,826.3 C700.1,816.7 695.7,795.5 697.4,780.0 C699.0,764.5 707.9,743.0 716.8,733.2 C725.6,723.5 741.1,718.0 750.4,721.4 C759.8,724.7 770.1,739.4 772.9,753.4 C775.7,767.3 768.2,796.4 767.2,805.0" stroke="#efb478" stroke-width="10.2"/>
<path d="M738.1,837.1 C732.9,835.3 713.7,835.8 706.9,826.3 C700.1,816.7 695.7,795.5 697.4,780.0 C699.0,764.5 707.9,743.0 716.8,733.2 C725.6,723.5 741.1,718.0 750.4,721.4 C759.8,724.7 770.1,739.4 772.9,753.4 C775.7,767.3 768.2,796.4 767.2,805.0" stroke="#f8d8ae" stroke-width="7.4"/>
<path d="M738.1,837.1 C732.9,835.3 713.7,835.8 706.9,826.3 C700.1,816.7 695.7,795.5 697.4,780.0 C699.0,764.5 707.9,743.0 716.8,733.2 C725.6,723.5 741.1,718.0 750.4,721.4 C759.8,724.7 770.1,739.4 772.9,753.4 C775.7,767.3 768.2,796.4 767.2,805.0" stroke="#fdecd6" stroke-width="3.8"/>
<path d="M746.7,795.2 C748.3,790.5 750.2,774.0 755.9,767.4 C761.6,760.8 773.2,755.3 781.0,755.6 C788.7,755.8 798.7,762.0 802.4,768.9 C806.1,775.8 806.6,788.8 803.4,797.0 C800.2,805.2 790.9,814.8 783.2,817.9 C775.6,820.9 761.9,815.7 757.6,815.2" stroke="#7a3a1c" stroke-width="16.6"/>
<path d="M746.7,795.2 C748.3,790.5 750.2,774.0 755.9,767.4 C761.6,760.8 773.2,755.3 781.0,755.6 C788.7,755.8 798.7,762.0 802.4,768.9 C806.1,775.8 806.6,788.8 803.4,797.0 C800.2,805.2 790.9,814.8 783.2,817.9 C775.6,820.9 761.9,815.7 757.6,815.2" stroke="#e2924c" stroke-width="14.4"/>
<path d="M746.7,795.2 C748.3,790.5 750.2,774.0 755.9,767.4 C761.6,760.8 773.2,755.3 781.0,755.6 C788.7,755.8 798.7,762.0 802.4,768.9 C806.1,775.8 806.6,788.8 803.4,797.0 C800.2,805.2 790.9,814.8 783.2,817.9 C775.6,820.9 761.9,815.7 757.6,815.2" stroke="#efb478" stroke-width="11.5"/>
<path d="M746.7,795.2 C748.3,790.5 750.2,774.0 755.9,767.4 C761.6,760.8 773.2,755.3 781.0,755.6 C788.7,755.8 798.7,762.0 802.4,768.9 C806.1,775.8 806.6,788.8 803.4,797.0 C800.2,805.2 790.9,814.8 783.2,817.9 C775.6,820.9 761.9,815.7 757.6,815.2" stroke="#f8d8ae" stroke-width="8.4"/>
<path d="M746.7,795.2 C748.3,790.5 750.2,774.0 755.9,767.4 C761.6,760.8 773.2,755.3 781.0,755.6 C788.7,755.8 798.7,762.0 802.4,768.9 C806.1,775.8 806.6,788.8 803.4,797.0 C800.2,805.2 790.9,814.8 783.2,817.9 C775.6,820.9 761.9,815.7 757.6,815.2" stroke="#fdecd6" stroke-width="4.3"/>
<path d="M530.7,613.2 C533.9,606.8 539.5,583.3 549.8,574.8 C560.1,566.4 578.5,561.0 592.6,562.3 C606.7,563.6 624.7,572.4 634.6,582.7 C644.4,593.1 651.7,611.0 651.6,624.4 C651.6,637.9 644.0,654.6 634.0,663.4 C624.1,672.3 598.9,675.1 591.8,677.4" stroke="#7a3a1c" stroke-width="15.4"/>
<path d="M530.7,613.2 C533.9,606.8 539.5,583.3 549.8,574.8 C560.1,566.4 578.5,561.0 592.6,562.3 C606.7,563.6 624.7,572.4 634.6,582.7 C644.4,593.1 651.7,611.0 651.6,624.4 C651.6,637.9 644.0,654.6 634.0,663.4 C624.1,672.3 598.9,675.1 591.8,677.4" stroke="#e2924c" stroke-width="13.2"/>
<path d="M530.7,613.2 C533.9,606.8 539.5,583.3 549.8,574.8 C560.1,566.4 578.5,561.0 592.6,562.3 C606.7,563.6 624.7,572.4 634.6,582.7 C644.4,593.1 651.7,611.0 651.6,624.4 C651.6,637.9 644.0,654.6 634.0,663.4 C624.1,672.3 598.9,675.1 591.8,677.4" stroke="#efb478" stroke-width="10.5"/>
<path d="M530.7,613.2 C533.9,606.8 539.5,583.3 549.8,574.8 C560.1,566.4 578.5,561.0 592.6,562.3 C606.7,563.6 624.7,572.4 634.6,582.7 C644.4,593.1 651.7,611.0 651.6,624.4 C651.6,637.9 644.0,654.6 634.0,663.4 C624.1,672.3 598.9,675.1 591.8,677.4" stroke="#f8d8ae" stroke-width="7.6"/>
<path d="M530.7,613.2 C533.9,606.8 539.5,583.3 549.8,574.8 C560.1,566.4 578.5,561.0 592.6,562.3 C606.7,563.6 624.7,572.4 634.6,582.7 C644.4,593.1 651.7,611.0 651.6,624.4 C651.6,637.9 644.0,654.6 634.0,663.4 C624.1,672.3 598.9,675.1 591.8,677.4" stroke="#fdecd6" stroke-width="4.0"/>
<path d="M678.1,574.7 C679.4,576.4 684.2,580.4 685.5,584.6 C686.8,588.9 686.9,595.0 685.9,600.2 C684.8,605.4 682.2,611.6 679.2,615.9 C676.2,620.2 671.7,624.2 667.8,626.1 C663.8,628.0 659.1,628.5 655.7,627.3 C652.3,626.1 648.7,620.3 647.3,618.9" stroke="#7a3a1c" stroke-width="16.7"/>
<path d="M678.1,574.7 C679.4,576.4 684.2,580.4 685.5,584.6 C686.8,588.9 686.9,595.0 685.9,600.2 C684.8,605.4 682.2,611.6 679.2,615.9 C676.2,620.2 671.7,624.2 667.8,626.1 C663.8,628.0 659.1,628.5 655.7,627.3 C652.3,626.1 648.7,620.3 647.3,618.9" stroke="#e2924c" stroke-width="14.5"/>
<path d="M678.1,574.7 C679.4,576.4 684.2,580.4 685.5,584.6 C686.8,588.9 686.9,595.0 685.9,600.2 C684.8,605.4 682.2,611.6 679.2,615.9 C676.2,620.2 671.7,624.2 667.8,626.1 C663.8,628.0 659.1,628.5 655.7,627.3 C652.3,626.1 648.7,620.3 647.3,618.9" stroke="#efb478" stroke-width="11.6"/>
<path d="M678.1,574.7 C679.4,576.4 684.2,580.4 685.5,584.6 C686.8,588.9 686.9,595.0 685.9,600.2 C684.8,605.4 682.2,611.6 679.2,615.9 C676.2,620.2 671.7,624.2 667.8,626.1 C663.8,628.0 659.1,628.5 655.7,627.3 C652.3,626.1 648.7,620.3 647.3,618.9" stroke="#f8d8ae" stroke-width="8.4"/>
<path d="M678.1,574.7 C679.4,576.4 684.2,580.4 685.5,584.6 C686.8,588.9 686.9,595.0 685.9,600.2 C684.8,605.4 682.2,611.6 679.2,615.9 C676.2,620.2 671.7,624.2 667.8,626.1 C663.8,628.0 659.1,628.5 655.7,627.3 C652.3,626.1 648.7,620.3 647.3,618.9" stroke="#fdecd6" stroke-width="4.3"/>
<path d="M824.8,522.8 C824.1,526.0 823.6,536.8 820.5,542.4 C817.4,547.9 811.7,553.2 806.1,555.9 C800.5,558.6 792.9,559.6 786.9,558.5 C780.9,557.4 774.3,553.7 770.1,549.2 C765.8,544.7 762.5,537.6 761.6,531.4 C760.8,525.1 764.2,514.9 764.8,511.6" stroke="#7a3a1c" stroke-width="14.8"/>
<path d="M824.8,522.8 C824.1,526.0 823.6,536.8 820.5,542.4 C817.4,547.9 811.7,553.2 806.1,555.9 C800.5,558.6 792.9,559.6 786.9,558.5 C780.9,557.4 774.3,553.7 770.1,549.2 C765.8,544.7 762.5,537.6 761.6,531.4 C760.8,525.1 764.2,514.9 764.8,511.6" stroke="#e2924c" stroke-width="12.6"/>
<path d="M824.8,522.8 C824.1,526.0 823.6,536.8 820.5,542.4 C817.4,547.9 811.7,553.2 806.1,555.9 C800.5,558.6 792.9,559.6 786.9,558.5 C780.9,557.4 774.3,553.7 770.1,549.2 C765.8,544.7 762.5,537.6 761.6,531.4 C760.8,525.1 764.2,514.9 764.8,511.6" stroke="#efb478" stroke-width="10.1"/>
<path d="M824.8,522.8 C824.1,526.0 823.6,536.8 820.5,542.4 C817.4,547.9 811.7,553.2 806.1,555.9 C800.5,558.6 792.9,559.6 786.9,558.5 C780.9,557.4 774.3,553.7 770.1,549.2 C765.8,544.7 762.5,537.6 761.6,531.4 C760.8,525.1 764.2,514.9 764.8,511.6" stroke="#f8d8ae" stroke-width="7.3"/>
<path d="M824.8,522.8 C824.1,526.0 823.6,536.8 820.5,542.4 C817.4,547.9 811.7,553.2 806.1,555.9 C800.5,558.6 792.9,559.6 786.9,558.5 C780.9,557.4 774.3,553.7 770.1,549.2 C765.8,544.7 762.5,537.6 761.6,531.4 C760.8,525.1 764.2,514.9 764.8,511.6" stroke="#fdecd6" stroke-width="3.8"/>
<path d="M751.9,614.7 C749.3,616.2 741.8,622.7 736.2,623.9 C730.6,625.2 723.6,624.6 718.4,622.4 C713.2,620.2 707.9,615.5 704.9,610.6 C702.0,605.7 700.3,598.8 700.7,592.9 C701.1,587.1 703.7,580.4 707.3,575.8 C710.9,571.2 719.8,567.1 722.3,565.4" stroke="#7a3a1c" stroke-width="16.4"/>
<path d="M751.9,614.7 C749.3,616.2 741.8,622.7 736.2,623.9 C730.6,625.2 723.6,624.6 718.4,622.4 C713.2,620.2 707.9,615.5 704.9,610.6 C702.0,605.7 700.3,598.8 700.7,592.9 C701.1,587.1 703.7,580.4 707.3,575.8 C710.9,571.2 719.8,567.1 722.3,565.4" stroke="#e2924c" stroke-width="14.2"/>
<path d="M751.9,614.7 C749.3,616.2 741.8,622.7 736.2,623.9 C730.6,625.2 723.6,624.6 718.4,622.4 C713.2,620.2 707.9,615.5 704.9,610.6 C702.0,605.7 700.3,598.8 700.7,592.9 C701.1,587.1 703.7,580.4 707.3,575.8 C710.9,571.2 719.8,567.1 722.3,565.4" stroke="#efb478" stroke-width="11.4"/>
<path d="M751.9,614.7 C749.3,616.2 741.8,622.7 736.2,623.9 C730.6,625.2 723.6,624.6 718.4,622.4 C713.2,620.2 707.9,615.5 704.9,610.6 C702.0,605.7 700.3,598.8 700.7,592.9 C701.1,587.1 703.7,580.4 707.3,575.8 C710.9,571.2 719.8,567.1 722.3,565.4" stroke="#f8d8ae" stroke-width="8.2"/>
<path d="M751.9,614.7 C749.3,616.2 741.8,622.7 736.2,623.9 C730.6,625.2 723.6,624.6 718.4,622.4 C713.2,620.2 707.9,615.5 704.9,610.6 C702.0,605.7 700.3,598.8 700.7,592.9 C701.1,587.1 703.7,580.4 707.3,575.8 C710.9,571.2 719.8,567.1 722.3,565.4" stroke="#fdecd6" stroke-width="4.3"/>
<path d="M614.9,604.9 C609.6,602.1 590.7,596.7 583.5,588.3 C576.4,580.0 571.4,565.6 572.0,554.8 C572.6,544.0 579.1,530.7 587.1,523.8 C595.1,516.8 609.2,512.3 619.9,513.2 C630.7,514.1 644.3,521.0 651.6,529.2 C658.9,537.4 661.6,556.9 663.6,562.5" stroke="#7a3a1c" stroke-width="15.2"/>
<path d="M614.9,604.9 C609.6,602.1 590.7,596.7 583.5,588.3 C576.4,580.0 571.4,565.6 572.0,554.8 C572.6,544.0 579.1,530.7 587.1,523.8 C595.1,516.8 609.2,512.3 619.9,513.2 C630.7,514.1 644.3,521.0 651.6,529.2 C658.9,537.4 661.6,556.9 663.6,562.5" stroke="#e2924c" stroke-width="13.0"/>
<path d="M614.9,604.9 C609.6,602.1 590.7,596.7 583.5,588.3 C576.4,580.0 571.4,565.6 572.0,554.8 C572.6,544.0 579.1,530.7 587.1,523.8 C595.1,516.8 609.2,512.3 619.9,513.2 C630.7,514.1 644.3,521.0 651.6,529.2 C658.9,537.4 661.6,556.9 663.6,562.5" stroke="#efb478" stroke-width="10.4"/>
<path d="M614.9,604.9 C609.6,602.1 590.7,596.7 583.5,588.3 C576.4,580.0 571.4,565.6 572.0,554.8 C572.6,544.0 579.1,530.7 587.1,523.8 C595.1,516.8 609.2,512.3 619.9,513.2 C630.7,514.1 644.3,521.0 651.6,529.2 C658.9,537.4 661.6,556.9 663.6,562.5" stroke="#f8d8ae" stroke-width="7.5"/>
<path d="M614.9,604.9 C609.6,602.1 590.7,596.7 583.5,588.3 C576.4,580.0 571.4,565.6 572.0,554.8 C572.6,544.0 579.1,530.7 587.1,523.8 C595.1,516.8 609.2,512.3 619.9,513.2 C630.7,514.1 644.3,521.0 651.6,529.2 C658.9,537.4 661.6,556.9 663.6,562.5" stroke="#fdecd6" stroke-width="3.9"/>
<path d="M518.5,568.6 C518.1,562.4 514.3,542.5 516.2,531.2 C518.2,519.9 524.0,507.2 530.2,500.6 C536.5,494.0 546.2,490.2 553.8,491.6 C561.3,492.9 570.2,500.0 575.3,508.7 C580.5,517.3 584.2,531.7 584.5,543.5 C584.7,555.2 578.0,573.1 576.7,579.0" stroke="#7a3a1c" stroke-width="14.7"/>
<path d="M518.5,568.6 C518.1,562.4 514.3,542.5 516.2,531.2 C518.2,519.9 524.0,507.2 530.2,500.6 C536.5,494.0 546.2,490.2 553.8,491.6 C561.3,492.9 570.2,500.0 575.3,508.7 C580.5,517.3 584.2,531.7 584.5,543.5 C584.7,555.2 578.0,573.1 576.7,579.0" stroke="#e2924c" stroke-width="12.5"/>
<path d="M518.5,568.6 C518.1,562.4 514.3,542.5 516.2,531.2 C518.2,519.9 524.0,507.2 530.2,500.6 C536.5,494.0 546.2,490.2 553.8,491.6 C561.3,492.9 570.2,500.0 575.3,508.7 C580.5,517.3 584.2,531.7 584.5,543.5 C584.7,555.2 578.0,573.1 576.7,579.0" stroke="#efb478" stroke-width="10.0"/>
<path d="M518.5,568.6 C518.1,562.4 514.3,542.5 516.2,531.2 C518.2,519.9 524.0,507.2 530.2,500.6 C536.5,494.0 546.2,490.2 553.8,491.6 C561.3,492.9 570.2,500.0 575.3,508.7 C580.5,517.3 584.2,531.7 584.5,543.5 C584.7,555.2 578.0,573.1 576.7,579.0" stroke="#f8d8ae" stroke-width="7.3"/>
<path d="M518.5,568.6 C518.1,562.4 514.3,542.5 516.2,531.2 C518.2,519.9 524.0,507.2 530.2,500.6 C536.5,494.0 546.2,490.2 553.8,491.6 C561.3,492.9 570.2,500.0 575.3,508.7 C580.5,517.3 584.2,531.7 584.5,543.5 C584.7,555.2 578.0,573.1 576.7,579.0" stroke="#fdecd6" stroke-width="3.8"/>
<path d="M722.2,636.0 C726.2,633.6 737.6,623.0 746.3,621.1 C755.0,619.3 768.0,620.9 774.6,624.7 C781.2,628.5 786.4,637.3 786.0,644.0 C785.5,650.7 779.2,660.2 772.0,664.8 C764.9,669.3 751.6,672.4 743.1,671.5 C734.6,670.6 724.4,661.3 720.7,659.3" stroke="#7a3a1c" stroke-width="15.6"/>
<path d="M722.2,636.0 C726.2,633.6 737.6,623.0 746.3,621.1 C755.0,619.3 768.0,620.9 774.6,624.7 C781.2,628.5 786.4,637.3 786.0,644.0 C785.5,650.7 779.2,660.2 772.0,664.8 C764.9,669.3 751.6,672.4 743.1,671.5 C734.6,670.6 724.4,661.3 720.7,659.3" stroke="#e2924c" stroke-width="13.4"/>
<path d="M722.2,636.0 C726.2,633.6 737.6,623.0 746.3,621.1 C755.0,619.3 768.0,620.9 774.6,624.7 C781.2,628.5 786.4,637.3 786.0,644.0 C785.5,650.7 779.2,660.2 772.0,664.8 C764.9,669.3 751.6,672.4 743.1,671.5 C734.6,670.6 724.4,661.3 720.7,659.3" stroke="#efb478" stroke-width="10.7"/>
<path d="M722.2,636.0 C726.2,633.6 737.6,623.0 746.3,621.1 C755.0,619.3 768.0,620.9 774.6,624.7 C781.2,628.5 786.4,637.3 786.0,644.0 C785.5,650.7 779.2,660.2 772.0,664.8 C764.9,669.3 751.6,672.4 743.1,671.5 C734.6,670.6 724.4,661.3 720.7,659.3" stroke="#f8d8ae" stroke-width="7.8"/>
<path d="M722.2,636.0 C726.2,633.6 737.6,623.0 746.3,621.1 C755.0,619.3 768.0,620.9 774.6,624.7 C781.2,628.5 786.4,637.3 786.0,644.0 C785.5,650.7 779.2,660.2 772.0,664.8 C764.9,669.3 751.6,672.4 743.1,671.5 C734.6,670.6 724.4,661.3 720.7,659.3" stroke="#fdecd6" stroke-width="4.0"/>
<path d="M617.6,798.3 C615.3,795.3 605.8,788.1 604.0,780.7 C602.2,773.4 603.3,762.4 606.7,754.2 C610.1,746.0 617.4,736.6 624.4,731.6 C631.4,726.5 641.3,723.3 648.5,723.8 C655.7,724.3 663.4,728.8 667.3,734.6 C671.2,740.4 671.0,754.8 671.7,758.8" stroke="#7a3a1c" stroke-width="16.4"/>
<path d="M617.6,798.3 C615.3,795.3 605.8,788.1 604.0,780.7 C602.2,773.4 603.3,762.4 606.7,754.2 C610.1,746.0 617.4,736.6 624.4,731.6 C631.4,726.5 641.3,723.3 648.5,723.8 C655.7,724.3 663.4,728.8 667.3,734.6 C671.2,740.4 671.0,754.8 671.7,758.8" stroke="#e2924c" stroke-width="14.2"/>
<path d="M617.6,798.3 C615.3,795.3 605.8,788.1 604.0,780.7 C602.2,773.4 603.3,762.4 606.7,754.2 C610.1,746.0 617.4,736.6 624.4,731.6 C631.4,726.5 641.3,723.3 648.5,723.8 C655.7,724.3 663.4,728.8 667.3,734.6 C671.2,740.4 671.0,754.8 671.7,758.8" stroke="#efb478" stroke-width="11.3"/>
<path d="M617.6,798.3 C615.3,795.3 605.8,788.1 604.0,780.7 C602.2,773.4 603.3,762.4 606.7,754.2 C610.1,746.0 617.4,736.6 624.4,731.6 C631.4,726.5 641.3,723.3 648.5,723.8 C655.7,724.3 663.4,728.8 667.3,734.6 C671.2,740.4 671.0,754.8 671.7,758.8" stroke="#f8d8ae" stroke-width="8.2"/>
<path d="M617.6,798.3 C615.3,795.3 605.8,788.1 604.0,780.7 C602.2,773.4 603.3,762.4 606.7,754.2 C610.1,746.0 617.4,736.6 624.4,731.6 C631.4,726.5 641.3,723.3 648.5,723.8 C655.7,724.3 663.4,728.8 667.3,734.6 C671.2,740.4 671.0,754.8 671.7,758.8" stroke="#fdecd6" stroke-width="4.2"/>
<path d="M763.9,705.8 C760.0,706.4 748.4,709.8 740.5,709.2 C732.6,708.7 723.2,706.0 716.6,702.4 C710.0,698.8 703.8,693.1 700.8,687.8 C697.9,682.5 697.1,675.8 698.8,670.7 C700.6,665.6 705.5,660.3 711.3,657.2 C717.2,654.1 730.1,653.0 733.9,652.1" stroke="#7a3a1c" stroke-width="16.2"/>
<path d="M763.9,705.8 C760.0,706.4 748.4,709.8 740.5,709.2 C732.6,708.7 723.2,706.0 716.6,702.4 C710.0,698.8 703.8,693.1 700.8,687.8 C697.9,682.5 697.1,675.8 698.8,670.7 C700.6,665.6 705.5,660.3 711.3,657.2 C717.2,654.1 730.1,653.0 733.9,652.1" stroke="#e2924c" stroke-width="14.0"/>
<path d="M763.9,705.8 C760.0,706.4 748.4,709.8 740.5,709.2 C732.6,708.7 723.2,706.0 716.6,702.4 C710.0,698.8 703.8,693.1 700.8,687.8 C697.9,682.5 697.1,675.8 698.8,670.7 C700.6,665.6 705.5,660.3 711.3,657.2 C717.2,654.1 730.1,653.0 733.9,652.1" stroke="#efb478" stroke-width="11.2"/>
<path d="M763.9,705.8 C760.0,706.4 748.4,709.8 740.5,709.2 C732.6,708.7 723.2,706.0 716.6,702.4 C710.0,698.8 703.8,693.1 700.8,687.8 C697.9,682.5 697.1,675.8 698.8,670.7 C700.6,665.6 705.5,660.3 711.3,657.2 C717.2,654.1 730.1,653.0 733.9,652.1" stroke="#f8d8ae" stroke-width="8.1"/>
<path d="M763.9,705.8 C760.0,706.4 748.4,709.8 740.5,709.2 C732.6,708.7 723.2,706.0 716.6,702.4 C710.0,698.8 703.8,693.1 700.8,687.8 C697.9,682.5 697.1,675.8 698.8,670.7 C700.6,665.6 705.5,660.3 711.3,657.2 C717.2,654.1 730.1,653.0 733.9,652.1" stroke="#fdecd6" stroke-width="4.2"/>
<path d="M791.2,669.5 C793.3,668.3 798.7,662.2 803.8,661.9 C808.9,661.5 816.2,663.7 822.0,667.4 C827.8,671.0 834.4,677.6 838.6,683.8 C842.7,690.0 846.1,698.3 846.9,704.7 C847.8,711.0 846.5,717.7 843.7,721.6 C840.9,725.5 832.5,726.9 830.2,728.0" stroke="#7a3a1c" stroke-width="15.6"/>
<path d="M791.2,669.5 C793.3,668.3 798.7,662.2 803.8,661.9 C808.9,661.5 816.2,663.7 822.0,667.4 C827.8,671.0 834.4,677.6 838.6,683.8 C842.7,690.0 846.1,698.3 846.9,704.7 C847.8,711.0 846.5,717.7 843.7,721.6 C840.9,725.5 832.5,726.9 830.2,728.0" stroke="#e2924c" stroke-width="13.4"/>
<path d="M791.2,669.5 C793.3,668.3 798.7,662.2 803.8,661.9 C808.9,661.5 816.2,663.7 822.0,667.4 C827.8,671.0 834.4,677.6 838.6,683.8 C842.7,690.0 846.1,698.3 846.9,704.7 C847.8,711.0 846.5,717.7 843.7,721.6 C840.9,725.5 832.5,726.9 830.2,728.0" stroke="#efb478" stroke-width="10.7"/>
<path d="M791.2,669.5 C793.3,668.3 798.7,662.2 803.8,661.9 C808.9,661.5 816.2,663.7 822.0,667.4 C827.8,671.0 834.4,677.6 838.6,683.8 C842.7,690.0 846.1,698.3 846.9,704.7 C847.8,711.0 846.5,717.7 843.7,721.6 C840.9,725.5 832.5,726.9 830.2,728.0" stroke="#f8d8ae" stroke-width="7.8"/>
<path d="M791.2,669.5 C793.3,668.3 798.7,662.2 803.8,661.9 C808.9,661.5 816.2,663.7 822.0,667.4 C827.8,671.0 834.4,677.6 838.6,683.8 C842.7,690.0 846.1,698.3 846.9,704.7 C847.8,711.0 846.5,717.7 843.7,721.6 C840.9,725.5 832.5,726.9 830.2,728.0" stroke="#fdecd6" stroke-width="4.0"/>
<path d="M831.0,641.4 C832.2,638.2 834.2,627.3 838.2,622.1 C842.1,616.9 848.6,612.2 854.8,610.1 C861.0,608.0 869.0,607.7 875.4,609.4 C881.7,611.0 888.6,615.2 893.1,620.1 C897.6,625.0 901.1,632.3 902.2,638.9 C903.3,645.4 900.1,656.0 899.7,659.4" stroke="#7a3a1c" stroke-width="15.5"/>
<path d="M831.0,641.4 C832.2,638.2 834.2,627.3 838.2,622.1 C842.1,616.9 848.6,612.2 854.8,610.1 C861.0,608.0 869.0,607.7 875.4,609.4 C881.7,611.0 888.6,615.2 893.1,620.1 C897.6,625.0 901.1,632.3 902.2,638.9 C903.3,645.4 900.1,656.0 899.7,659.4" stroke="#e2924c" stroke-width="13.3"/>
<path d="M831.0,641.4 C832.2,638.2 834.2,627.3 838.2,622.1 C842.1,616.9 848.6,612.2 854.8,610.1 C861.0,608.0 869.0,607.7 875.4,609.4 C881.7,611.0 888.6,615.2 893.1,620.1 C897.6,625.0 901.1,632.3 902.2,638.9 C903.3,645.4 900.1,656.0 899.7,659.4" stroke="#efb478" stroke-width="10.6"/>
<path d="M831.0,641.4 C832.2,638.2 834.2,627.3 838.2,622.1 C842.1,616.9 848.6,612.2 854.8,610.1 C861.0,608.0 869.0,607.7 875.4,609.4 C881.7,611.0 888.6,615.2 893.1,620.1 C897.6,625.0 901.1,632.3 902.2,638.9 C903.3,645.4 900.1,656.0 899.7,659.4" stroke="#f8d8ae" stroke-width="7.7"/>
<path d="M831.0,641.4 C832.2,638.2 834.2,627.3 838.2,622.1 C842.1,616.9 848.6,612.2 854.8,610.1 C861.0,608.0 869.0,607.7 875.4,609.4 C881.7,611.0 888.6,615.2 893.1,620.1 C897.6,625.0 901.1,632.3 902.2,638.9 C903.3,645.4 900.1,656.0 899.7,659.4" stroke="#fdecd6" stroke-width="4.0"/>
<path d="M624.3,652.2 C621.1,651.1 610.0,649.1 605.0,645.7 C599.9,642.4 595.6,637.0 594.0,632.1 C592.4,627.2 593.0,620.9 595.4,616.3 C597.9,611.6 603.2,606.8 608.8,604.1 C614.4,601.3 622.4,599.7 629.1,600.0 C635.8,600.2 645.7,604.5 649.0,605.5" stroke="#7a3a1c" stroke-width="15.5"/>
<path d="M624.3,652.2 C621.1,651.1 610.0,649.1 605.0,645.7 C599.9,642.4 595.6,637.0 594.0,632.1 C592.4,627.2 593.0,620.9 595.4,616.3 C597.9,611.6 603.2,606.8 608.8,604.1 C614.4,601.3 622.4,599.7 629.1,600.0 C635.8,600.2 645.7,604.5 649.0,605.5" stroke="#e2924c" stroke-width="13.3"/>
<path d="M624.3,652.2 C621.1,651.1 610.0,649.1 605.0,645.7 C599.9,642.4 595.6,637.0 594.0,632.1 C592.4,627.2 593.0,620.9 595.4,616.3 C597.9,611.6 603.2,606.8 608.8,604.1 C614.4,601.3 622.4,599.7 629.1,600.0 C635.8,600.2 645.7,604.5 649.0,605.5" stroke="#efb478" stroke-width="10.6"/>
<path d="M624.3,652.2 C621.1,651.1 610.0,649.1 605.0,645.7 C599.9,642.4 595.6,637.0 594.0,632.1 C592.4,627.2 593.0,620.9 595.4,616.3 C597.9,611.6 603.2,606.8 608.8,604.1 C614.4,601.3 622.4,599.7 629.1,600.0 C635.8,600.2 645.7,604.5 649.0,605.5" stroke="#f8d8ae" stroke-width="7.7"/>
<path d="M624.3,652.2 C621.1,651.1 610.0,649.1 605.0,645.7 C599.9,642.4 595.6,637.0 594.0,632.1 C592.4,627.2 593.0,620.9 595.4,616.3 C597.9,611.6 603.2,606.8 608.8,604.1 C614.4,601.3 622.4,599.7 629.1,600.0 C635.8,600.2 645.7,604.5 649.0,605.5" stroke="#fdecd6" stroke-width="4.0"/>
<path d="M680.5,686.3 C675.2,685.2 656.5,685.4 648.6,679.5 C640.7,673.6 634.2,661.7 633.2,651.0 C632.1,640.3 635.8,625.4 642.1,615.4 C648.4,605.3 660.4,595.0 670.9,590.7 C681.3,586.4 695.5,586.0 704.8,589.6 C714.1,593.3 723.1,608.7 726.7,612.6" stroke="#7a3a1c" stroke-width="15.4"/>
<path d="M680.5,686.3 C675.2,685.2 656.5,685.4 648.6,679.5 C640.7,673.6 634.2,661.7 633.2,651.0 C632.1,640.3 635.8,625.4 642.1,615.4 C648.4,605.3 660.4,595.0 670.9,590.7 C681.3,586.4 695.5,586.0 704.8,589.6 C714.1,593.3 723.1,608.7 726.7,612.6" stroke="#e2924c" stroke-width="13.2"/>
<path d="M680.5,686.3 C675.2,685.2 656.5,685.4 648.6,679.5 C640.7,673.6 634.2,661.7 633.2,651.0 C632.1,640.3 635.8,625.4 642.1,615.4 C648.4,605.3 660.4,595.0 670.9,590.7 C681.3,586.4 695.5,586.0 704.8,589.6 C714.1,593.3 723.1,608.7 726.7,612.6" stroke="#efb478" stroke-width="10.5"/>
<path d="M680.5,686.3 C675.2,685.2 656.5,685.4 648.6,679.5 C640.7,673.6 634.2,661.7 633.2,651.0 C632.1,640.3 635.8,625.4 642.1,615.4 C648.4,605.3 660.4,595.0 670.9,590.7 C681.3,586.4 695.5,586.0 704.8,589.6 C714.1,593.3 723.1,608.7 726.7,612.6" stroke="#f8d8ae" stroke-width="7.6"/>
<path d="M680.5,686.3 C675.2,685.2 656.5,685.4 648.6,679.5 C640.7,673.6 634.2,661.7 633.2,651.0 C632.1,640.3 635.8,625.4 642.1,615.4 C648.4,605.3 660.4,595.0 670.9,590.7 C681.3,586.4 695.5,586.0 704.8,589.6 C714.1,593.3 723.1,608.7 726.7,612.6" stroke="#fdecd6" stroke-width="3.9"/>
<path d="M904.4,448.1 C907.8,454.0 925.1,472.0 925.1,483.5 C925.2,495.0 915.6,510.6 904.6,517.1 C893.6,523.6 872.4,526.1 858.9,522.5 C845.5,518.9 829.3,506.4 824.1,495.5 C818.8,484.6 820.4,466.9 827.5,457.3 C834.5,447.7 859.9,441.2 866.4,437.9" stroke="#7a3a1c" stroke-width="16.0"/>
<path d="M904.4,448.1 C907.8,454.0 925.1,472.0 925.1,483.5 C925.2,495.0 915.6,510.6 904.6,517.1 C893.6,523.6 872.4,526.1 858.9,522.5 C845.5,518.9 829.3,506.4 824.1,495.5 C818.8,484.6 820.4,466.9 827.5,457.3 C834.5,447.7 859.9,441.2 866.4,437.9" stroke="#e2924c" stroke-width="13.8"/>
<path d="M904.4,448.1 C907.8,454.0 925.1,472.0 925.1,483.5 C925.2,495.0 915.6,510.6 904.6,517.1 C893.6,523.6 872.4,526.1 858.9,522.5 C845.5,518.9 829.3,506.4 824.1,495.5 C818.8,484.6 820.4,466.9 827.5,457.3 C834.5,447.7 859.9,441.2 866.4,437.9" stroke="#efb478" stroke-width="11.0"/>
<path d="M904.4,448.1 C907.8,454.0 925.1,472.0 925.1,483.5 C925.2,495.0 915.6,510.6 904.6,517.1 C893.6,523.6 872.4,526.1 858.9,522.5 C845.5,518.9 829.3,506.4 824.1,495.5 C818.8,484.6 820.4,466.9 827.5,457.3 C834.5,447.7 859.9,441.2 866.4,437.9" stroke="#f8d8ae" stroke-width="8.0"/>
<path d="M904.4,448.1 C907.8,454.0 925.1,472.0 925.1,483.5 C925.2,495.0 915.6,510.6 904.6,517.1 C893.6,523.6 872.4,526.1 858.9,522.5 C845.5,518.9 829.3,506.4 824.1,495.5 C818.8,484.6 820.4,466.9 827.5,457.3 C834.5,447.7 859.9,441.2 866.4,437.9" stroke="#fdecd6" stroke-width="4.1"/>
<path d="M773.5,770.0 C770.5,772.5 761.9,784.2 755.6,785.4 C749.2,786.6 739.9,782.8 735.2,777.1 C730.5,771.3 726.9,759.5 727.4,751.0 C727.8,742.6 732.6,731.4 737.8,726.4 C743.1,721.5 752.7,719.2 758.9,721.4 C765.1,723.6 772.4,736.6 775.1,739.6" stroke="#7a3a1c" stroke-width="16.4"/>
<path d="M773.5,770.0 C770.5,772.5 761.9,784.2 755.6,785.4 C749.2,786.6 739.9,782.8 735.2,777.1 C730.5,771.3 726.9,759.5 727.4,751.0 C727.8,742.6 732.6,731.4 737.8,726.4 C743.1,721.5 752.7,719.2 758.9,721.4 C765.1,723.6 772.4,736.6 775.1,739.6" stroke="#e2924c" stroke-width="14.2"/>
<path d="M773.5,770.0 C770.5,772.5 761.9,784.2 755.6,785.4 C749.2,786.6 739.9,782.8 735.2,777.1 C730.5,771.3 726.9,759.5 727.4,751.0 C727.8,742.6 732.6,731.4 737.8,726.4 C743.1,721.5 752.7,719.2 758.9,721.4 C765.1,723.6 772.4,736.6 775.1,739.6" stroke="#efb478" stroke-width="11.3"/>
<path d="M773.5,770.0 C770.5,772.5 761.9,784.2 755.6,785.4 C749.2,786.6 739.9,782.8 735.2,777.1 C730.5,771.3 726.9,759.5 727.4,751.0 C727.8,742.6 732.6,731.4 737.8,726.4 C743.1,721.5 752.7,719.2 758.9,721.4 C765.1,723.6 772.4,736.6 775.1,739.6" stroke="#f8d8ae" stroke-width="8.2"/>
<path d="M773.5,770.0 C770.5,772.5 761.9,784.2 755.6,785.4 C749.2,786.6 739.9,782.8 735.2,777.1 C730.5,771.3 726.9,759.5 727.4,751.0 C727.8,742.6 732.6,731.4 737.8,726.4 C743.1,721.5 752.7,719.2 758.9,721.4 C765.1,723.6 772.4,736.6 775.1,739.6" stroke="#fdecd6" stroke-width="4.2"/>
<path d="M712.5,825.6 C707.9,826.8 694.6,833.5 685.2,832.9 C675.8,832.4 664.2,828.1 656.1,822.1 C648.0,816.2 640.1,806.4 636.3,797.4 C632.6,788.4 631.5,776.9 633.6,768.3 C635.7,759.7 641.8,750.9 648.9,746.0 C656.0,741.2 671.8,740.4 676.4,739.3" stroke="#7a3a1c" stroke-width="15.4"/>
<path d="M712.5,825.6 C707.9,826.8 694.6,833.5 685.2,832.9 C675.8,832.4 664.2,828.1 656.1,822.1 C648.0,816.2 640.1,806.4 636.3,797.4 C632.6,788.4 631.5,776.9 633.6,768.3 C635.7,759.7 641.8,750.9 648.9,746.0 C656.0,741.2 671.8,740.4 676.4,739.3" stroke="#e2924c" stroke-width="13.2"/>
<path d="M712.5,825.6 C707.9,826.8 694.6,833.5 685.2,832.9 C675.8,832.4 664.2,828.1 656.1,822.1 C648.0,816.2 640.1,806.4 636.3,797.4 C632.6,788.4 631.5,776.9 633.6,768.3 C635.7,759.7 641.8,750.9 648.9,746.0 C656.0,741.2 671.8,740.4 676.4,739.3" stroke="#efb478" stroke-width="10.6"/>
<path d="M712.5,825.6 C707.9,826.8 694.6,833.5 685.2,832.9 C675.8,832.4 664.2,828.1 656.1,822.1 C648.0,816.2 640.1,806.4 636.3,797.4 C632.6,788.4 631.5,776.9 633.6,768.3 C635.7,759.7 641.8,750.9 648.9,746.0 C656.0,741.2 671.8,740.4 676.4,739.3" stroke="#f8d8ae" stroke-width="7.7"/>
<path d="M712.5,825.6 C707.9,826.8 694.6,833.5 685.2,832.9 C675.8,832.4 664.2,828.1 656.1,822.1 C648.0,816.2 640.1,806.4 636.3,797.4 C632.6,788.4 631.5,776.9 633.6,768.3 C635.7,759.7 641.8,750.9 648.9,746.0 C656.0,741.2 671.8,740.4 676.4,739.3" stroke="#fdecd6" stroke-width="4.0"/>
<path d="M668.9,726.7 C663.5,723.7 643.5,718.7 636.6,708.9 C629.7,699.2 625.4,680.6 627.3,668.1 C629.2,655.7 638.5,640.2 647.8,634.1 C657.2,628.0 673.2,626.9 683.2,631.7 C693.1,636.5 704.2,650.6 707.5,662.7 C710.8,674.8 703.7,697.5 703.0,704.4" stroke="#7a3a1c" stroke-width="16.2"/>
<path d="M668.9,726.7 C663.5,723.7 643.5,718.7 636.6,708.9 C629.7,699.2 625.4,680.6 627.3,668.1 C629.2,655.7 638.5,640.2 647.8,634.1 C657.2,628.0 673.2,626.9 683.2,631.7 C693.1,636.5 704.2,650.6 707.5,662.7 C710.8,674.8 703.7,697.5 703.0,704.4" stroke="#e2924c" stroke-width="14.0"/>
<path d="M668.9,726.7 C663.5,723.7 643.5,718.7 636.6,708.9 C629.7,699.2 625.4,680.6 627.3,668.1 C629.2,655.7 638.5,640.2 647.8,634.1 C657.2,628.0 673.2,626.9 683.2,631.7 C693.1,636.5 704.2,650.6 707.5,662.7 C710.8,674.8 703.7,697.5 703.0,704.4" stroke="#efb478" stroke-width="11.2"/>
<path d="M668.9,726.7 C663.5,723.7 643.5,718.7 636.6,708.9 C629.7,699.2 625.4,680.6 627.3,668.1 C629.2,655.7 638.5,640.2 647.8,634.1 C657.2,628.0 673.2,626.9 683.2,631.7 C693.1,636.5 704.2,650.6 707.5,662.7 C710.8,674.8 703.7,697.5 703.0,704.4" stroke="#f8d8ae" stroke-width="8.1"/>
<path d="M668.9,726.7 C663.5,723.7 643.5,718.7 636.6,708.9 C629.7,699.2 625.4,680.6 627.3,668.1 C629.2,655.7 638.5,640.2 647.8,634.1 C657.2,628.0 673.2,626.9 683.2,631.7 C693.1,636.5 704.2,650.6 707.5,662.7 C710.8,674.8 703.7,697.5 703.0,704.4" stroke="#fdecd6" stroke-width="4.2"/>
<path d="M622.1,620.7 C626.0,617.8 637.8,606.7 645.3,603.0 C652.8,599.3 661.4,597.5 667.1,598.4 C672.8,599.3 677.8,603.4 679.6,608.6 C681.5,613.9 681.0,622.3 678.4,629.9 C675.7,637.6 670.0,647.3 663.8,654.7 C657.6,662.0 644.9,670.7 641.2,673.9" stroke="#7a3a1c" stroke-width="15.2"/>
<path d="M622.1,620.7 C626.0,617.8 637.8,606.7 645.3,603.0 C652.8,599.3 661.4,597.5 667.1,598.4 C672.8,599.3 677.8,603.4 679.6,608.6 C681.5,613.9 681.0,622.3 678.4,629.9 C675.7,637.6 670.0,647.3 663.8,654.7 C657.6,662.0 644.9,670.7 641.2,673.9" stroke="#e2924c" stroke-width="13.0"/>
<path d="M622.1,620.7 C626.0,617.8 637.8,606.7 645.3,603.0 C652.8,599.3 661.4,597.5 667.1,598.4 C672.8,599.3 677.8,603.4 679.6,608.6 C681.5,613.9 681.0,622.3 678.4,629.9 C675.7,637.6 670.0,647.3 663.8,654.7 C657.6,662.0 644.9,670.7 641.2,673.9" stroke="#efb478" stroke-width="10.4"/>
<path d="M622.1,620.7 C626.0,617.8 637.8,606.7 645.3,603.0 C652.8,599.3 661.4,597.5 667.1,598.4 C672.8,599.3 677.8,603.4 679.6,608.6 C681.5,613.9 681.0,622.3 678.4,629.9 C675.7,637.6 670.0,647.3 663.8,654.7 C657.6,662.0 644.9,670.7 641.2,673.9" stroke="#f8d8ae" stroke-width="7.6"/>
<path d="M622.1,620.7 C626.0,617.8 637.8,606.7 645.3,603.0 C652.8,599.3 661.4,597.5 667.1,598.4 C672.8,599.3 677.8,603.4 679.6,608.6 C681.5,613.9 681.0,622.3 678.4,629.9 C675.7,637.6 670.0,647.3 663.8,654.7 C657.6,662.0 644.9,670.7 641.2,673.9" stroke="#fdecd6" stroke-width="3.9"/>
<path d="M714.0,465.5 C720.1,463.1 738.3,450.9 750.4,451.0 C762.5,451.1 777.9,457.4 786.6,465.9 C795.3,474.5 802.1,489.8 802.6,502.1 C803.0,514.3 797.4,530.2 789.4,539.4 C781.4,548.5 766.5,556.1 754.5,557.1 C742.4,558.1 723.3,547.4 717.1,545.5" stroke="#7a3a1c" stroke-width="16.1"/>
<path d="M714.0,465.5 C720.1,463.1 738.3,450.9 750.4,451.0 C762.5,451.1 777.9,457.4 786.6,465.9 C795.3,474.5 802.1,489.8 802.6,502.1 C803.0,514.3 797.4,530.2 789.4,539.4 C781.4,548.5 766.5,556.1 754.5,557.1 C742.4,558.1 723.3,547.4 717.1,545.5" stroke="#e2924c" stroke-width="13.9"/>
<path d="M714.0,465.5 C720.1,463.1 738.3,450.9 750.4,451.0 C762.5,451.1 777.9,457.4 786.6,465.9 C795.3,474.5 802.1,489.8 802.6,502.1 C803.0,514.3 797.4,530.2 789.4,539.4 C781.4,548.5 766.5,556.1 754.5,557.1 C742.4,558.1 723.3,547.4 717.1,545.5" stroke="#efb478" stroke-width="11.1"/>
<path d="M714.0,465.5 C720.1,463.1 738.3,450.9 750.4,451.0 C762.5,451.1 777.9,457.4 786.6,465.9 C795.3,474.5 802.1,489.8 802.6,502.1 C803.0,514.3 797.4,530.2 789.4,539.4 C781.4,548.5 766.5,556.1 754.5,557.1 C742.4,558.1 723.3,547.4 717.1,545.5" stroke="#f8d8ae" stroke-width="8.0"/>
<path d="M714.0,465.5 C720.1,463.1 738.3,450.9 750.4,451.0 C762.5,451.1 777.9,457.4 786.6,465.9 C795.3,474.5 802.1,489.8 802.6,502.1 C803.0,514.3 797.4,530.2 789.4,539.4 C781.4,548.5 766.5,556.1 754.5,557.1 C742.4,558.1 723.3,547.4 717.1,545.5" stroke="#fdecd6" stroke-width="4.2"/>
<path d="M755.0,696.4 C750.2,692.2 730.8,679.1 726.0,670.9 C721.2,662.6 721.4,651.7 726.4,646.8 C731.4,641.8 744.7,639.2 756.0,641.0 C767.3,642.8 784.5,650.2 794.1,657.6 C803.8,664.9 812.8,677.2 814.1,684.9 C815.3,692.7 803.9,700.7 801.9,703.9" stroke="#7a3a1c" stroke-width="15.3"/>
<path d="M755.0,696.4 C750.2,692.2 730.8,679.1 726.0,670.9 C721.2,662.6 721.4,651.7 726.4,646.8 C731.4,641.8 744.7,639.2 756.0,641.0 C767.3,642.8 784.5,650.2 794.1,657.6 C803.8,664.9 812.8,677.2 814.1,684.9 C815.3,692.7 803.9,700.7 801.9,703.9" stroke="#e2924c" stroke-width="13.1"/>
<path d="M755.0,696.4 C750.2,692.2 730.8,679.1 726.0,670.9 C721.2,662.6 721.4,651.7 726.4,646.8 C731.4,641.8 744.7,639.2 756.0,641.0 C767.3,642.8 784.5,650.2 794.1,657.6 C803.8,664.9 812.8,677.2 814.1,684.9 C815.3,692.7 803.9,700.7 801.9,703.9" stroke="#efb478" stroke-width="10.5"/>
<path d="M755.0,696.4 C750.2,692.2 730.8,679.1 726.0,670.9 C721.2,662.6 721.4,651.7 726.4,646.8 C731.4,641.8 744.7,639.2 756.0,641.0 C767.3,642.8 784.5,650.2 794.1,657.6 C803.8,664.9 812.8,677.2 814.1,684.9 C815.3,692.7 803.9,700.7 801.9,703.9" stroke="#f8d8ae" stroke-width="7.6"/>
<path d="M755.0,696.4 C750.2,692.2 730.8,679.1 726.0,670.9 C721.2,662.6 721.4,651.7 726.4,646.8 C731.4,641.8 744.7,639.2 756.0,641.0 C767.3,642.8 784.5,650.2 794.1,657.6 C803.8,664.9 812.8,677.2 814.1,684.9 C815.3,692.7 803.9,700.7 801.9,703.9" stroke="#fdecd6" stroke-width="3.9"/>
<path d="M717.9,653.8 C721.9,655.0 735.5,654.6 741.6,660.9 C747.8,667.2 753.4,680.2 754.9,691.5 C756.4,702.9 754.5,718.7 750.5,728.9 C746.4,739.0 738.1,749.1 730.7,752.5 C723.4,755.9 713.1,754.6 706.5,749.4 C699.9,744.2 693.7,726.0 691.1,721.4" stroke="#7a3a1c" stroke-width="14.9"/>
<path d="M717.9,653.8 C721.9,655.0 735.5,654.6 741.6,660.9 C747.8,667.2 753.4,680.2 754.9,691.5 C756.4,702.9 754.5,718.7 750.5,728.9 C746.4,739.0 738.1,749.1 730.7,752.5 C723.4,755.9 713.1,754.6 706.5,749.4 C699.9,744.2 693.7,726.0 691.1,721.4" stroke="#e2924c" stroke-width="12.7"/>
<path d="M717.9,653.8 C721.9,655.0 735.5,654.6 741.6,660.9 C747.8,667.2 753.4,680.2 754.9,691.5 C756.4,702.9 754.5,718.7 750.5,728.9 C746.4,739.0 738.1,749.1 730.7,752.5 C723.4,755.9 713.1,754.6 706.5,749.4 C699.9,744.2 693.7,726.0 691.1,721.4" stroke="#efb478" stroke-width="10.2"/>
<path d="M717.9,653.8 C721.9,655.0 735.5,654.6 741.6,660.9 C747.8,667.2 753.4,680.2 754.9,691.5 C756.4,702.9 754.5,718.7 750.5,728.9 C746.4,739.0 738.1,749.1 730.7,752.5 C723.4,755.9 713.1,754.6 706.5,749.4 C699.9,744.2 693.7,726.0 691.1,721.4" stroke="#f8d8ae" stroke-width="7.4"/>
<path d="M717.9,653.8 C721.9,655.0 735.5,654.6 741.6,660.9 C747.8,667.2 753.4,680.2 754.9,691.5 C756.4,702.9 754.5,718.7 750.5,728.9 C746.4,739.0 738.1,749.1 730.7,752.5 C723.4,755.9 713.1,754.6 706.5,749.4 C699.9,744.2 693.7,726.0 691.1,721.4" stroke="#fdecd6" stroke-width="3.8"/>
<path d="M769.0,513.5 C771.1,505.3 771.5,475.8 781.6,463.9 C791.7,452.0 813.6,442.2 829.5,442.4 C845.4,442.6 867.1,452.9 876.9,465.0 C886.8,477.1 892.2,499.9 888.7,514.9 C885.2,529.9 870.3,548.2 856.0,555.0 C841.8,561.7 812.0,555.3 803.2,555.4" stroke="#7a3a1c" stroke-width="16.6"/>
<path d="M769.0,513.5 C771.1,505.3 771.5,475.8 781.6,463.9 C791.7,452.0 813.6,442.2 829.5,442.4 C845.4,442.6 867.1,452.9 876.9,465.0 C886.8,477.1 892.2,499.9 888.7,514.9 C885.2,529.9 870.3,548.2 856.0,555.0 C841.8,561.7 812.0,555.3 803.2,555.4" stroke="#e2924c" stroke-width="14.4"/>
<path d="M769.0,513.5 C771.1,505.3 771.5,475.8 781.6,463.9 C791.7,452.0 813.6,442.2 829.5,442.4 C845.4,442.6 867.1,452.9 876.9,465.0 C886.8,477.1 892.2,499.9 888.7,514.9 C885.2,529.9 870.3,548.2 856.0,555.0 C841.8,561.7 812.0,555.3 803.2,555.4" stroke="#efb478" stroke-width="11.5"/>
<path d="M769.0,513.5 C771.1,505.3 771.5,475.8 781.6,463.9 C791.7,452.0 813.6,442.2 829.5,442.4 C845.4,442.6 867.1,452.9 876.9,465.0 C886.8,477.1 892.2,499.9 888.7,514.9 C885.2,529.9 870.3,548.2 856.0,555.0 C841.8,561.7 812.0,555.3 803.2,555.4" stroke="#f8d8ae" stroke-width="8.4"/>
<path d="M769.0,513.5 C771.1,505.3 771.5,475.8 781.6,463.9 C791.7,452.0 813.6,442.2 829.5,442.4 C845.4,442.6 867.1,452.9 876.9,465.0 C886.8,477.1 892.2,499.9 888.7,514.9 C885.2,529.9 870.3,548.2 856.0,555.0 C841.8,561.7 812.0,555.3 803.2,555.4" stroke="#fdecd6" stroke-width="4.3"/>
<path d="M601.9,498.1 C605.5,497.9 616.8,495.0 623.5,496.7 C630.2,498.4 637.6,503.0 642.1,508.3 C646.6,513.6 649.9,521.7 650.4,528.5 C650.9,535.3 648.8,543.6 645.2,549.3 C641.5,555.0 634.9,560.3 628.5,562.6 C622.1,565.0 610.4,563.2 606.8,563.3" stroke="#7a3a1c" stroke-width="15.7"/>
<path d="M601.9,498.1 C605.5,497.9 616.8,495.0 623.5,496.7 C630.2,498.4 637.6,503.0 642.1,508.3 C646.6,513.6 649.9,521.7 650.4,528.5 C650.9,535.3 648.8,543.6 645.2,549.3 C641.5,555.0 634.9,560.3 628.5,562.6 C622.1,565.0 610.4,563.2 606.8,563.3" stroke="#e2924c" stroke-width="13.5"/>
<path d="M601.9,498.1 C605.5,497.9 616.8,495.0 623.5,496.7 C630.2,498.4 637.6,503.0 642.1,508.3 C646.6,513.6 649.9,521.7 650.4,528.5 C650.9,535.3 648.8,543.6 645.2,549.3 C641.5,555.0 634.9,560.3 628.5,562.6 C622.1,565.0 610.4,563.2 606.8,563.3" stroke="#efb478" stroke-width="10.8"/>
<path d="M601.9,498.1 C605.5,497.9 616.8,495.0 623.5,496.7 C630.2,498.4 637.6,503.0 642.1,508.3 C646.6,513.6 649.9,521.7 650.4,528.5 C650.9,535.3 648.8,543.6 645.2,549.3 C641.5,555.0 634.9,560.3 628.5,562.6 C622.1,565.0 610.4,563.2 606.8,563.3" stroke="#f8d8ae" stroke-width="7.9"/>
<path d="M601.9,498.1 C605.5,497.9 616.8,495.0 623.5,496.7 C630.2,498.4 637.6,503.0 642.1,508.3 C646.6,513.6 649.9,521.7 650.4,528.5 C650.9,535.3 648.8,543.6 645.2,549.3 C641.5,555.0 634.9,560.3 628.5,562.6 C622.1,565.0 610.4,563.2 606.8,563.3" stroke="#fdecd6" stroke-width="4.1"/>
<path d="M886.5,506.6 C880.7,508.5 862.9,517.5 851.7,518.3 C840.5,519.0 827.4,516.1 819.3,511.0 C811.3,506.0 804.8,496.6 803.4,488.0 C801.9,479.3 804.9,467.6 810.7,459.0 C816.4,450.5 827.5,441.4 838.1,436.7 C848.6,432.0 867.8,431.7 873.8,430.7" stroke="#7a3a1c" stroke-width="16.5"/>
<path d="M886.5,506.6 C880.7,508.5 862.9,517.5 851.7,518.3 C840.5,519.0 827.4,516.1 819.3,511.0 C811.3,506.0 804.8,496.6 803.4,488.0 C801.9,479.3 804.9,467.6 810.7,459.0 C816.4,450.5 827.5,441.4 838.1,436.7 C848.6,432.0 867.8,431.7 873.8,430.7" stroke="#e2924c" stroke-width="14.3"/>
<path d="M886.5,506.6 C880.7,508.5 862.9,517.5 851.7,518.3 C840.5,519.0 827.4,516.1 819.3,511.0 C811.3,506.0 804.8,496.6 803.4,488.0 C801.9,479.3 804.9,467.6 810.7,459.0 C816.4,450.5 827.5,441.4 838.1,436.7 C848.6,432.0 867.8,431.7 873.8,430.7" stroke="#efb478" stroke-width="11.4"/>
<path d="M886.5,506.6 C880.7,508.5 862.9,517.5 851.7,518.3 C840.5,519.0 827.4,516.1 819.3,511.0 C811.3,506.0 804.8,496.6 803.4,488.0 C801.9,479.3 804.9,467.6 810.7,459.0 C816.4,450.5 827.5,441.4 838.1,436.7 C848.6,432.0 867.8,431.7 873.8,430.7" stroke="#f8d8ae" stroke-width="8.3"/>
<path d="M886.5,506.6 C880.7,508.5 862.9,517.5 851.7,518.3 C840.5,519.0 827.4,516.1 819.3,511.0 C811.3,506.0 804.8,496.6 803.4,488.0 C801.9,479.3 804.9,467.6 810.7,459.0 C816.4,450.5 827.5,441.4 838.1,436.7 C848.6,432.0 867.8,431.7 873.8,430.7" stroke="#fdecd6" stroke-width="4.3"/>
<path d="M369.9,632.5 C368.4,628.8 360.6,617.2 360.8,610.8 C360.9,604.4 365.1,597.6 370.9,594.2 C376.8,590.9 386.9,589.4 395.7,590.6 C404.4,591.8 415.7,596.3 423.2,601.6 C430.7,606.8 437.9,615.2 440.7,622.0 C443.4,628.8 439.9,638.9 439.7,642.2" stroke="#7a3a1c" stroke-width="16.4"/>
<path d="M369.9,632.5 C368.4,628.8 360.6,617.2 360.8,610.8 C360.9,604.4 365.1,597.6 370.9,594.2 C376.8,590.9 386.9,589.4 395.7,590.6 C404.4,591.8 415.7,596.3 423.2,601.6 C430.7,606.8 437.9,615.2 440.7,622.0 C443.4,628.8 439.9,638.9 439.7,642.2" stroke="#e2924c" stroke-width="14.2"/>
<path d="M369.9,632.5 C368.4,628.8 360.6,617.2 360.8,610.8 C360.9,604.4 365.1,597.6 370.9,594.2 C376.8,590.9 386.9,589.4 395.7,590.6 C404.4,591.8 415.7,596.3 423.2,601.6 C430.7,606.8 437.9,615.2 440.7,622.0 C443.4,628.8 439.9,638.9 439.7,642.2" stroke="#efb478" stroke-width="11.3"/>
<path d="M369.9,632.5 C368.4,628.8 360.6,617.2 360.8,610.8 C360.9,604.4 365.1,597.6 370.9,594.2 C376.8,590.9 386.9,589.4 395.7,590.6 C404.4,591.8 415.7,596.3 423.2,601.6 C430.7,606.8 437.9,615.2 440.7,622.0 C443.4,628.8 439.9,638.9 439.7,642.2" stroke="#f8d8ae" stroke-width="8.2"/>
<path d="M369.9,632.5 C368.4,628.8 360.6,617.2 360.8,610.8 C360.9,604.4 365.1,597.6 370.9,594.2 C376.8,590.9 386.9,589.4 395.7,590.6 C404.4,591.8 415.7,596.3 423.2,601.6 C430.7,606.8 437.9,615.2 440.7,622.0 C443.4,628.8 439.9,638.9 439.7,642.2" stroke="#fdecd6" stroke-width="4.3"/>
<path d="M801.8,417.7 C808.3,419.2 831.0,420.3 840.9,426.9 C850.7,433.5 859.1,446.2 860.9,457.3 C862.8,468.4 859.0,483.5 851.9,493.6 C844.8,503.7 830.8,513.7 818.3,517.7 C805.9,521.7 788.6,521.7 777.0,517.6 C765.4,513.6 753.3,497.4 748.5,493.3" stroke="#7a3a1c" stroke-width="15.5"/>
<path d="M801.8,417.7 C808.3,419.2 831.0,420.3 840.9,426.9 C850.7,433.5 859.1,446.2 860.9,457.3 C862.8,468.4 859.0,483.5 851.9,493.6 C844.8,503.7 830.8,513.7 818.3,517.7 C805.9,521.7 788.6,521.7 777.0,517.6 C765.4,513.6 753.3,497.4 748.5,493.3" stroke="#e2924c" stroke-width="13.3"/>
<path d="M801.8,417.7 C808.3,419.2 831.0,420.3 840.9,426.9 C850.7,433.5 859.1,446.2 860.9,457.3 C862.8,468.4 859.0,483.5 851.9,493.6 C844.8,503.7 830.8,513.7 818.3,517.7 C805.9,521.7 788.6,521.7 777.0,517.6 C765.4,513.6 753.3,497.4 748.5,493.3" stroke="#efb478" stroke-width="10.6"/>
<path d="M801.8,417.7 C808.3,419.2 831.0,420.3 840.9,426.9 C850.7,433.5 859.1,446.2 860.9,457.3 C862.8,468.4 859.0,483.5 851.9,493.6 C844.8,503.7 830.8,513.7 818.3,517.7 C805.9,521.7 788.6,521.7 777.0,517.6 C765.4,513.6 753.3,497.4 748.5,493.3" stroke="#f8d8ae" stroke-width="7.7"/>
<path d="M801.8,417.7 C808.3,419.2 831.0,420.3 840.9,426.9 C850.7,433.5 859.1,446.2 860.9,457.3 C862.8,468.4 859.0,483.5 851.9,493.6 C844.8,503.7 830.8,513.7 818.3,517.7 C805.9,521.7 788.6,521.7 777.0,517.6 C765.4,513.6 753.3,497.4 748.5,493.3" stroke="#fdecd6" stroke-width="4.0"/>
<path d="M897.8,696.4 C894.5,696.1 884.3,697.5 877.7,694.9 C871.1,692.4 863.4,686.9 858.3,681.0 C853.1,675.2 848.5,666.9 846.7,659.9 C844.8,653.0 845.1,644.9 847.3,639.4 C849.5,633.9 854.5,629.1 859.9,627.1 C865.3,625.2 876.4,627.6 879.7,627.7" stroke="#7a3a1c" stroke-width="16.4"/>
<path d="M897.8,696.4 C894.5,696.1 884.3,697.5 877.7,694.9 C871.1,692.4 863.4,686.9 858.3,681.0 C853.1,675.2 848.5,666.9 846.7,659.9 C844.8,653.0 845.1,644.9 847.3,639.4 C849.5,633.9 854.5,629.1 859.9,627.1 C865.3,625.2 876.4,627.6 879.7,627.7" stroke="#e2924c" stroke-width="14.2"/>
<path d="M897.8,696.4 C894.5,696.1 884.3,697.5 877.7,694.9 C871.1,692.4 863.4,686.9 858.3,681.0 C853.1,675.2 848.5,666.9 846.7,659.9 C844.8,653.0 845.1,644.9 847.3,639.4 C849.5,633.9 854.5,629.1 859.9,627.1 C865.3,625.2 876.4,627.6 879.7,627.7" stroke="#efb478" stroke-width="11.3"/>
<path d="M897.8,696.4 C894.5,696.1 884.3,697.5 877.7,694.9 C871.1,692.4 863.4,686.9 858.3,681.0 C853.1,675.2 848.5,666.9 846.7,659.9 C844.8,653.0 845.1,644.9 847.3,639.4 C849.5,633.9 854.5,629.1 859.9,627.1 C865.3,625.2 876.4,627.6 879.7,627.7" stroke="#f8d8ae" stroke-width="8.2"/>
<path d="M897.8,696.4 C894.5,696.1 884.3,697.5 877.7,694.9 C871.1,692.4 863.4,686.9 858.3,681.0 C853.1,675.2 848.5,666.9 846.7,659.9 C844.8,653.0 845.1,644.9 847.3,639.4 C849.5,633.9 854.5,629.1 859.9,627.1 C865.3,625.2 876.4,627.6 879.7,627.7" stroke="#fdecd6" stroke-width="4.3"/>
<path d="M643.9,537.7 C639.0,535.5 621.2,531.8 614.7,524.5 C608.2,517.3 603.9,504.0 604.9,494.3 C605.9,484.6 612.9,472.3 620.8,466.4 C628.7,460.4 642.5,456.9 652.2,458.4 C662.0,460.0 673.9,467.5 679.3,475.6 C684.7,483.6 683.8,501.6 684.7,506.9" stroke="#7a3a1c" stroke-width="16.5"/>
<path d="M643.9,537.7 C639.0,535.5 621.2,531.8 614.7,524.5 C608.2,517.3 603.9,504.0 604.9,494.3 C605.9,484.6 612.9,472.3 620.8,466.4 C628.7,460.4 642.5,456.9 652.2,458.4 C662.0,460.0 673.9,467.5 679.3,475.6 C684.7,483.6 683.8,501.6 684.7,506.9" stroke="#e2924c" stroke-width="14.3"/>
<path d="M643.9,537.7 C639.0,535.5 621.2,531.8 614.7,524.5 C608.2,517.3 603.9,504.0 604.9,494.3 C605.9,484.6 612.9,472.3 620.8,466.4 C628.7,460.4 642.5,456.9 652.2,458.4 C662.0,460.0 673.9,467.5 679.3,475.6 C684.7,483.6 683.8,501.6 684.7,506.9" stroke="#efb478" stroke-width="11.5"/>
<path d="M643.9,537.7 C639.0,535.5 621.2,531.8 614.7,524.5 C608.2,517.3 603.9,504.0 604.9,494.3 C605.9,484.6 612.9,472.3 620.8,466.4 C628.7,460.4 642.5,456.9 652.2,458.4 C662.0,460.0 673.9,467.5 679.3,475.6 C684.7,483.6 683.8,501.6 684.7,506.9" stroke="#f8d8ae" stroke-width="8.3"/>
<path d="M643.9,537.7 C639.0,535.5 621.2,531.8 614.7,524.5 C608.2,517.3 603.9,504.0 604.9,494.3 C605.9,484.6 612.9,472.3 620.8,466.4 C628.7,460.4 642.5,456.9 652.2,458.4 C662.0,460.0 673.9,467.5 679.3,475.6 C684.7,483.6 683.8,501.6 684.7,506.9" stroke="#fdecd6" stroke-width="4.3"/>
<path d="M878.6,602.4 C880.9,605.6 892.4,612.5 892.1,621.7 C891.8,630.9 885.0,647.1 876.9,657.6 C868.9,668.1 854.0,680.4 843.9,684.8 C833.8,689.2 821.3,688.8 816.2,684.0 C811.2,679.2 809.9,666.5 813.5,655.9 C817.0,645.2 833.5,626.2 837.5,620.2" stroke="#7a3a1c" stroke-width="16.0"/>
<path d="M878.6,602.4 C880.9,605.6 892.4,612.5 892.1,621.7 C891.8,630.9 885.0,647.1 876.9,657.6 C868.9,668.1 854.0,680.4 843.9,684.8 C833.8,689.2 821.3,688.8 816.2,684.0 C811.2,679.2 809.9,666.5 813.5,655.9 C817.0,645.2 833.5,626.2 837.5,620.2" stroke="#e2924c" stroke-width="13.8"/>
<path d="M878.6,602.4 C880.9,605.6 892.4,612.5 892.1,621.7 C891.8,630.9 885.0,647.1 876.9,657.6 C868.9,668.1 854.0,680.4 843.9,684.8 C833.8,689.2 821.3,688.8 816.2,684.0 C811.2,679.2 809.9,666.5 813.5,655.9 C817.0,645.2 833.5,626.2 837.5,620.2" stroke="#efb478" stroke-width="11.0"/>
<path d="M878.6,602.4 C880.9,605.6 892.4,612.5 892.1,621.7 C891.8,630.9 885.0,647.1 876.9,657.6 C868.9,668.1 854.0,680.4 843.9,684.8 C833.8,689.2 821.3,688.8 816.2,684.0 C811.2,679.2 809.9,666.5 813.5,655.9 C817.0,645.2 833.5,626.2 837.5,620.2" stroke="#f8d8ae" stroke-width="8.0"/>
<path d="M878.6,602.4 C880.9,605.6 892.4,612.5 892.1,621.7 C891.8,630.9 885.0,647.1 876.9,657.6 C868.9,668.1 854.0,680.4 843.9,684.8 C833.8,689.2 821.3,688.8 816.2,684.0 C811.2,679.2 809.9,666.5 813.5,655.9 C817.0,645.2 833.5,626.2 837.5,620.2" stroke="#fdecd6" stroke-width="4.1"/>
<path d="M866.8,452.2 C869.0,458.3 880.7,478.6 880.2,488.4 C879.7,498.2 872.0,508.9 863.9,511.0 C855.8,513.1 840.6,508.4 831.7,501.1 C822.8,493.7 812.8,477.6 810.5,466.9 C808.2,456.3 811.8,442.2 818.1,437.2 C824.4,432.2 843.1,436.9 848.1,436.8" stroke="#7a3a1c" stroke-width="15.2"/>
<path d="M866.8,452.2 C869.0,458.3 880.7,478.6 880.2,488.4 C879.7,498.2 872.0,508.9 863.9,511.0 C855.8,513.1 840.6,508.4 831.7,501.1 C822.8,493.7 812.8,477.6 810.5,466.9 C808.2,456.3 811.8,442.2 818.1,437.2 C824.4,432.2 843.1,436.9 848.1,436.8" stroke="#e2924c" stroke-width="13.0"/>
<path d="M866.8,452.2 C869.0,458.3 880.7,478.6 880.2,488.4 C879.7,498.2 872.0,508.9 863.9,511.0 C855.8,513.1 840.6,508.4 831.7,501.1 C822.8,493.7 812.8,477.6 810.5,466.9 C808.2,456.3 811.8,442.2 818.1,437.2 C824.4,432.2 843.1,436.9 848.1,436.8" stroke="#efb478" stroke-width="10.4"/>
<path d="M866.8,452.2 C869.0,458.3 880.7,478.6 880.2,488.4 C879.7,498.2 872.0,508.9 863.9,511.0 C855.8,513.1 840.6,508.4 831.7,501.1 C822.8,493.7 812.8,477.6 810.5,466.9 C808.2,456.3 811.8,442.2 818.1,437.2 C824.4,432.2 843.1,436.9 848.1,436.8" stroke="#f8d8ae" stroke-width="7.6"/>
<path d="M866.8,452.2 C869.0,458.3 880.7,478.6 880.2,488.4 C879.7,498.2 872.0,508.9 863.9,511.0 C855.8,513.1 840.6,508.4 831.7,501.1 C822.8,493.7 812.8,477.6 810.5,466.9 C808.2,456.3 811.8,442.2 818.1,437.2 C824.4,432.2 843.1,436.9 848.1,436.8" stroke="#fdecd6" stroke-width="3.9"/>
<path d="M722.3,579.8 C717.6,578.0 702.2,574.4 694.3,569.0 C686.4,563.6 678.6,554.9 674.9,547.4 C671.2,539.9 670.2,530.5 672.3,524.1 C674.4,517.7 680.6,511.5 687.6,508.9 C694.7,506.2 705.5,505.9 714.4,508.1 C723.4,510.4 736.9,519.9 741.4,522.2" stroke="#7a3a1c" stroke-width="16.5"/>
<path d="M722.3,579.8 C717.6,578.0 702.2,574.4 694.3,569.0 C686.4,563.6 678.6,554.9 674.9,547.4 C671.2,539.9 670.2,530.5 672.3,524.1 C674.4,517.7 680.6,511.5 687.6,508.9 C694.7,506.2 705.5,505.9 714.4,508.1 C723.4,510.4 736.9,519.9 741.4,522.2" stroke="#e2924c" stroke-width="14.3"/>
<path d="M722.3,579.8 C717.6,578.0 702.2,574.4 694.3,569.0 C686.4,563.6 678.6,554.9 674.9,547.4 C671.2,539.9 670.2,530.5 672.3,524.1 C674.4,517.7 680.6,511.5 687.6,508.9 C694.7,506.2 705.5,505.9 714.4,508.1 C723.4,510.4 736.9,519.9 741.4,522.2" stroke="#efb478" stroke-width="11.4"/>
<path d="M722.3,579.8 C717.6,578.0 702.2,574.4 694.3,569.0 C686.4,563.6 678.6,554.9 674.9,547.4 C671.2,539.9 670.2,530.5 672.3,524.1 C674.4,517.7 680.6,511.5 687.6,508.9 C694.7,506.2 705.5,505.9 714.4,508.1 C723.4,510.4 736.9,519.9 741.4,522.2" stroke="#f8d8ae" stroke-width="8.3"/>
<path d="M722.3,579.8 C717.6,578.0 702.2,574.4 694.3,569.0 C686.4,563.6 678.6,554.9 674.9,547.4 C671.2,539.9 670.2,530.5 672.3,524.1 C674.4,517.7 680.6,511.5 687.6,508.9 C694.7,506.2 705.5,505.9 714.4,508.1 C723.4,510.4 736.9,519.9 741.4,522.2" stroke="#fdecd6" stroke-width="4.3"/>
</g>
<g fill="none" stroke-linecap="round">
<path d="M745.0,470.0 C751.2,465.7 766.5,447.0 782.0,444.0 C797.5,441.0 824.8,444.3 838.0,452.0 C851.2,459.7 856.0,478.7 861.0,490.0 C866.0,501.3 869.8,511.7 868.0,520.0 C866.2,528.3 853.0,536.7 850.0,540.0" stroke="#7a3a1c" stroke-width="15.7"/>
<path d="M745.0,470.0 C751.2,465.7 766.5,447.0 782.0,444.0 C797.5,441.0 824.8,444.3 838.0,452.0 C851.2,459.7 856.0,478.7 861.0,490.0 C866.0,501.3 869.8,511.7 868.0,520.0 C866.2,528.3 853.0,536.7 850.0,540.0" stroke="#e2924c" stroke-width="13.5"/>
<path d="M745.0,470.0 C751.2,465.7 766.5,447.0 782.0,444.0 C797.5,441.0 824.8,444.3 838.0,452.0 C851.2,459.7 856.0,478.7 861.0,490.0 C866.0,501.3 869.8,511.7 868.0,520.0 C866.2,528.3 853.0,536.7 850.0,540.0" stroke="#efb478" stroke-width="10.8"/>
<path d="M745.0,470.0 C751.2,465.7 766.5,447.0 782.0,444.0 C797.5,441.0 824.8,444.3 838.0,452.0 C851.2,459.7 856.0,478.7 861.0,490.0 C866.0,501.3 869.8,511.7 868.0,520.0 C866.2,528.3 853.0,536.7 850.0,540.0" stroke="#f8d8ae" stroke-width="7.8"/>
<path d="M745.0,470.0 C751.2,465.7 766.5,447.0 782.0,444.0 C797.5,441.0 824.8,444.3 838.0,452.0 C851.2,459.7 856.0,478.7 861.0,490.0 C866.0,501.3 869.8,511.7 868.0,520.0 C866.2,528.3 853.0,536.7 850.0,540.0" stroke="#fdecd6" stroke-width="4.0"/>
<path d="M706.0,526.0 C709.0,523.0 716.5,512.8 724.0,508.0 C731.5,503.2 742.0,498.5 751.0,497.0 C760.0,495.5 773.5,498.7 778.0,499.0" stroke="#7a3a1c" stroke-width="15.7"/>
<path d="M706.0,526.0 C709.0,523.0 716.5,512.8 724.0,508.0 C731.5,503.2 742.0,498.5 751.0,497.0 C760.0,495.5 773.5,498.7 778.0,499.0" stroke="#e2924c" stroke-width="13.5"/>
<path d="M706.0,526.0 C709.0,523.0 716.5,512.8 724.0,508.0 C731.5,503.2 742.0,498.5 751.0,497.0 C760.0,495.5 773.5,498.7 778.0,499.0" stroke="#efb478" stroke-width="10.8"/>
<path d="M706.0,526.0 C709.0,523.0 716.5,512.8 724.0,508.0 C731.5,503.2 742.0,498.5 751.0,497.0 C760.0,495.5 773.5,498.7 778.0,499.0" stroke="#f8d8ae" stroke-width="7.8"/>
<path d="M706.0,526.0 C709.0,523.0 716.5,512.8 724.0,508.0 C731.5,503.2 742.0,498.5 751.0,497.0 C760.0,495.5 773.5,498.7 778.0,499.0" stroke="#fdecd6" stroke-width="4.0"/>
<path d="M726.0,539.0 C728.7,536.8 734.5,529.3 742.0,526.0 C749.5,522.7 761.3,519.8 771.0,519.0 C780.7,518.2 791.3,518.3 800.0,521.0 C808.7,523.7 817.3,529.0 823.0,535.0 C828.7,541.0 831.8,549.5 834.0,557.0 C836.2,564.5 835.7,576.2 836.0,580.0" stroke="#7a3a1c" stroke-width="15.7"/>
<path d="M726.0,539.0 C728.7,536.8 734.5,529.3 742.0,526.0 C749.5,522.7 761.3,519.8 771.0,519.0 C780.7,518.2 791.3,518.3 800.0,521.0 C808.7,523.7 817.3,529.0 823.0,535.0 C828.7,541.0 831.8,549.5 834.0,557.0 C836.2,564.5 835.7,576.2 836.0,580.0" stroke="#e2924c" stroke-width="13.5"/>
<path d="M726.0,539.0 C728.7,536.8 734.5,529.3 742.0,526.0 C749.5,522.7 761.3,519.8 771.0,519.0 C780.7,518.2 791.3,518.3 800.0,521.0 C808.7,523.7 817.3,529.0 823.0,535.0 C828.7,541.0 831.8,549.5 834.0,557.0 C836.2,564.5 835.7,576.2 836.0,580.0" stroke="#efb478" stroke-width="10.8"/>
<path d="M726.0,539.0 C728.7,536.8 734.5,529.3 742.0,526.0 C749.5,522.7 761.3,519.8 771.0,519.0 C780.7,518.2 791.3,518.3 800.0,521.0 C808.7,523.7 817.3,529.0 823.0,535.0 C828.7,541.0 831.8,549.5 834.0,557.0 C836.2,564.5 835.7,576.2 836.0,580.0" stroke="#f8d8ae" stroke-width="7.8"/>
<path d="M726.0,539.0 C728.7,536.8 734.5,529.3 742.0,526.0 C749.5,522.7 761.3,519.8 771.0,519.0 C780.7,518.2 791.3,518.3 800.0,521.0 C808.7,523.7 817.3,529.0 823.0,535.0 C828.7,541.0 831.8,549.5 834.0,557.0 C836.2,564.5 835.7,576.2 836.0,580.0" stroke="#fdecd6" stroke-width="4.0"/>
<path d="M760.0,557.0 C762.5,554.0 768.3,543.2 775.0,539.0 C781.7,534.8 792.8,531.2 800.0,532.0 C807.2,532.8 814.2,538.3 818.0,544.0 C821.8,549.7 822.2,562.3 823.0,566.0" stroke="#7a3a1c" stroke-width="15.7"/>
<path d="M760.0,557.0 C762.5,554.0 768.3,543.2 775.0,539.0 C781.7,534.8 792.8,531.2 800.0,532.0 C807.2,532.8 814.2,538.3 818.0,544.0 C821.8,549.7 822.2,562.3 823.0,566.0" stroke="#e2924c" stroke-width="13.5"/>
<path d="M760.0,557.0 C762.5,554.0 768.3,543.2 775.0,539.0 C781.7,534.8 792.8,531.2 800.0,532.0 C807.2,532.8 814.2,538.3 818.0,544.0 C821.8,549.7 822.2,562.3 823.0,566.0" stroke="#efb478" stroke-width="10.8"/>
<path d="M760.0,557.0 C762.5,554.0 768.3,543.2 775.0,539.0 C781.7,534.8 792.8,531.2 800.0,532.0 C807.2,532.8 814.2,538.3 818.0,544.0 C821.8,549.7 822.2,562.3 823.0,566.0" stroke="#f8d8ae" stroke-width="7.8"/>
<path d="M760.0,557.0 C762.5,554.0 768.3,543.2 775.0,539.0 C781.7,534.8 792.8,531.2 800.0,532.0 C807.2,532.8 814.2,538.3 818.0,544.0 C821.8,549.7 822.2,562.3 823.0,566.0" stroke="#fdecd6" stroke-width="4.0"/>
<path d="M746.0,593.0 C748.3,590.8 754.0,582.7 760.0,580.0 C766.0,577.3 776.0,575.2 782.0,577.0 C788.0,578.8 793.0,585.0 796.0,591.0 C799.0,597.0 799.3,609.3 800.0,613.0" stroke="#7a3a1c" stroke-width="15.7"/>
<path d="M746.0,593.0 C748.3,590.8 754.0,582.7 760.0,580.0 C766.0,577.3 776.0,575.2 782.0,577.0 C788.0,578.8 793.0,585.0 796.0,591.0 C799.0,597.0 799.3,609.3 800.0,613.0" stroke="#e2924c" stroke-width="13.5"/>
<path d="M746.0,593.0 C748.3,590.8 754.0,582.7 760.0,580.0 C766.0,577.3 776.0,575.2 782.0,577.0 C788.0,578.8 793.0,585.0 796.0,591.0 C799.0,597.0 799.3,609.3 800.0,613.0" stroke="#efb478" stroke-width="10.8"/>
<path d="M746.0,593.0 C748.3,590.8 754.0,582.7 760.0,580.0 C766.0,577.3 776.0,575.2 782.0,577.0 C788.0,578.8 793.0,585.0 796.0,591.0 C799.0,597.0 799.3,609.3 800.0,613.0" stroke="#f8d8ae" stroke-width="7.8"/>
<path d="M746.0,593.0 C748.3,590.8 754.0,582.7 760.0,580.0 C766.0,577.3 776.0,575.2 782.0,577.0 C788.0,578.8 793.0,585.0 796.0,591.0 C799.0,597.0 799.3,609.3 800.0,613.0" stroke="#fdecd6" stroke-width="4.0"/>
<path d="M827.0,586.0 C830.8,584.2 842.5,576.0 850.0,575.0 C857.5,574.0 868.3,579.2 872.0,580.0" stroke="#7a3a1c" stroke-width="15.7"/>
<path d="M827.0,586.0 C830.8,584.2 842.5,576.0 850.0,575.0 C857.5,574.0 868.3,579.2 872.0,580.0" stroke="#e2924c" stroke-width="13.5"/>
<path d="M827.0,586.0 C830.8,584.2 842.5,576.0 850.0,575.0 C857.5,574.0 868.3,579.2 872.0,580.0" stroke="#efb478" stroke-width="10.8"/>
<path d="M827.0,586.0 C830.8,584.2 842.5,576.0 850.0,575.0 C857.5,574.0 868.3,579.2 872.0,580.0" stroke="#f8d8ae" stroke-width="7.8"/>
<path d="M827.0,586.0 C830.8,584.2 842.5,576.0 850.0,575.0 C857.5,574.0 868.3,579.2 872.0,580.0" stroke="#fdecd6" stroke-width="4.0"/>
<path d="M845.0,535.0 C847.7,536.8 856.5,540.0 861.0,546.0 C865.5,552.0 869.8,561.7 872.0,571.0 C874.2,580.3 873.7,596.8 874.0,602.0" stroke="#7a3a1c" stroke-width="15.7"/>
<path d="M845.0,535.0 C847.7,536.8 856.5,540.0 861.0,546.0 C865.5,552.0 869.8,561.7 872.0,571.0 C874.2,580.3 873.7,596.8 874.0,602.0" stroke="#e2924c" stroke-width="13.5"/>
<path d="M845.0,535.0 C847.7,536.8 856.5,540.0 861.0,546.0 C865.5,552.0 869.8,561.7 872.0,571.0 C874.2,580.3 873.7,596.8 874.0,602.0" stroke="#efb478" stroke-width="10.8"/>
<path d="M845.0,535.0 C847.7,536.8 856.5,540.0 861.0,546.0 C865.5,552.0 869.8,561.7 872.0,571.0 C874.2,580.3 873.7,596.8 874.0,602.0" stroke="#f8d8ae" stroke-width="7.8"/>
<path d="M845.0,535.0 C847.7,536.8 856.5,540.0 861.0,546.0 C865.5,552.0 869.8,561.7 872.0,571.0 C874.2,580.3 873.7,596.8 874.0,602.0" stroke="#fdecd6" stroke-width="4.0"/>
<path d="M805.0,501.0 C807.2,499.2 811.7,491.8 818.0,490.0 C824.3,488.2 836.2,487.3 843.0,490.0 C849.8,492.7 856.8,500.0 859.0,506.0 C861.2,512.0 859.5,520.5 856.0,526.0 C852.5,531.5 841.0,536.8 838.0,539.0" stroke="#7a3a1c" stroke-width="15.7"/>
<path d="M805.0,501.0 C807.2,499.2 811.7,491.8 818.0,490.0 C824.3,488.2 836.2,487.3 843.0,490.0 C849.8,492.7 856.8,500.0 859.0,506.0 C861.2,512.0 859.5,520.5 856.0,526.0 C852.5,531.5 841.0,536.8 838.0,539.0" stroke="#e2924c" stroke-width="13.5"/>
<path d="M805.0,501.0 C807.2,499.2 811.7,491.8 818.0,490.0 C824.3,488.2 836.2,487.3 843.0,490.0 C849.8,492.7 856.8,500.0 859.0,506.0 C861.2,512.0 859.5,520.5 856.0,526.0 C852.5,531.5 841.0,536.8 838.0,539.0" stroke="#efb478" stroke-width="10.8"/>
<path d="M805.0,501.0 C807.2,499.2 811.7,491.8 818.0,490.0 C824.3,488.2 836.2,487.3 843.0,490.0 C849.8,492.7 856.8,500.0 859.0,506.0 C861.2,512.0 859.5,520.5 856.0,526.0 C852.5,531.5 841.0,536.8 838.0,539.0" stroke="#f8d8ae" stroke-width="7.8"/>
<path d="M805.0,501.0 C807.2,499.2 811.7,491.8 818.0,490.0 C824.3,488.2 836.2,487.3 843.0,490.0 C849.8,492.7 856.8,500.0 859.0,506.0 C861.2,512.0 859.5,520.5 856.0,526.0 C852.5,531.5 841.0,536.8 838.0,539.0" stroke="#fdecd6" stroke-width="4.0"/>
<path d="M764.0,474.0 C765.2,472.2 766.2,465.7 771.0,463.0 C775.8,460.3 785.5,457.3 793.0,458.0 C800.5,458.7 812.2,465.5 816.0,467.0" stroke="#7a3a1c" stroke-width="15.7"/>
<path d="M764.0,474.0 C765.2,472.2 766.2,465.7 771.0,463.0 C775.8,460.3 785.5,457.3 793.0,458.0 C800.5,458.7 812.2,465.5 816.0,467.0" stroke="#e2924c" stroke-width="13.5"/>
<path d="M764.0,474.0 C765.2,472.2 766.2,465.7 771.0,463.0 C775.8,460.3 785.5,457.3 793.0,458.0 C800.5,458.7 812.2,465.5 816.0,467.0" stroke="#efb478" stroke-width="10.8"/>
<path d="M764.0,474.0 C765.2,472.2 766.2,465.7 771.0,463.0 C775.8,460.3 785.5,457.3 793.0,458.0 C800.5,458.7 812.2,465.5 816.0,467.0" stroke="#f8d8ae" stroke-width="7.8"/>
<path d="M764.0,474.0 C765.2,472.2 766.2,465.7 771.0,463.0 C775.8,460.3 785.5,457.3 793.0,458.0 C800.5,458.7 812.2,465.5 816.0,467.0" stroke="#fdecd6" stroke-width="4.0"/>
<path d="M805.0,440.0 C809.8,442.0 825.5,446.3 834.0,452.0 C842.5,457.7 850.8,465.8 856.0,474.0 C861.2,482.2 863.0,493.8 865.0,501.0 C867.0,508.2 867.5,514.3 868.0,517.0" stroke="#7a3a1c" stroke-width="15.7"/>
<path d="M805.0,440.0 C809.8,442.0 825.5,446.3 834.0,452.0 C842.5,457.7 850.8,465.8 856.0,474.0 C861.2,482.2 863.0,493.8 865.0,501.0 C867.0,508.2 867.5,514.3 868.0,517.0" stroke="#e2924c" stroke-width="13.5"/>
<path d="M805.0,440.0 C809.8,442.0 825.5,446.3 834.0,452.0 C842.5,457.7 850.8,465.8 856.0,474.0 C861.2,482.2 863.0,493.8 865.0,501.0 C867.0,508.2 867.5,514.3 868.0,517.0" stroke="#efb478" stroke-width="10.8"/>
<path d="M805.0,440.0 C809.8,442.0 825.5,446.3 834.0,452.0 C842.5,457.7 850.8,465.8 856.0,474.0 C861.2,482.2 863.0,493.8 865.0,501.0 C867.0,508.2 867.5,514.3 868.0,517.0" stroke="#f8d8ae" stroke-width="7.8"/>
<path d="M805.0,440.0 C809.8,442.0 825.5,446.3 834.0,452.0 C842.5,457.7 850.8,465.8 856.0,474.0 C861.2,482.2 863.0,493.8 865.0,501.0 C867.0,508.2 867.5,514.3 868.0,517.0" stroke="#fdecd6" stroke-width="4.0"/>
<path d="M737.0,465.0 C739.3,462.8 744.2,456.2 751.0,452.0 C757.8,447.8 768.7,441.5 778.0,440.0 C787.3,438.5 798.8,441.5 807.0,443.0 C815.2,444.5 823.7,448.0 827.0,449.0" stroke="#7a3a1c" stroke-width="15.7"/>
<path d="M737.0,465.0 C739.3,462.8 744.2,456.2 751.0,452.0 C757.8,447.8 768.7,441.5 778.0,440.0 C787.3,438.5 798.8,441.5 807.0,443.0 C815.2,444.5 823.7,448.0 827.0,449.0" stroke="#e2924c" stroke-width="13.5"/>
<path d="M737.0,465.0 C739.3,462.8 744.2,456.2 751.0,452.0 C757.8,447.8 768.7,441.5 778.0,440.0 C787.3,438.5 798.8,441.5 807.0,443.0 C815.2,444.5 823.7,448.0 827.0,449.0" stroke="#efb478" stroke-width="10.8"/>
<path d="M737.0,465.0 C739.3,462.8 744.2,456.2 751.0,452.0 C757.8,447.8 768.7,441.5 778.0,440.0 C787.3,438.5 798.8,441.5 807.0,443.0 C815.2,444.5 823.7,448.0 827.0,449.0" stroke="#f8d8ae" stroke-width="7.8"/>
<path d="M737.0,465.0 C739.3,462.8 744.2,456.2 751.0,452.0 C757.8,447.8 768.7,441.5 778.0,440.0 C787.3,438.5 798.8,441.5 807.0,443.0 C815.2,444.5 823.7,448.0 827.0,449.0" stroke="#fdecd6" stroke-width="4.0"/>
<path d="M755.0,447.0 C755.8,444.3 756.7,435.2 760.0,431.0 C763.3,426.8 769.5,422.7 775.0,422.0 C780.5,421.3 788.0,424.3 793.0,427.0 C798.0,429.7 803.0,436.2 805.0,438.0" stroke="#7a3a1c" stroke-width="15.7"/>
<path d="M755.0,447.0 C755.8,444.3 756.7,435.2 760.0,431.0 C763.3,426.8 769.5,422.7 775.0,422.0 C780.5,421.3 788.0,424.3 793.0,427.0 C798.0,429.7 803.0,436.2 805.0,438.0" stroke="#e2924c" stroke-width="13.5"/>
<path d="M755.0,447.0 C755.8,444.3 756.7,435.2 760.0,431.0 C763.3,426.8 769.5,422.7 775.0,422.0 C780.5,421.3 788.0,424.3 793.0,427.0 C798.0,429.7 803.0,436.2 805.0,438.0" stroke="#efb478" stroke-width="10.8"/>
<path d="M755.0,447.0 C755.8,444.3 756.7,435.2 760.0,431.0 C763.3,426.8 769.5,422.7 775.0,422.0 C780.5,421.3 788.0,424.3 793.0,427.0 C798.0,429.7 803.0,436.2 805.0,438.0" stroke="#f8d8ae" stroke-width="7.8"/>
<path d="M755.0,447.0 C755.8,444.3 756.7,435.2 760.0,431.0 C763.3,426.8 769.5,422.7 775.0,422.0 C780.5,421.3 788.0,424.3 793.0,427.0 C798.0,429.7 803.0,436.2 805.0,438.0" stroke="#fdecd6" stroke-width="4.0"/>
<path d="M632.0,505.0 C635.7,502.5 646.2,493.3 654.0,490.0 C661.8,486.7 674.8,485.8 679.0,485.0" stroke="#7a3a1c" stroke-width="15.7"/>
<path d="M632.0,505.0 C635.7,502.5 646.2,493.3 654.0,490.0 C661.8,486.7 674.8,485.8 679.0,485.0" stroke="#e2924c" stroke-width="13.5"/>
<path d="M632.0,505.0 C635.7,502.5 646.2,493.3 654.0,490.0 C661.8,486.7 674.8,485.8 679.0,485.0" stroke="#efb478" stroke-width="10.8"/>
<path d="M632.0,505.0 C635.7,502.5 646.2,493.3 654.0,490.0 C661.8,486.7 674.8,485.8 679.0,485.0" stroke="#f8d8ae" stroke-width="7.8"/>
<path d="M632.0,505.0 C635.7,502.5 646.2,493.3 654.0,490.0 C661.8,486.7 674.8,485.8 679.0,485.0" stroke="#fdecd6" stroke-width="4.0"/>
<path d="M623.0,544.0 C625.5,542.5 631.0,537.0 638.0,535.0 C645.0,533.0 655.2,532.0 665.0,532.0 C674.8,532.0 691.7,534.5 697.0,535.0" stroke="#7a3a1c" stroke-width="15.7"/>
<path d="M623.0,544.0 C625.5,542.5 631.0,537.0 638.0,535.0 C645.0,533.0 655.2,532.0 665.0,532.0 C674.8,532.0 691.7,534.5 697.0,535.0" stroke="#e2924c" stroke-width="13.5"/>
<path d="M623.0,544.0 C625.5,542.5 631.0,537.0 638.0,535.0 C645.0,533.0 655.2,532.0 665.0,532.0 C674.8,532.0 691.7,534.5 697.0,535.0" stroke="#efb478" stroke-width="10.8"/>
<path d="M623.0,544.0 C625.5,542.5 631.0,537.0 638.0,535.0 C645.0,533.0 655.2,532.0 665.0,532.0 C674.8,532.0 691.7,534.5 697.0,535.0" stroke="#f8d8ae" stroke-width="7.8"/>
<path d="M623.0,544.0 C625.5,542.5 631.0,537.0 638.0,535.0 C645.0,533.0 655.2,532.0 665.0,532.0 C674.8,532.0 691.7,534.5 697.0,535.0" stroke="#fdecd6" stroke-width="4.0"/>
<path d="M659.0,619.0 C663.3,617.2 676.3,608.3 685.0,608.0 C693.7,607.7 703.8,611.2 711.0,617.0 C718.2,622.8 725.2,638.7 728.0,643.0" stroke="#7a3a1c" stroke-width="15.7"/>
<path d="M659.0,619.0 C663.3,617.2 676.3,608.3 685.0,608.0 C693.7,607.7 703.8,611.2 711.0,617.0 C718.2,622.8 725.2,638.7 728.0,643.0" stroke="#e2924c" stroke-width="13.5"/>
<path d="M659.0,619.0 C663.3,617.2 676.3,608.3 685.0,608.0 C693.7,607.7 703.8,611.2 711.0,617.0 C718.2,622.8 725.2,638.7 728.0,643.0" stroke="#efb478" stroke-width="10.8"/>
<path d="M659.0,619.0 C663.3,617.2 676.3,608.3 685.0,608.0 C693.7,607.7 703.8,611.2 711.0,617.0 C718.2,622.8 725.2,638.7 728.0,643.0" stroke="#f8d8ae" stroke-width="7.8"/>
<path d="M659.0,619.0 C663.3,617.2 676.3,608.3 685.0,608.0 C693.7,607.7 703.8,611.2 711.0,617.0 C718.2,622.8 725.2,638.7 728.0,643.0" stroke="#fdecd6" stroke-width="4.0"/>
<path d="M641.0,656.0 C644.7,658.5 654.7,668.5 663.0,671.0 C671.3,673.5 682.7,673.5 691.0,671.0 C699.3,668.5 709.3,658.5 713.0,656.0" stroke="#7a3a1c" stroke-width="15.7"/>
<path d="M641.0,656.0 C644.7,658.5 654.7,668.5 663.0,671.0 C671.3,673.5 682.7,673.5 691.0,671.0 C699.3,668.5 709.3,658.5 713.0,656.0" stroke="#e2924c" stroke-width="13.5"/>
<path d="M641.0,656.0 C644.7,658.5 654.7,668.5 663.0,671.0 C671.3,673.5 682.7,673.5 691.0,671.0 C699.3,668.5 709.3,658.5 713.0,656.0" stroke="#efb478" stroke-width="10.8"/>
<path d="M641.0,656.0 C644.7,658.5 654.7,668.5 663.0,671.0 C671.3,673.5 682.7,673.5 691.0,671.0 C699.3,668.5 709.3,658.5 713.0,656.0" stroke="#f8d8ae" stroke-width="7.8"/>
<path d="M641.0,656.0 C644.7,658.5 654.7,668.5 663.0,671.0 C671.3,673.5 682.7,673.5 691.0,671.0 C699.3,668.5 709.3,658.5 713.0,656.0" stroke="#fdecd6" stroke-width="4.0"/>
<path d="M750.0,756.0 C751.5,758.8 757.2,767.5 759.0,773.0 C760.8,778.5 760.7,786.3 761.0,789.0" stroke="#7a3a1c" stroke-width="15.7"/>
<path d="M750.0,756.0 C751.5,758.8 757.2,767.5 759.0,773.0 C760.8,778.5 760.7,786.3 761.0,789.0" stroke="#e2924c" stroke-width="13.5"/>
<path d="M750.0,756.0 C751.5,758.8 757.2,767.5 759.0,773.0 C760.8,778.5 760.7,786.3 761.0,789.0" stroke="#efb478" stroke-width="10.8"/>
<path d="M750.0,756.0 C751.5,758.8 757.2,767.5 759.0,773.0 C760.8,778.5 760.7,786.3 761.0,789.0" stroke="#f8d8ae" stroke-width="7.8"/>
<path d="M750.0,756.0 C751.5,758.8 757.2,767.5 759.0,773.0 C760.8,778.5 760.7,786.3 761.0,789.0" stroke="#fdecd6" stroke-width="4.0"/>
<path d="M785.0,750.0 C788.5,750.3 801.0,749.5 806.0,752.0 C811.0,754.5 815.0,760.3 815.0,765.0 C815.0,769.7 811.0,775.0 806.0,780.0 C801.0,785.0 788.5,792.5 785.0,795.0" stroke="#7a3a1c" stroke-width="15.7"/>
<path d="M785.0,750.0 C788.5,750.3 801.0,749.5 806.0,752.0 C811.0,754.5 815.0,760.3 815.0,765.0 C815.0,769.7 811.0,775.0 806.0,780.0 C801.0,785.0 788.5,792.5 785.0,795.0" stroke="#e2924c" stroke-width="13.5"/>
<path d="M785.0,750.0 C788.5,750.3 801.0,749.5 806.0,752.0 C811.0,754.5 815.0,760.3 815.0,765.0 C815.0,769.7 811.0,775.0 806.0,780.0 C801.0,785.0 788.5,792.5 785.0,795.0" stroke="#efb478" stroke-width="10.8"/>
<path d="M785.0,750.0 C788.5,750.3 801.0,749.5 806.0,752.0 C811.0,754.5 815.0,760.3 815.0,765.0 C815.0,769.7 811.0,775.0 806.0,780.0 C801.0,785.0 788.5,792.5 785.0,795.0" stroke="#f8d8ae" stroke-width="7.8"/>
<path d="M785.0,750.0 C788.5,750.3 801.0,749.5 806.0,752.0 C811.0,754.5 815.0,760.3 815.0,765.0 C815.0,769.7 811.0,775.0 806.0,780.0 C801.0,785.0 788.5,792.5 785.0,795.0" stroke="#fdecd6" stroke-width="4.0"/>
<path d="M815.0,773.0 C818.7,771.7 829.7,769.3 837.0,765.0 C844.3,760.7 852.5,754.3 859.0,747.0 C865.5,739.7 873.2,725.3 876.0,721.0" stroke="#7a3a1c" stroke-width="15.7"/>
<path d="M815.0,773.0 C818.7,771.7 829.7,769.3 837.0,765.0 C844.3,760.7 852.5,754.3 859.0,747.0 C865.5,739.7 873.2,725.3 876.0,721.0" stroke="#e2924c" stroke-width="13.5"/>
<path d="M815.0,773.0 C818.7,771.7 829.7,769.3 837.0,765.0 C844.3,760.7 852.5,754.3 859.0,747.0 C865.5,739.7 873.2,725.3 876.0,721.0" stroke="#efb478" stroke-width="10.8"/>
<path d="M815.0,773.0 C818.7,771.7 829.7,769.3 837.0,765.0 C844.3,760.7 852.5,754.3 859.0,747.0 C865.5,739.7 873.2,725.3 876.0,721.0" stroke="#f8d8ae" stroke-width="7.8"/>
<path d="M815.0,773.0 C818.7,771.7 829.7,769.3 837.0,765.0 C844.3,760.7 852.5,754.3 859.0,747.0 C865.5,739.7 873.2,725.3 876.0,721.0" stroke="#fdecd6" stroke-width="4.0"/>
<path d="M733.0,776.0 C731.2,779.2 722.8,788.5 722.0,795.0 C721.2,801.5 723.3,810.2 728.0,815.0 C732.7,819.8 742.7,824.3 750.0,824.0 C757.3,823.7 766.8,817.8 772.0,813.0 C777.2,808.2 781.0,800.8 781.0,795.0 C781.0,789.2 776.8,782.2 772.0,778.0 C767.2,773.8 758.5,770.3 752.0,770.0 C745.5,769.7 736.2,775.0 733.0,776.0" stroke="#7a3a1c" stroke-width="15.7"/>
<path d="M733.0,776.0 C731.2,779.2 722.8,788.5 722.0,795.0 C721.2,801.5 723.3,810.2 728.0,815.0 C732.7,819.8 742.7,824.3 750.0,824.0 C757.3,823.7 766.8,817.8 772.0,813.0 C777.2,808.2 781.0,800.8 781.0,795.0 C781.0,789.2 776.8,782.2 772.0,778.0 C767.2,773.8 758.5,770.3 752.0,770.0 C745.5,769.7 736.2,775.0 733.0,776.0" stroke="#e2924c" stroke-width="13.5"/>
<path d="M733.0,776.0 C731.2,779.2 722.8,788.5 722.0,795.0 C721.2,801.5 723.3,810.2 728.0,815.0 C732.7,819.8 742.7,824.3 750.0,824.0 C757.3,823.7 766.8,817.8 772.0,813.0 C777.2,808.2 781.0,800.8 781.0,795.0 C781.0,789.2 776.8,782.2 772.0,778.0 C767.2,773.8 758.5,770.3 752.0,770.0 C745.5,769.7 736.2,775.0 733.0,776.0" stroke="#efb478" stroke-width="10.8"/>
<path d="M733.0,776.0 C731.2,779.2 722.8,788.5 722.0,795.0 C721.2,801.5 723.3,810.2 728.0,815.0 C732.7,819.8 742.7,824.3 750.0,824.0 C757.3,823.7 766.8,817.8 772.0,813.0 C777.2,808.2 781.0,800.8 781.0,795.0 C781.0,789.2 776.8,782.2 772.0,778.0 C767.2,773.8 758.5,770.3 752.0,770.0 C745.5,769.7 736.2,775.0 733.0,776.0" stroke="#f8d8ae" stroke-width="7.8"/>
<path d="M733.0,776.0 C731.2,779.2 722.8,788.5 722.0,795.0 C721.2,801.5 723.3,810.2 728.0,815.0 C732.7,819.8 742.7,824.3 750.0,824.0 C757.3,823.7 766.8,817.8 772.0,813.0 C777.2,808.2 781.0,800.8 781.0,795.0 C781.0,789.2 776.8,782.2 772.0,778.0 C767.2,773.8 758.5,770.3 752.0,770.0 C745.5,769.7 736.2,775.0 733.0,776.0" stroke="#fdecd6" stroke-width="4.0"/>
<path d="M395.0,630.0 C400.8,628.3 417.5,623.0 430.0,620.0 C442.5,617.0 460.0,615.3 470.0,612.0 C480.0,608.7 486.7,602.0 490.0,600.0" stroke="#7a3a1c" stroke-width="15.7"/>
<path d="M395.0,630.0 C400.8,628.3 417.5,623.0 430.0,620.0 C442.5,617.0 460.0,615.3 470.0,612.0 C480.0,608.7 486.7,602.0 490.0,600.0" stroke="#e2924c" stroke-width="13.5"/>
<path d="M395.0,630.0 C400.8,628.3 417.5,623.0 430.0,620.0 C442.5,617.0 460.0,615.3 470.0,612.0 C480.0,608.7 486.7,602.0 490.0,600.0" stroke="#efb478" stroke-width="10.8"/>
<path d="M395.0,630.0 C400.8,628.3 417.5,623.0 430.0,620.0 C442.5,617.0 460.0,615.3 470.0,612.0 C480.0,608.7 486.7,602.0 490.0,600.0" stroke="#f8d8ae" stroke-width="7.8"/>
<path d="M395.0,630.0 C400.8,628.3 417.5,623.0 430.0,620.0 C442.5,617.0 460.0,615.3 470.0,612.0 C480.0,608.7 486.7,602.0 490.0,600.0" stroke="#fdecd6" stroke-width="4.0"/>
<path d="M410.0,648.0 C416.7,646.7 438.3,643.8 450.0,640.0 C461.7,636.2 475.0,627.5 480.0,625.0" stroke="#7a3a1c" stroke-width="15.7"/>
<path d="M410.0,648.0 C416.7,646.7 438.3,643.8 450.0,640.0 C461.7,636.2 475.0,627.5 480.0,625.0" stroke="#e2924c" stroke-width="13.5"/>
<path d="M410.0,648.0 C416.7,646.7 438.3,643.8 450.0,640.0 C461.7,636.2 475.0,627.5 480.0,625.0" stroke="#efb478" stroke-width="10.8"/>
<path d="M410.0,648.0 C416.7,646.7 438.3,643.8 450.0,640.0 C461.7,636.2 475.0,627.5 480.0,625.0" stroke="#f8d8ae" stroke-width="7.8"/>
<path d="M410.0,648.0 C416.7,646.7 438.3,643.8 450.0,640.0 C461.7,636.2 475.0,627.5 480.0,625.0" stroke="#fdecd6" stroke-width="4.0"/>
<path d="M497.0,745.0 C500.0,746.7 507.8,750.5 515.0,755.0 C522.2,759.5 535.8,769.2 540.0,772.0" stroke="#7a3a1c" stroke-width="15.7"/>
<path d="M497.0,745.0 C500.0,746.7 507.8,750.5 515.0,755.0 C522.2,759.5 535.8,769.2 540.0,772.0" stroke="#e2924c" stroke-width="13.5"/>
<path d="M497.0,745.0 C500.0,746.7 507.8,750.5 515.0,755.0 C522.2,759.5 535.8,769.2 540.0,772.0" stroke="#efb478" stroke-width="10.8"/>
<path d="M497.0,745.0 C500.0,746.7 507.8,750.5 515.0,755.0 C522.2,759.5 535.8,769.2 540.0,772.0" stroke="#f8d8ae" stroke-width="7.8"/>
<path d="M497.0,745.0 C500.0,746.7 507.8,750.5 515.0,755.0 C522.2,759.5 535.8,769.2 540.0,772.0" stroke="#fdecd6" stroke-width="4.0"/>
</g>
<path d="M628.0,505.0 C623.3,510.8 611.3,527.5 600.0,540.0 C588.7,552.5 572.5,568.0 560.0,580.0 C547.5,592.0 530.8,606.7 525.0,612.0" fill="none" stroke="#9a1209" stroke-width="4" stroke-linecap="round"/>
<path d="M618.0,512.0 C612.5,518.3 596.3,537.0 585.0,550.0 C573.7,563.0 558.3,577.3 550.0,590.0 C541.7,602.7 537.5,620.0 535.0,626.0" fill="none" stroke="#9a1209" stroke-width="3.5" stroke-linecap="round"/>
<path d="M605.0,520.0 C600.0,525.8 584.5,544.7 575.0,555.0 C565.5,565.3 552.5,577.5 548.0,582.0" fill="none" stroke="#9a1209" stroke-width="3" stroke-linecap="round"/>
<path d="M640.0,510.0 C638.3,515.0 636.7,529.2 630.0,540.0 C623.3,550.8 607.5,565.0 600.0,575.0 C592.5,585.0 587.5,595.8 585.0,600.0" fill="none" stroke="#9a1209" stroke-width="3" stroke-linecap="round"/>
<path d="M600.0,520.0 C593.3,526.7 573.3,546.7 560.0,560.0 C546.7,573.3 530.0,586.7 520.0,600.0 C510.0,613.3 503.3,633.3 500.0,640.0" fill="none" stroke="#9a1209" stroke-width="2" stroke-linecap="round"/>
<path d="M665.0,635.0 C660.8,640.0 649.2,654.2 640.0,665.0 C630.8,675.8 619.2,688.0 610.0,700.0 C600.8,712.0 589.2,730.8 585.0,737.0" fill="none" stroke="#9a1209" stroke-width="4" stroke-linecap="round"/>
<path d="M672.0,640.0 C669.2,645.8 662.8,662.5 655.0,675.0 C647.2,687.5 634.2,702.2 625.0,715.0 C615.8,727.8 604.2,745.8 600.0,752.0" fill="none" stroke="#9a1209" stroke-width="3.5" stroke-linecap="round"/>
<path d="M650.0,645.0 C645.0,650.8 630.0,669.8 620.0,680.0 C610.0,690.2 595.0,701.7 590.0,706.0" fill="none" stroke="#9a1209" stroke-width="3" stroke-linecap="round"/>
<path d="M690.0,640.0 C688.3,645.3 685.0,662.0 680.0,672.0 C675.0,682.0 666.7,692.0 660.0,700.0 C653.3,708.0 643.3,716.7 640.0,720.0" fill="none" stroke="#9a1209" stroke-width="2.5" stroke-linecap="round"/>
<path d="M650.0,600.0 C661.7,598.3 696.7,595.0 720.0,590.0 C743.3,585.0 766.7,577.0 790.0,570.0 C813.3,563.0 848.3,551.7 860.0,548.0" fill="none" stroke="#9a1209" stroke-width="2" stroke-linecap="round"/>
<path d="M650.0,610.0 C665.0,608.3 711.7,603.3 740.0,600.0 C768.3,596.7 796.8,594.2 820.0,590.0 C843.2,585.8 869.2,577.5 879.0,575.0" fill="none" stroke="#9a1209" stroke-width="2.2" stroke-linecap="round"/>
<path d="M660.0,590.0 C666.7,585.0 683.3,567.5 700.0,560.0 C716.7,552.5 750.0,547.5 760.0,545.0" fill="none" stroke="#9a1209" stroke-width="2" stroke-linecap="round"/>
<path d="M560.0,700.0 C570.0,698.3 600.0,695.0 620.0,690.0 C640.0,685.0 660.0,676.7 680.0,670.0 C700.0,663.3 730.0,653.3 740.0,650.0" fill="none" stroke="#9a1209" stroke-width="2.2" stroke-linecap="round"/>
<path d="M600.0,720.0 C610.0,716.7 640.0,705.0 660.0,700.0 C680.0,695.0 710.0,691.7 720.0,690.0" fill="none" stroke="#9a1209" stroke-width="2" stroke-linecap="round"/>
<path d="M700.0,640.0 C691.7,646.7 665.0,666.7 650.0,680.0 C635.0,693.3 616.7,713.3 610.0,720.0" fill="none" stroke="#9a1209" stroke-width="2" stroke-linecap="round"/>
<path d="M720.0,650.0 C726.7,648.3 746.7,641.7 760.0,640.0 C773.3,638.3 793.3,640.0 800.0,640.0" fill="none" stroke="#9a1209" stroke-width="2.5" stroke-linecap="round"/>
<path d="M785.0,688.0 C789.2,684.7 800.8,673.5 810.0,668.0 C819.2,662.5 830.0,657.7 840.0,655.0 C850.0,652.3 865.0,652.5 870.0,652.0" fill="none" stroke="#9a1209" stroke-width="2" stroke-linecap="round"/>
<path d="M770.0,700.0 C773.3,703.3 785.0,713.3 790.0,720.0 C795.0,726.7 798.3,736.7 800.0,740.0" fill="none" stroke="#9a1209" stroke-width="3" stroke-linecap="round"/>
<path d="M700.0,770.0 C699.2,773.3 694.2,784.7 695.0,790.0 C695.8,795.3 703.3,800.0 705.0,802.0" fill="none" stroke="#9a1209" stroke-width="3" stroke-linecap="round"/>
<path d="M680.0,782.0 C678.7,784.7 673.3,795.3 672.0,798.0" fill="none" stroke="#9a1209" stroke-width="3" stroke-linecap="round"/>
<path d="M610.0,520.0 C605.8,524.2 593.3,537.5 585.0,545.0 C576.7,552.5 568.3,557.5 560.0,565.0 C551.7,572.5 539.2,585.8 535.0,590.0" fill="none" stroke="#a8170c" stroke-width="7" stroke-linecap="round"/>
<path d="M590.0,530.0 C585.0,534.2 570.0,545.8 560.0,555.0 C550.0,564.2 538.0,575.8 530.0,585.0 C522.0,594.2 515.0,605.8 512.0,610.0" fill="none" stroke="#a8170c" stroke-width="6" stroke-linecap="round"/>
<path d="M625.0,515.0 C622.5,520.0 615.8,535.8 610.0,545.0 C604.2,554.2 593.3,565.8 590.0,570.0" fill="none" stroke="#a8170c" stroke-width="6" stroke-linecap="round"/>
<path d="M575.0,545.0 C570.8,550.0 557.5,565.8 550.0,575.0 C542.5,584.2 534.7,591.7 530.0,600.0 C525.3,608.3 523.3,620.8 522.0,625.0" fill="none" stroke="#a8170c" stroke-width="5" stroke-linecap="round"/>
<path d="M660.0,640.0 C655.8,645.0 642.5,660.8 635.0,670.0 C627.5,679.2 621.2,685.8 615.0,695.0 C608.8,704.2 600.8,720.0 598.0,725.0" fill="none" stroke="#a8170c" stroke-width="6.5" stroke-linecap="round"/>
<path d="M645.0,648.0 C640.8,652.5 627.5,666.3 620.0,675.0 C612.5,683.7 603.3,695.8 600.0,700.0" fill="none" stroke="#a8170c" stroke-width="6" stroke-linecap="round"/>
<path d="M675.0,640.0 C672.8,645.0 667.0,660.0 662.0,670.0 C657.0,680.0 651.2,690.0 645.0,700.0 C638.8,710.0 628.3,725.0 625.0,730.0" fill="none" stroke="#a8170c" stroke-width="5" stroke-linecap="round"/>
<path d="M454.0,546.0 C444.3,544.7 430.3,546.0 420.0,548.0 C409.7,550.0 399.5,552.3 392.0,558.0 C384.5,563.7 377.3,574.0 375.0,582.0 C372.7,590.0 374.7,598.7 378.0,606.0 C381.3,613.3 387.2,621.0 395.0,626.0 C402.8,631.0 415.0,635.7 425.0,636.0 C435.0,636.3 445.8,633.0 455.0,628.0 C464.2,623.0 473.8,614.0 480.0,606.0 C486.2,598.0 492.3,588.3 492.0,580.0 C491.7,571.7 484.3,561.7 478.0,556.0 C471.7,550.3 463.7,547.3 454.0,546.0Z" fill="url(#red2)" stroke="#6e0c06" stroke-width="1.2" />
<path d="M576.0,482.0 C576.0,476.7 584.3,468.2 590.0,462.0 C595.7,455.8 602.5,449.7 610.0,445.0 C617.5,440.3 626.7,436.2 635.0,434.0 C643.3,431.8 650.8,430.5 660.0,432.0 C669.2,433.5 679.3,437.7 690.0,443.0 C700.7,448.3 712.3,456.2 724.0,464.0 C735.7,471.8 758.2,486.2 760.0,490.0 C761.8,493.8 744.0,489.3 735.0,487.0 C726.0,484.7 715.3,479.3 706.0,476.0 C696.7,472.7 687.7,469.7 679.0,467.0 C670.3,464.3 661.2,461.3 654.0,460.0 C646.8,458.7 642.0,457.5 636.0,459.0 C630.0,460.5 623.3,464.7 618.0,469.0 C612.7,473.3 608.7,480.8 604.0,485.0 C599.3,489.2 594.7,494.5 590.0,494.0 C585.3,493.5 576.0,487.3 576.0,482.0Z" fill="url(#red1)" stroke="#6e0c06" stroke-width="1.2" />
<path d="M640.0,505.0 C643.0,502.0 655.0,502.5 663.0,500.0 C671.0,497.5 679.3,492.2 688.0,490.0 C696.7,487.8 707.0,487.0 715.0,487.0 C723.0,487.0 735.3,486.8 736.0,490.0 C736.7,493.2 726.3,501.2 719.0,506.0 C711.7,510.8 700.5,516.3 692.0,519.0 C683.5,521.7 675.8,522.2 668.0,522.0 C660.2,521.8 649.7,520.8 645.0,518.0 C640.3,515.2 637.0,508.0 640.0,505.0Z" fill="url(#red1)" stroke="#6e0c06" stroke-width="1.2" />
<path d="M448.0,520.0 C451.0,514.7 462.2,509.3 470.0,505.0 C477.8,500.7 484.2,497.8 495.0,494.0 C505.8,490.2 521.5,484.3 535.0,482.0 C548.5,479.7 564.0,479.2 576.0,480.0 C588.0,480.8 598.3,485.0 607.0,487.0 C615.7,489.0 622.2,489.8 628.0,492.0 C633.8,494.2 642.5,496.2 642.0,500.0 C641.5,503.8 632.3,510.3 625.0,515.0 C617.7,519.7 608.5,523.0 598.0,528.0 C587.5,533.0 573.2,537.7 562.0,545.0 C550.8,552.3 540.7,564.8 531.0,572.0 C521.3,579.2 512.2,586.7 504.0,588.0 C495.8,589.3 488.7,585.3 482.0,580.0 C475.3,574.7 469.0,563.2 464.0,556.0 C459.0,548.8 454.7,543.0 452.0,537.0 C449.3,531.0 445.0,525.3 448.0,520.0Z" fill="url(#red1)" stroke="#6e0c06" stroke-width="1.2" />
<path d="M535.0,483.0 C536.3,485.8 538.8,494.7 543.0,500.0 C547.2,505.3 553.0,511.3 560.0,515.0 C567.0,518.7 580.8,520.8 585.0,522.0" fill="none" stroke="#f0b090" stroke-width="1.3" stroke-linecap="round"/>
<path d="M452.0,522.0 C453.7,525.8 457.7,536.2 462.0,545.0 C466.3,553.8 475.3,570.0 478.0,575.0" fill="none" stroke="#f0b090" stroke-width="1.3" stroke-linecap="round"/>
<path d="M480.0,512.0 C483.3,510.5 493.3,505.3 500.0,503.0 C506.7,500.7 516.7,498.8 520.0,498.0" fill="none" stroke="#ffd9c8" stroke-width="2.2" stroke-linecap="round" opacity="0.7"/>
<path d="M395.0,575.0 C394.2,578.3 389.5,588.8 390.0,595.0 C390.5,601.2 396.7,609.2 398.0,612.0" fill="none" stroke="#ffd9c8" stroke-width="3" stroke-linecap="round" opacity="0.35"/>
<path d="M560.0,496.0 C562.5,495.3 570.0,492.5 575.0,492.0 C580.0,491.5 587.5,492.8 590.0,493.0" fill="none" stroke="#ffd9c8" stroke-width="3" stroke-linecap="round" opacity="0.4"/>
<path d="M487.0,639.0 C479.0,638.2 463.8,646.8 454.0,653.0 C444.2,659.2 433.3,668.2 428.0,676.0 C422.7,683.8 420.8,692.2 422.0,700.0 C423.2,707.8 428.8,716.8 435.0,723.0 C441.2,729.2 450.7,736.2 459.0,737.0 C467.3,737.8 478.5,731.8 485.0,728.0 C491.5,724.2 494.5,721.0 498.0,714.0 C501.5,707.0 505.3,695.3 506.0,686.0 C506.7,676.7 505.2,665.8 502.0,658.0 C498.8,650.2 495.0,639.8 487.0,639.0Z" fill="url(#red2)" stroke="#6e0c06" stroke-width="1.2" />
<path d="M618.0,592.0 C623.7,584.0 657.0,571.3 674.0,564.0 C691.0,556.7 707.2,550.3 720.0,548.0 C732.8,545.7 751.0,547.2 751.0,550.0 C751.0,552.8 731.3,558.5 720.0,565.0 C708.7,571.5 690.7,580.5 683.0,589.0 C675.3,597.5 681.2,612.2 674.0,616.0 C666.8,619.8 649.3,616.0 640.0,612.0 C630.7,608.0 612.3,600.0 618.0,592.0Z" fill="url(#red1)" stroke="#6e0c06" stroke-width="1.2" />
<path d="M496.0,625.0 C503.0,618.8 521.5,615.3 534.0,611.0 C546.5,606.7 557.0,602.2 571.0,599.0 C585.0,595.8 604.0,591.5 618.0,592.0 C632.0,592.5 645.7,598.0 655.0,602.0 C664.3,606.0 674.0,609.8 674.0,616.0 C674.0,622.2 662.8,632.0 655.0,639.0 C647.2,646.0 636.3,653.3 627.0,658.0 C617.7,662.7 606.8,660.8 599.0,667.0 C591.2,673.2 589.3,687.2 580.0,695.0 C570.7,702.8 554.3,710.5 543.0,714.0 C531.7,717.5 519.0,721.7 512.0,716.0 C505.0,710.3 504.3,691.3 501.0,680.0 C497.7,668.7 492.8,657.2 492.0,648.0 C491.2,638.8 489.0,631.2 496.0,625.0Z" fill="url(#red1)" stroke="#6e0c06" stroke-width="1.2" />
<path d="M571.0,600.0 C572.5,603.3 575.8,613.3 580.0,620.0 C584.2,626.7 592.7,632.5 596.0,640.0 C599.3,647.5 599.3,660.8 600.0,665.0" fill="none" stroke="#f0b090" stroke-width="1.3" stroke-linecap="round"/>
<path d="M498.0,628.0 C498.8,633.3 501.0,648.0 503.0,660.0 C505.0,672.0 508.8,693.3 510.0,700.0" fill="none" stroke="#f0b090" stroke-width="1.3" stroke-linecap="round"/>
<path d="M520.0,640.0 C522.5,639.0 530.3,635.7 535.0,634.0 C539.7,632.3 545.8,630.7 548.0,630.0" fill="none" stroke="#ffd9c8" stroke-width="2" stroke-linecap="round" opacity="0.8"/>
<path d="M522.0,662.0 C524.2,661.3 532.8,658.7 535.0,658.0" fill="none" stroke="#ffd9c8" stroke-width="2" stroke-linecap="round" opacity="0.7"/>
<path d="M445.0,670.0 C444.2,673.3 440.8,686.7 440.0,690.0" fill="none" stroke="#ffd9c8" stroke-width="2.5" stroke-linecap="round" opacity="0.5"/>
<path d="M605.0,612.0 C608.3,611.0 619.2,606.7 625.0,606.0 C630.8,605.3 637.5,607.7 640.0,608.0" fill="none" stroke="#ffd9c8" stroke-width="4" stroke-linecap="round" opacity="0.35"/>
<path d="M741.0,667.0 C744.0,661.8 762.5,651.2 772.0,645.0 C781.5,638.8 788.7,634.2 798.0,630.0 C807.3,625.8 817.8,622.2 828.0,620.0 C838.2,617.8 849.0,616.0 859.0,617.0 C869.0,618.0 887.5,621.5 888.0,626.0 C888.5,630.5 872.0,639.3 862.0,644.0 C852.0,648.7 837.7,651.7 828.0,654.0 C818.3,656.3 812.0,655.7 804.0,658.0 C796.0,660.3 788.3,665.0 780.0,668.0 C771.7,671.0 760.5,676.2 754.0,676.0 C747.5,675.8 738.0,672.2 741.0,667.0Z" fill="url(#red1)" stroke="#6e0c06" stroke-width="1.2" />
<path d="M772.0,742.0 C772.8,737.7 782.5,732.0 790.0,728.0 C797.5,724.0 809.3,724.3 817.0,718.0 C824.7,711.7 830.5,698.3 836.0,690.0 C841.5,681.7 842.7,674.3 850.0,668.0 C857.3,661.7 872.7,650.0 880.0,652.0 C887.3,654.0 893.3,671.0 894.0,680.0 C894.7,689.0 890.3,697.3 884.0,706.0 C877.7,714.7 866.7,724.7 856.0,732.0 C845.3,739.3 831.8,746.3 820.0,750.0 C808.2,753.7 793.0,755.3 785.0,754.0 C777.0,752.7 771.2,746.3 772.0,742.0Z" fill="url(#red2)" stroke="#6e0c06" stroke-width="1.2" />
<path d="M602.0,737.0 C593.0,734.2 580.7,743.2 571.0,748.0 C561.3,752.8 551.0,759.7 544.0,766.0 C537.0,772.3 531.3,779.3 529.0,786.0 C526.7,792.7 527.5,800.3 530.0,806.0 C532.5,811.7 538.0,817.2 544.0,820.0 C550.0,822.8 558.2,823.2 566.0,823.0 C573.8,822.8 583.2,820.8 591.0,819.0 C598.8,817.2 606.5,814.7 613.0,812.0 C619.5,809.3 628.0,810.8 630.0,803.0 C632.0,795.2 629.7,776.0 625.0,765.0 C620.3,754.0 611.0,739.8 602.0,737.0Z" fill="url(#red2)" stroke="#6e0c06" stroke-width="1.2" />
<path d="M602.0,737.0 C604.2,726.0 615.7,719.7 625.0,714.0 C634.3,708.3 647.5,706.0 658.0,703.0 C668.5,700.0 679.2,698.0 688.0,696.0 C696.8,694.0 700.7,692.2 711.0,691.0 C721.3,689.8 737.7,689.7 750.0,689.0 C762.3,688.3 780.8,684.3 785.0,687.0 C789.2,689.7 779.3,699.3 775.0,705.0 C770.7,710.7 766.8,713.5 759.0,721.0 C751.2,728.5 736.7,742.7 728.0,750.0 C719.3,757.3 716.0,759.3 707.0,765.0 C698.0,770.7 684.8,779.0 674.0,784.0 C663.2,789.0 649.8,791.3 642.0,795.0 C634.2,798.7 632.0,808.5 627.0,806.0 C622.0,803.5 616.2,791.5 612.0,780.0 C607.8,768.5 599.8,748.0 602.0,737.0Z" fill="url(#red1)" stroke="#6e0c06" stroke-width="1.2" />
<path d="M688.0,697.0 C688.3,700.8 688.0,712.0 690.0,720.0 C692.0,728.0 696.3,738.3 700.0,745.0 C703.7,751.7 710.0,757.5 712.0,760.0" fill="none" stroke="#f0b090" stroke-width="1.3" stroke-linecap="round"/>
<path d="M604.0,740.0 C605.8,745.0 611.0,759.5 615.0,770.0 C619.0,780.5 625.8,797.5 628.0,803.0" fill="none" stroke="#f0b090" stroke-width="1.3" stroke-linecap="round"/>
<path d="M580.0,760.0 C581.7,764.2 588.3,780.8 590.0,785.0" fill="none" stroke="#ffd9c8" stroke-width="2" stroke-linecap="round" opacity="0.8"/>
<path d="M565.0,772.0 C566.2,775.8 570.8,791.2 572.0,795.0" fill="none" stroke="#ffd9c8" stroke-width="2" stroke-linecap="round" opacity="0.7"/>
<path d="M700.0,715.0 C702.5,713.8 710.0,708.8 715.0,708.0 C720.0,707.2 727.5,709.7 730.0,710.0" fill="none" stroke="#ffd9c8" stroke-width="4" stroke-linecap="round" opacity="0.35"/>
<path d="M625.0,805.0 C627.5,807.8 635.5,817.2 640.0,822.0 C644.5,826.8 650.0,832.0 652.0,834.0" fill="none" stroke="#a3140c" stroke-width="3" stroke-linecap="round"/>
<path d="M452.0,548.0 C450.0,552.5 441.2,565.5 440.0,575.0 C438.8,584.5 441.3,596.5 445.0,605.0 C448.7,613.5 459.2,622.5 462.0,626.0" fill="none" stroke="#7a0c06" stroke-width="1.4" stroke-linecap="round" opacity="0.8"/>
<path d="M425.0,552.0 C422.8,556.7 413.2,570.3 412.0,580.0 C410.8,589.7 414.7,601.3 418.0,610.0 C421.3,618.7 429.7,628.3 432.0,632.0" fill="none" stroke="#7a0c06" stroke-width="1.4" stroke-linecap="round" opacity="0.8"/>
<path d="M400.0,560.0 C398.3,564.2 390.8,576.3 390.0,585.0 C389.2,593.7 394.2,607.5 395.0,612.0" fill="none" stroke="#7a0c06" stroke-width="1.4" stroke-linecap="round" opacity="0.8"/>
<path d="M446.0,560.0 C444.7,563.3 438.7,573.3 438.0,580.0 C437.3,586.7 441.3,596.7 442.0,600.0" fill="none" stroke="#ffd9c8" stroke-width="2" stroke-linecap="round" opacity="0.6"/>
<path d="M418.0,565.0 C416.7,568.8 410.7,581.2 410.0,588.0 C409.3,594.8 413.3,603.0 414.0,606.0" fill="none" stroke="#ffd9c8" stroke-width="2" stroke-linecap="round" opacity="0.5"/>
<path d="M492.0,645.0 C490.0,650.0 481.3,665.0 480.0,675.0 C478.7,685.0 481.7,697.2 484.0,705.0 C486.3,712.8 492.3,719.2 494.0,722.0" fill="none" stroke="#7a0c06" stroke-width="1.4" stroke-linecap="round" opacity="0.8"/>
<path d="M468.0,652.0 C465.8,656.7 456.3,670.3 455.0,680.0 C453.7,689.7 457.2,701.7 460.0,710.0 C462.8,718.3 470.0,726.7 472.0,730.0" fill="none" stroke="#7a0c06" stroke-width="1.4" stroke-linecap="round" opacity="0.8"/>
<path d="M446.0,665.0 C444.3,669.2 436.7,681.7 436.0,690.0 C435.3,698.3 441.0,710.8 442.0,715.0" fill="none" stroke="#7a0c06" stroke-width="1.4" stroke-linecap="round" opacity="0.8"/>
<path d="M484.0,660.0 C482.7,664.2 476.7,678.3 476.0,685.0 C475.3,691.7 479.3,697.5 480.0,700.0" fill="none" stroke="#ffd9c8" stroke-width="2" stroke-linecap="round" opacity="0.6"/>
<path d="M461.0,668.0 C459.5,671.7 452.8,683.7 452.0,690.0 C451.2,696.3 455.3,703.3 456.0,706.0" fill="none" stroke="#ffd9c8" stroke-width="2" stroke-linecap="round" opacity="0.5"/>
<path d="M600.0,742.0 C598.7,746.7 592.0,760.7 592.0,770.0 C592.0,779.3 596.7,791.0 600.0,798.0 C603.3,805.0 610.0,809.7 612.0,812.0" fill="none" stroke="#7a0c06" stroke-width="1.4" stroke-linecap="round" opacity="0.8"/>
<path d="M578.0,748.0 C576.3,753.0 568.3,768.3 568.0,778.0 C567.7,787.7 572.7,799.0 576.0,806.0 C579.3,813.0 586.0,817.7 588.0,820.0" fill="none" stroke="#7a0c06" stroke-width="1.4" stroke-linecap="round" opacity="0.8"/>
<path d="M556.0,760.0 C554.3,764.7 546.7,779.3 546.0,788.0 C545.3,796.7 551.0,808.0 552.0,812.0" fill="none" stroke="#7a0c06" stroke-width="1.4" stroke-linecap="round" opacity="0.8"/>
<path d="M470.0,508.0 C471.7,513.3 475.3,528.8 480.0,540.0 C484.7,551.2 495.0,569.2 498.0,575.0" fill="none" stroke="#7a0c06" stroke-width="1.2" stroke-linecap="round" opacity="0.8"/>
<path d="M495.0,496.0 C497.2,501.7 503.2,518.3 508.0,530.0 C512.8,541.7 521.3,560.0 524.0,566.0" fill="none" stroke="#7a0c06" stroke-width="1.2" stroke-linecap="round" opacity="0.8"/>
<path d="M520.0,616.0 C521.3,621.7 524.7,636.0 528.0,650.0 C531.3,664.0 538.0,691.7 540.0,700.0" fill="none" stroke="#7a0c06" stroke-width="1.2" stroke-linecap="round" opacity="0.8"/>
<path d="M545.0,608.0 C546.3,613.3 549.5,626.3 553.0,640.0 C556.5,653.7 563.8,681.7 566.0,690.0" fill="none" stroke="#7a0c06" stroke-width="1.2" stroke-linecap="round" opacity="0.8"/>
<path d="M628.0,714.0 C629.7,720.0 633.7,737.3 638.0,750.0 C642.3,762.7 651.3,783.3 654.0,790.0" fill="none" stroke="#7a0c06" stroke-width="1.2" stroke-linecap="round" opacity="0.8"/>
<path d="M655.0,704.0 C656.7,710.0 660.5,727.3 665.0,740.0 C669.5,752.7 679.2,773.3 682.0,780.0" fill="none" stroke="#7a0c06" stroke-width="1.2" stroke-linecap="round" opacity="0.8"/>
<path d="M470.0,580.0 C475.8,581.3 494.2,589.7 505.0,588.0 C515.8,586.3 525.0,577.2 535.0,570.0 C545.0,562.8 554.2,552.2 565.0,545.0 C575.8,537.8 594.2,530.0 600.0,527.0" fill="none" stroke="#5e0804" stroke-width="6" opacity="0.35" stroke-linecap="round" filter="url(#b2)"/>
<path d="M512.0,716.0 C517.5,715.7 533.3,717.7 545.0,714.0 C556.7,710.3 572.5,701.7 582.0,694.0 C591.5,686.3 594.0,674.2 602.0,668.0 C610.0,661.8 625.3,658.8 630.0,657.0" fill="none" stroke="#5e0804" stroke-width="6" opacity="0.35" stroke-linecap="round" filter="url(#b2)"/>
<path d="M632.0,802.0 C639.3,799.0 663.0,790.3 676.0,784.0 C689.0,777.7 700.7,770.0 710.0,764.0 C719.3,758.0 723.7,755.0 732.0,748.0 C740.3,741.0 755.3,726.3 760.0,722.0" fill="none" stroke="#5e0804" stroke-width="6" opacity="0.35" stroke-linecap="round" filter="url(#b2)"/>
<ellipse cx="560" cy="505" rx="22" ry="9" transform="rotate(-15 560 505)" fill="#f08a5c" opacity="0.35" filter="url(#b2)"/>
<ellipse cx="500" cy="530" rx="20" ry="9" transform="rotate(-25 500 530)" fill="#f08a5c" opacity="0.35" filter="url(#b2)"/>
<ellipse cx="640" cy="625" rx="20" ry="8" transform="rotate(-15 640 625)" fill="#f08a5c" opacity="0.35" filter="url(#b2)"/>
<ellipse cx="560" cy="655" rx="22" ry="9" transform="rotate(-20 560 655)" fill="#f08a5c" opacity="0.35" filter="url(#b2)"/>
<ellipse cx="725" cy="715" rx="22" ry="9" transform="rotate(-15 725 715)" fill="#f08a5c" opacity="0.35" filter="url(#b2)"/>
<ellipse cx="655" cy="745" rx="24" ry="10" transform="rotate(-22 655 745)" fill="#f08a5c" opacity="0.35" filter="url(#b2)"/>
<ellipse cx="410" cy="590" rx="12" ry="18" transform="rotate(10 410 590)" fill="#f08a5c" opacity="0.35" filter="url(#b2)"/>
<ellipse cx="455" cy="690" rx="11" ry="17" transform="rotate(10 455 690)" fill="#f08a5c" opacity="0.35" filter="url(#b2)"/>
<ellipse cx="560" cy="790" rx="12" ry="18" transform="rotate(10 560 790)" fill="#f08a5c" opacity="0.35" filter="url(#b2)"/>
<path d="M672.0,452.0 C676.7,453.7 690.3,457.7 700.0,462.0 C709.7,466.3 720.7,473.5 730.0,478.0 C739.3,482.5 751.7,487.2 756.0,489.0" fill="none" stroke="#5e0804" stroke-width="1.2" stroke-linecap="round" opacity="0.8"/>
<path d="M668.0,510.0 C672.5,509.0 686.3,506.3 695.0,504.0 C703.7,501.7 713.5,498.2 720.0,496.0 C726.5,493.8 731.7,491.8 734.0,491.0" fill="none" stroke="#5e0804" stroke-width="1.1" stroke-linecap="round" opacity="0.7"/>
<path d="M806.0,640.0 C810.8,639.0 825.7,635.3 835.0,634.0 C844.3,632.7 854.0,632.3 862.0,632.0 C870.0,631.7 879.5,632.0 883.0,632.0" fill="none" stroke="#5e0804" stroke-width="1.2" stroke-linecap="round" opacity="0.8"/>
<path d="M842.0,700.0 C844.3,697.7 851.0,690.0 856.0,686.0 C861.0,682.0 867.0,678.7 872.0,676.0 C877.0,673.3 883.7,671.0 886.0,670.0" fill="none" stroke="#5e0804" stroke-width="1.2" stroke-linecap="round" opacity="0.7"/>
<path d="M640.0,440.0 C643.7,439.7 654.7,437.0 662.0,438.0 C669.3,439.0 680.3,444.7 684.0,446.0" fill="none" stroke="#ffd9c8" stroke-width="2.5" stroke-linecap="round" opacity="0.45"/>
<path d="M800.0,632.0 C804.2,631.0 816.7,627.0 825.0,626.0 C833.3,625.0 845.8,626.0 850.0,626.0" fill="none" stroke="#ffd9c8" stroke-width="2.5" stroke-linecap="round" opacity="0.45"/>
<path d="M845.0,690.0 C847.2,688.0 853.5,681.0 858.0,678.0 C862.5,675.0 869.7,673.0 872.0,672.0" fill="none" stroke="#ffd9c8" stroke-width="2.5" stroke-linecap="round" opacity="0.4"/>
<rect x="671.5" y="418.5" width="11.0" height="17.0" rx="2.5" fill="url(#on)" stroke="#2b7a1a" stroke-width="0.8" transform="rotate(8 677.0 427.0)"/>
<rect x="523.5" y="458.5" width="13.0" height="9.0" rx="2.5" fill="url(#on)" stroke="#2b7a1a" stroke-width="0.8" transform="rotate(-10 530.0 463.0)"/>
<rect x="530.5" y="466.5" width="15.0" height="9.0" rx="2.5" fill="url(#on)" stroke="#2b7a1a" stroke-width="0.8" transform="rotate(5 538.0 471.0)"/>
<rect x="779.5" y="477.5" width="11.0" height="19.0" rx="2.5" fill="url(#on)" stroke="#2b7a1a" stroke-width="0.8" transform="rotate(5 785.0 487.0)"/>
<rect x="805.0" y="470.0" width="12.0" height="16.0" rx="2.5" fill="url(#on)" stroke="#2b7a1a" stroke-width="0.8" transform="rotate(-20 811.0 478.0)"/>
<rect x="673.5" y="534.0" width="7.0" height="12.0" rx="2.5" fill="url(#on)" stroke="#2b7a1a" stroke-width="0.8" transform="rotate(0 677.0 540.0)"/>
<rect x="797.5" y="595.5" width="9.0" height="17.0" rx="2.5" fill="url(#on)" stroke="#2b7a1a" stroke-width="0.8" transform="rotate(-12 802.0 604.0)"/>
<rect x="502.5" y="757.0" width="13.0" height="10.0" rx="2.5" fill="url(#on)" stroke="#2b7a1a" stroke-width="0.8" transform="rotate(-20 509.0 762.0)"/>
<rect x="510.0" y="767.5" width="16.0" height="13.0" rx="2.5" fill="url(#on)" stroke="#2b7a1a" stroke-width="0.8" transform="rotate(-35 518.0 774.0)"/>
<rect x="743.5" y="789.5" width="11.0" height="17.0" rx="2.5" fill="url(#on)" stroke="#2b7a1a" stroke-width="0.8" transform="rotate(10 749.0 798.0)"/>
<rect x="674.5" y="834.0" width="13.0" height="12.0" rx="2.5" fill="url(#on)" stroke="#2b7a1a" stroke-width="0.8" transform="rotate(5 681.0 840.0)"/>
<rect x="690.0" y="835.5" width="14.0" height="11.0" rx="2.5" fill="url(#on)" stroke="#2b7a1a" stroke-width="0.8" transform="rotate(5 697.0 841.0)"/>
</g>
<g>
<clipPath id="rclip"><rect x="206" y="356" width="228" height="197" rx="9"/></clipPath>
<g clip-path="url(#rclip)"><g>
<rect x="206" y="355" width="228" height="198" fill="#6e6f72"/>
<ellipse cx="322" cy="398" rx="176" ry="164" fill="#d9e2ee"/>
<ellipse cx="322" cy="396" rx="173" ry="161" fill="#1a1a1d"/>
<ellipse cx="322" cy="410" rx="150" ry="128" fill="#0b0b0d"/>
<circle cx="348.2" cy="370.6" r="0.4" fill="#777" opacity="0.6"/>
<circle cx="260.5" cy="549.2" r="0.6" fill="#777" opacity="0.6"/>
<circle cx="358.4" cy="370.3" r="0.8" fill="#777" opacity="0.6"/>
<circle cx="214.9" cy="524.2" r="0.6" fill="#777" opacity="0.6"/>
<circle cx="369.0" cy="526.7" r="0.8" fill="#777" opacity="0.6"/>
<circle cx="414.3" cy="433.8" r="0.8" fill="#777" opacity="0.6"/>
<circle cx="307.6" cy="537.6" r="0.8" fill="#777" opacity="0.6"/>
<circle cx="229.8" cy="384.1" r="0.5" fill="#777" opacity="0.6"/>
<circle cx="424.3" cy="441.7" r="0.7" fill="#777" opacity="0.6"/>
<circle cx="410.5" cy="488.9" r="0.9" fill="#777" opacity="0.6"/>
<circle cx="399.8" cy="548.3" r="0.7" fill="#777" opacity="0.6"/>
<circle cx="424.1" cy="531.7" r="0.7" fill="#777" opacity="0.6"/>
<circle cx="271.8" cy="370.2" r="0.8" fill="#777" opacity="0.6"/>
<circle cx="429.7" cy="375.0" r="0.8" fill="#777" opacity="0.6"/>
<circle cx="403.5" cy="366.5" r="0.7" fill="#777" opacity="0.6"/>
<circle cx="218.1" cy="495.9" r="0.6" fill="#777" opacity="0.6"/>
<circle cx="405.3" cy="546.3" r="0.7" fill="#777" opacity="0.6"/>
<circle cx="431.7" cy="417.5" r="0.4" fill="#777" opacity="0.6"/>
<circle cx="342.3" cy="364.0" r="0.5" fill="#777" opacity="0.6"/>
<circle cx="243.0" cy="366.1" r="0.8" fill="#777" opacity="0.6"/>
<circle cx="278.3" cy="542.1" r="0.8" fill="#777" opacity="0.6"/>
<circle cx="346.9" cy="538.6" r="0.7" fill="#777" opacity="0.6"/>
<circle cx="427.0" cy="458.1" r="0.7" fill="#777" opacity="0.6"/>
<circle cx="210.6" cy="437.7" r="0.7" fill="#777" opacity="0.6"/>
<circle cx="212.5" cy="476.2" r="0.7" fill="#777" opacity="0.6"/>
<circle cx="221.5" cy="478.4" r="0.6" fill="#777" opacity="0.6"/>
<circle cx="213.0" cy="369.6" r="0.7" fill="#777" opacity="0.6"/>
<circle cx="423.8" cy="406.2" r="0.6" fill="#777" opacity="0.6"/>
<circle cx="381.0" cy="363.2" r="0.7" fill="#777" opacity="0.6"/>
<circle cx="353.7" cy="527.9" r="0.6" fill="#777" opacity="0.6"/>
<g filter="url(#b1)">
<path d="M240.0,420.0 C250.0,404.2 280.0,398.3 300.0,395.0 C320.0,391.7 341.7,395.8 360.0,400.0 C378.3,404.2 400.0,408.3 410.0,420.0 C420.0,431.7 425.0,456.7 420.0,470.0 C415.0,483.3 395.0,491.7 380.0,500.0 C365.0,508.3 346.7,516.7 330.0,520.0 C313.3,523.3 295.0,525.0 280.0,520.0 C265.0,515.0 246.7,506.7 240.0,490.0 C233.3,473.3 230.0,435.8 240.0,420.0Z" fill="#8e0c0a" filter="url(#b2)"/>
<path d="M368.0,372.0 C370.3,371.7 377.0,368.3 382.0,370.0 C387.0,371.7 393.7,377.3 398.0,382.0 C402.3,386.7 406.0,393.0 408.0,398.0 C410.0,403.0 409.7,409.7 410.0,412.0" fill="none" stroke="#a5661e" stroke-width="7.5" stroke-linecap="round"/>
<path d="M368.0,372.0 C370.3,371.7 377.0,368.3 382.0,370.0 C387.0,371.7 393.7,377.3 398.0,382.0 C402.3,386.7 406.0,393.0 408.0,398.0 C410.0,403.0 409.7,409.7 410.0,412.0" fill="none" stroke="#e6b860" stroke-width="6.0" stroke-linecap="round"/>
<path d="M368.0,372.0 C370.3,371.7 377.0,368.3 382.0,370.0 C387.0,371.7 393.7,377.3 398.0,382.0 C402.3,386.7 406.0,393.0 408.0,398.0 C410.0,403.0 409.7,409.7 410.0,412.0" fill="none" stroke="#f7e2a4" stroke-width="2.4" stroke-linecap="round"/>
<path d="M355.0,385.0 C357.8,383.8 365.8,377.8 372.0,378.0 C378.2,378.2 387.0,382.3 392.0,386.0 C397.0,389.7 401.0,395.7 402.0,400.0 C403.0,404.3 398.7,410.0 398.0,412.0" fill="none" stroke="#a5661e" stroke-width="7.5" stroke-linecap="round"/>
<path d="M355.0,385.0 C357.8,383.8 365.8,377.8 372.0,378.0 C378.2,378.2 387.0,382.3 392.0,386.0 C397.0,389.7 401.0,395.7 402.0,400.0 C403.0,404.3 398.7,410.0 398.0,412.0" fill="none" stroke="#e6b860" stroke-width="6.0" stroke-linecap="round"/>
<path d="M355.0,385.0 C357.8,383.8 365.8,377.8 372.0,378.0 C378.2,378.2 387.0,382.3 392.0,386.0 C397.0,389.7 401.0,395.7 402.0,400.0 C403.0,404.3 398.7,410.0 398.0,412.0" fill="none" stroke="#f7e2a4" stroke-width="2.4" stroke-linecap="round"/>
<path d="M345.0,400.0 C347.8,398.7 355.5,392.3 362.0,392.0 C368.5,391.7 379.0,395.0 384.0,398.0 C389.0,401.0 392.3,406.3 392.0,410.0 C391.7,413.7 383.7,418.3 382.0,420.0" fill="none" stroke="#a5661e" stroke-width="7.5" stroke-linecap="round"/>
<path d="M345.0,400.0 C347.8,398.7 355.5,392.3 362.0,392.0 C368.5,391.7 379.0,395.0 384.0,398.0 C389.0,401.0 392.3,406.3 392.0,410.0 C391.7,413.7 383.7,418.3 382.0,420.0" fill="none" stroke="#e6b860" stroke-width="6.0" stroke-linecap="round"/>
<path d="M345.0,400.0 C347.8,398.7 355.5,392.3 362.0,392.0 C368.5,391.7 379.0,395.0 384.0,398.0 C389.0,401.0 392.3,406.3 392.0,410.0 C391.7,413.7 383.7,418.3 382.0,420.0" fill="none" stroke="#f7e2a4" stroke-width="2.4" stroke-linecap="round"/>
<path d="M352.0,415.0 C354.3,415.5 362.7,415.5 366.0,418.0 C369.3,420.5 372.0,426.0 372.0,430.0 C372.0,434.0 367.0,440.0 366.0,442.0" fill="none" stroke="#a5661e" stroke-width="7.5" stroke-linecap="round"/>
<path d="M352.0,415.0 C354.3,415.5 362.7,415.5 366.0,418.0 C369.3,420.5 372.0,426.0 372.0,430.0 C372.0,434.0 367.0,440.0 366.0,442.0" fill="none" stroke="#e6b860" stroke-width="6.0" stroke-linecap="round"/>
<path d="M352.0,415.0 C354.3,415.5 362.7,415.5 366.0,418.0 C369.3,420.5 372.0,426.0 372.0,430.0 C372.0,434.0 367.0,440.0 366.0,442.0" fill="none" stroke="#f7e2a4" stroke-width="2.4" stroke-linecap="round"/>
<path d="M305.0,405.0 C307.2,403.8 314.5,398.2 318.0,398.0 C321.5,397.8 324.7,403.0 326.0,404.0" fill="none" stroke="#a5661e" stroke-width="7.5" stroke-linecap="round"/>
<path d="M305.0,405.0 C307.2,403.8 314.5,398.2 318.0,398.0 C321.5,397.8 324.7,403.0 326.0,404.0" fill="none" stroke="#e6b860" stroke-width="6.0" stroke-linecap="round"/>
<path d="M305.0,405.0 C307.2,403.8 314.5,398.2 318.0,398.0 C321.5,397.8 324.7,403.0 326.0,404.0" fill="none" stroke="#f7e2a4" stroke-width="2.4" stroke-linecap="round"/>
<path d="M338.0,455.0 C340.3,453.8 347.3,448.0 352.0,448.0 C356.7,448.0 363.7,453.8 366.0,455.0" fill="none" stroke="#a5661e" stroke-width="7.5" stroke-linecap="round"/>
<path d="M338.0,455.0 C340.3,453.8 347.3,448.0 352.0,448.0 C356.7,448.0 363.7,453.8 366.0,455.0" fill="none" stroke="#e6b860" stroke-width="6.0" stroke-linecap="round"/>
<path d="M338.0,455.0 C340.3,453.8 347.3,448.0 352.0,448.0 C356.7,448.0 363.7,453.8 366.0,455.0" fill="none" stroke="#f7e2a4" stroke-width="2.4" stroke-linecap="round"/>
<path d="M320.0,470.0 C322.7,468.7 331.0,462.7 336.0,462.0 C341.0,461.3 347.7,465.3 350.0,466.0" fill="none" stroke="#a5661e" stroke-width="6.5" stroke-linecap="round"/>
<path d="M320.0,470.0 C322.7,468.7 331.0,462.7 336.0,462.0 C341.0,461.3 347.7,465.3 350.0,466.0" fill="none" stroke="#e6b860" stroke-width="5.0" stroke-linecap="round"/>
<path d="M320.0,470.0 C322.7,468.7 331.0,462.7 336.0,462.0 C341.0,461.3 347.7,465.3 350.0,466.0" fill="none" stroke="#f7e2a4" stroke-width="2.0" stroke-linecap="round"/>
<path d="M376.0,388.0 C379.3,388.7 390.0,389.3 396.0,392.0 C402.0,394.7 408.7,399.7 412.0,404.0 C415.3,408.3 415.3,415.7 416.0,418.0" fill="none" stroke="#a5661e" stroke-width="7.5" stroke-linecap="round"/>
<path d="M376.0,388.0 C379.3,388.7 390.0,389.3 396.0,392.0 C402.0,394.7 408.7,399.7 412.0,404.0 C415.3,408.3 415.3,415.7 416.0,418.0" fill="none" stroke="#e6b860" stroke-width="6.0" stroke-linecap="round"/>
<path d="M376.0,388.0 C379.3,388.7 390.0,389.3 396.0,392.0 C402.0,394.7 408.7,399.7 412.0,404.0 C415.3,408.3 415.3,415.7 416.0,418.0" fill="none" stroke="#f7e2a4" stroke-width="2.4" stroke-linecap="round"/>
<path d="M300.0,398.0 C302.0,397.0 308.3,392.3 312.0,392.0 C315.7,391.7 321.0,393.3 322.0,396.0 C323.0,398.7 318.7,406.0 318.0,408.0" fill="none" stroke="#a5661e" stroke-width="6.5" stroke-linecap="round"/>
<path d="M300.0,398.0 C302.0,397.0 308.3,392.3 312.0,392.0 C315.7,391.7 321.0,393.3 322.0,396.0 C323.0,398.7 318.7,406.0 318.0,408.0" fill="none" stroke="#e6b860" stroke-width="5.0" stroke-linecap="round"/>
<path d="M300.0,398.0 C302.0,397.0 308.3,392.3 312.0,392.0 C315.7,391.7 321.0,393.3 322.0,396.0 C323.0,398.7 318.7,406.0 318.0,408.0" fill="none" stroke="#f7e2a4" stroke-width="2.0" stroke-linecap="round"/>
<path d="M330.0,420.0 C332.5,420.8 341.3,422.2 345.0,425.0 C348.7,427.8 350.8,435.0 352.0,437.0" fill="none" stroke="#a5661e" stroke-width="7.5" stroke-linecap="round"/>
<path d="M330.0,420.0 C332.5,420.8 341.3,422.2 345.0,425.0 C348.7,427.8 350.8,435.0 352.0,437.0" fill="none" stroke="#e6b860" stroke-width="6.0" stroke-linecap="round"/>
<path d="M330.0,420.0 C332.5,420.8 341.3,422.2 345.0,425.0 C348.7,427.8 350.8,435.0 352.0,437.0" fill="none" stroke="#f7e2a4" stroke-width="2.4" stroke-linecap="round"/>
<path d="M208.0,442.0 C210.0,443.7 215.3,448.8 220.0,452.0 C224.7,455.2 233.3,459.5 236.0,461.0" fill="none" stroke="#a5661e" stroke-width="8.0" stroke-linecap="round"/>
<path d="M208.0,442.0 C210.0,443.7 215.3,448.8 220.0,452.0 C224.7,455.2 233.3,459.5 236.0,461.0" fill="none" stroke="#e6b860" stroke-width="6.5" stroke-linecap="round"/>
<path d="M208.0,442.0 C210.0,443.7 215.3,448.8 220.0,452.0 C224.7,455.2 233.3,459.5 236.0,461.0" fill="none" stroke="#f7e2a4" stroke-width="2.6" stroke-linecap="round"/>
<path d="M400.0,440.0 C401.7,442.5 408.0,450.0 410.0,455.0 C412.0,460.0 412.8,465.8 412.0,470.0 C411.2,474.2 406.2,478.3 405.0,480.0" fill="none" stroke="#a5661e" stroke-width="7.5" stroke-linecap="round"/>
<path d="M400.0,440.0 C401.7,442.5 408.0,450.0 410.0,455.0 C412.0,460.0 412.8,465.8 412.0,470.0 C411.2,474.2 406.2,478.3 405.0,480.0" fill="none" stroke="#e6b860" stroke-width="6.0" stroke-linecap="round"/>
<path d="M400.0,440.0 C401.7,442.5 408.0,450.0 410.0,455.0 C412.0,460.0 412.8,465.8 412.0,470.0 C411.2,474.2 406.2,478.3 405.0,480.0" fill="none" stroke="#f7e2a4" stroke-width="2.4" stroke-linecap="round"/>
<path d="M372.0,505.0 C373.7,503.7 378.7,497.5 382.0,497.0 C385.3,496.5 390.0,499.2 392.0,502.0 C394.0,504.8 395.3,510.3 394.0,514.0 C392.7,517.7 388.3,522.7 384.0,524.0 C379.7,525.3 372.3,523.7 368.0,522.0 C363.7,520.3 359.0,517.0 358.0,514.0 C357.0,511.0 359.7,506.3 362.0,504.0 C364.3,501.7 370.3,500.7 372.0,500.0" fill="none" stroke="#a5661e" stroke-width="8.0" stroke-linecap="round"/>
<path d="M372.0,505.0 C373.7,503.7 378.7,497.5 382.0,497.0 C385.3,496.5 390.0,499.2 392.0,502.0 C394.0,504.8 395.3,510.3 394.0,514.0 C392.7,517.7 388.3,522.7 384.0,524.0 C379.7,525.3 372.3,523.7 368.0,522.0 C363.7,520.3 359.0,517.0 358.0,514.0 C357.0,511.0 359.7,506.3 362.0,504.0 C364.3,501.7 370.3,500.7 372.0,500.0" fill="none" stroke="#e6b860" stroke-width="6.5" stroke-linecap="round"/>
<path d="M372.0,505.0 C373.7,503.7 378.7,497.5 382.0,497.0 C385.3,496.5 390.0,499.2 392.0,502.0 C394.0,504.8 395.3,510.3 394.0,514.0 C392.7,517.7 388.3,522.7 384.0,524.0 C379.7,525.3 372.3,523.7 368.0,522.0 C363.7,520.3 359.0,517.0 358.0,514.0 C357.0,511.0 359.7,506.3 362.0,504.0 C364.3,501.7 370.3,500.7 372.0,500.0" fill="none" stroke="#f7e2a4" stroke-width="2.6" stroke-linecap="round"/>
<path d="M385.0,490.0 C387.2,488.3 394.5,480.3 398.0,480.0 C401.5,479.7 405.3,484.7 406.0,488.0 C406.7,491.3 402.7,498.0 402.0,500.0" fill="none" stroke="#a5661e" stroke-width="7.5" stroke-linecap="round"/>
<path d="M385.0,490.0 C387.2,488.3 394.5,480.3 398.0,480.0 C401.5,479.7 405.3,484.7 406.0,488.0 C406.7,491.3 402.7,498.0 402.0,500.0" fill="none" stroke="#e6b860" stroke-width="6.0" stroke-linecap="round"/>
<path d="M385.0,490.0 C387.2,488.3 394.5,480.3 398.0,480.0 C401.5,479.7 405.3,484.7 406.0,488.0 C406.7,491.3 402.7,498.0 402.0,500.0" fill="none" stroke="#f7e2a4" stroke-width="2.4" stroke-linecap="round"/>
<path d="M352,418 Q342,440 330,462" stroke="#efe6c0" stroke-width="6" fill="none" stroke-linecap="round" opacity="0.9"/>
<defs><radialGradient id="pr" cx="0.45" cy="0.35" r="0.75"><stop offset="0" stop-color="#e02e24"/><stop offset="0.5" stop-color="#bc100e"/><stop offset="1" stop-color="#620505"/></radialGradient></defs>
<path d="M368.0,432.0 C368.7,427.3 381.0,424.3 388.0,422.0 C395.0,419.7 404.0,417.0 410.0,418.0 C416.0,419.0 421.3,423.0 424.0,428.0 C426.7,433.0 427.0,441.0 426.0,448.0 C425.0,455.0 421.7,463.3 418.0,470.0 C414.3,476.7 409.0,483.7 404.0,488.0 C399.0,492.3 393.3,495.3 388.0,496.0 C382.7,496.7 373.7,496.3 372.0,492.0 C370.3,487.7 376.0,477.0 378.0,470.0 C380.0,463.0 385.7,456.3 384.0,450.0 C382.3,443.7 367.3,436.7 368.0,432.0Z" fill="url(#pr)" stroke="#6c0605" stroke-width="0.8"/>
<path d="M277.0,380.0 C278.0,375.7 285.5,369.3 292.0,366.0 C298.5,362.7 308.0,360.3 316.0,360.0 C324.0,359.7 333.0,362.0 340.0,364.0 C347.0,366.0 353.7,369.0 358.0,372.0 C362.3,375.0 367.0,379.0 366.0,382.0 C365.0,385.0 358.0,388.3 352.0,390.0 C346.0,391.7 337.8,391.3 330.0,392.0 C322.2,392.7 312.3,394.0 305.0,394.0 C297.7,394.0 290.7,394.3 286.0,392.0 C281.3,389.7 276.0,384.3 277.0,380.0Z" fill="url(#pr)" stroke="#6c0605" stroke-width="0.8"/>
<path d="M213.0,425.0 C214.0,418.3 218.2,412.8 224.0,408.0 C229.8,403.2 238.7,399.0 248.0,396.0 C257.3,393.0 270.3,390.7 280.0,390.0 C289.7,389.3 299.7,390.0 306.0,392.0 C312.3,394.0 317.0,397.7 318.0,402.0 C319.0,406.3 316.7,413.3 312.0,418.0 C307.3,422.7 298.3,426.0 290.0,430.0 C281.7,434.0 270.7,438.3 262.0,442.0 C253.3,445.7 245.3,451.0 238.0,452.0 C230.7,453.0 222.2,452.5 218.0,448.0 C213.8,443.5 212.0,431.7 213.0,425.0Z" fill="url(#pr)" stroke="#6c0605" stroke-width="0.8"/>
<path d="M230.0,478.0 C231.0,472.0 234.7,462.3 240.0,456.0 C245.3,449.7 253.3,444.7 262.0,440.0 C270.7,435.3 282.7,430.7 292.0,428.0 C301.3,425.3 311.3,423.0 318.0,424.0 C324.7,425.0 330.7,429.3 332.0,434.0 C333.3,438.7 330.7,446.0 326.0,452.0 C321.3,458.0 312.3,464.3 304.0,470.0 C295.7,475.7 285.0,481.7 276.0,486.0 C267.0,490.3 257.0,495.0 250.0,496.0 C243.0,497.0 237.3,495.0 234.0,492.0 C230.7,489.0 229.0,484.0 230.0,478.0Z" fill="url(#pr)" stroke="#6c0605" stroke-width="0.8"/>
<path d="M268.0,515.0 C269.0,509.7 273.0,501.5 278.0,496.0 C283.0,490.5 290.0,486.3 298.0,482.0 C306.0,477.7 317.0,473.0 326.0,470.0 C335.0,467.0 345.3,463.3 352.0,464.0 C358.7,464.7 364.7,469.0 366.0,474.0 C367.3,479.0 364.3,487.7 360.0,494.0 C355.7,500.3 348.0,506.7 340.0,512.0 C332.0,517.3 321.0,522.7 312.0,526.0 C303.0,529.3 292.7,531.7 286.0,532.0 C279.3,532.3 275.0,530.8 272.0,528.0 C269.0,525.2 267.0,520.3 268.0,515.0Z" fill="url(#pr)" stroke="#6c0605" stroke-width="0.8"/>
<path d="M232,412 q8,18 2,36 M248,402 q10,20 4,40 M266,396 q10,18 6,38 M250,452 q8,18 2,38 M268,440 q10,20 4,42 M288,430 q10,18 6,40 M290,490 q8,18 2,36 M310,478 q10,20 4,42 M330,470 q8,18 6,36" stroke="#7a0806" stroke-width="1" fill="none" opacity="0.7"/>
<path d="M318,430 Q350,420 372,400 M322,440 Q360,445 392,430 M350,470 Q375,455 395,440 M366,480 Q372,500 368,520" stroke="#b0100c" stroke-width="1.4" fill="none"/>
<path d="M232,415 q30,-14 62,-16 M248,462 q30,-22 66,-28 M288,500 q30,-20 62,-24 M292,372 q25,-6 48,0" fill="none" stroke="#ff9a86" stroke-width="3.5" opacity="0.55" stroke-linecap="round"/>
<rect x="225.0" y="390.5" width="8" height="13" rx="2" fill="#86dc52" stroke="#3a8a20" stroke-width="0.7" transform="rotate(55 229 397)"/>
<rect x="358.0" y="388.0" width="10" height="14" rx="2" fill="#86dc52" stroke="#3a8a20" stroke-width="0.7" transform="rotate(15 363 395)"/>
<rect x="372.5" y="414.0" width="9" height="12" rx="2" fill="#86dc52" stroke="#3a8a20" stroke-width="0.7" transform="rotate(-30 377 420)"/>
<rect x="257.0" y="498.0" width="10" height="16" rx="2" fill="#86dc52" stroke="#3a8a20" stroke-width="0.7" transform="rotate(-50 262 506)"/>
<rect x="342.5" y="518.5" width="11" height="17" rx="2" fill="#86dc52" stroke="#3a8a20" stroke-width="0.7" transform="rotate(80 348 527)"/>
<rect x="369.5" y="501.5" width="11" height="13" rx="2" fill="#86dc52" stroke="#3a8a20" stroke-width="0.7" transform="rotate(70 375 508)"/>
<rect x="263.5" y="377.0" width="7" height="10" rx="2" fill="#86dc52" stroke="#3a8a20" stroke-width="0.7" transform="rotate(60 267 382)"/>
<rect x="326.0" y="530.0" width="8" height="14" rx="2" fill="#86dc52" stroke="#3a8a20" stroke-width="0.7" transform="rotate(85 330 537)"/>
</g>
<rect x="401" y="545" width="25" height="8" rx="4" fill="#f2f2f2"/>
</g></g></g>
<g>
<path d="M167,593 H192 Q196.5,593 196.5,597.5 V964.5 Q196.5,969 192,969 H167 Z" fill="#262626"/>
<defs><linearGradient id="sl1" x1="0" y1="0" x2="0" y2="1"><stop offset="0" stop-color="#2e2e2e"/><stop offset="1" stop-color="#424242"/></linearGradient></defs>
<rect x="171" y="597" width="23" height="123" rx="2" fill="url(#sl1)"/>
<rect x="171" y="679" width="23" height="11" rx="2" fill="#9c9c9c"/>
<rect x="175.5" y="744.5" width="13" height="13" rx="3" fill="none" stroke="#5c5c5c" stroke-width="1.2"/>
<rect x="171" y="783" width="23" height="124" rx="2" fill="#3f3f3f"/>
<rect x="171" y="783" width="23" height="11" rx="2" fill="#9c9c9c"/>
<path d="M178,925 h6 a3.5,3.5 0 0 1 0,7 h-5" stroke="#777" stroke-width="1.3" fill="none"/><path d="M179.5,922.5 l-3,2.5 l3,2.5z" fill="#777"/>
<path d="M186,953 h-6 a3.5,3.5 0 0 0 0,7 h5" stroke="#3c3c3c" stroke-width="1.3" fill="none"/>
</g>
<g>
<defs><linearGradient id="pg" x1="879" y1="0" x2="1170" y2="0" gradientUnits="userSpaceOnUse"><stop offset="0" stop-color="#323131"/><stop offset="0.5" stop-color="#302f2f"/><stop offset="0.78" stop-color="#252427"/><stop offset="1" stop-color="#1d1c1f"/></linearGradient></defs>
<path d="M879,1058 V370 Q879,358 891,358 H1093 L1106,346 H1170 V1058 Z" fill="url(#pg)"/>
<path d="M879,404 V370 Q879,358 891,358 H1093 L1100,352 V404 Z" fill="#fff" opacity="0.035"/>
<text x="897" y="391" font-size="18" fill="#dcdcdc" stroke="#dcdcdc" stroke-width="0.4">图层</text>
<path d="M1128,383.5 H1141 M1134.5,377 V390" stroke="#c8c8c8" stroke-width="1.4" fill="none"/>
<g clip-path="url(#vclip)">
<rect x="945" y="464" width="208" height="1" fill="#383737"/>
<rect x="886" y="412" width="50" height="54" rx="2" fill="#403e3e"/>
<text x="955" y="443.5" font-size="12.5" fill="#d0d0d0" stroke="#d0d0d0" stroke-width="0.3">Watercolor Texture</text>
<path d="M1106,433 l5,6 l-5,6" stroke="#8a8a8a" stroke-width="1.2" fill="none"/>
<rect x="1130" y="433" width="11" height="11" rx="1.5" fill="#c9c9c9"/>
<path d="M1132,438 l2.3,2.3 l3.8,-4.2" stroke="#2a2a2a" stroke-width="1.5" fill="none"/>
<rect x="945" y="520" width="208" height="1" fill="#383737"/>
<rect x="886" y="474" width="50" height="42" rx="2" fill="#403e3e"/>
<text x="955" y="499.5" font-size="13" fill="#d0d0d0" stroke="#d0d0d0" stroke-width="0.3">图层 6</text>
<text x="1107" y="498.0" font-size="8.5" font-weight="bold" fill="#a8a8a8">M</text>
<rect x="1130" y="489" width="11" height="11" rx="1.5" fill="#c9c9c9"/>
<path d="M1132,494 l2.3,2.3 l3.8,-4.2" stroke="#2a2a2a" stroke-width="1.5" fill="none"/>
<rect x="945" y="570" width="208" height="1" fill="#383737"/>
<rect x="886" y="524" width="50" height="42" rx="2" fill="#403e3e"/>
<text x="955" y="549.5" font-size="13" fill="#d0d0d0" stroke="#d0d0d0" stroke-width="0.3">图层 9</text>
<text x="1107" y="548.0" font-size="8.5" font-weight="bold" fill="#a8a8a8">N</text>
<rect x="1130" y="539" width="11" height="11" rx="1.5" fill="#c9c9c9"/>
<path d="M1132,544 l2.3,2.3 l3.8,-4.2" stroke="#2a2a2a" stroke-width="1.5" fill="none"/>
<rect x="882" y="570" width="275" height="50" fill="#1877ea"/>
<rect x="893" y="574" width="50" height="42" rx="2" fill="#2f2f2f"/>
<path d="M886,598 v-4 h3" stroke="#8a8a8a" stroke-width="1" fill="none"/>
<text x="963" y="599.5" font-size="13" fill="#e8f2ff" stroke="#e8f2ff" stroke-width="0.3">图层 20</text>
<text x="1107" y="598.0" font-size="8.5" font-weight="bold" fill="#d8e8ff">N</text>
<rect x="1131" y="589" width="11" height="11" rx="1.5" fill="#e8f0fa"/>
<path d="M1133,594 l2.3,2.3 l3.8,-4.2" stroke="#1877ea" stroke-width="1.5" fill="none"/>
<rect x="945" y="670" width="208" height="1" fill="#383737"/>
<rect x="893" y="624" width="50" height="42" rx="2" fill="#403e3e"/>
<path d="M886,648 v-4 h3" stroke="#8a8a8a" stroke-width="1" fill="none"/>
<text x="963" y="649.5" font-size="13" fill="#d0d0d0" stroke="#d0d0d0" stroke-width="0.3">图层 24</text>
<text x="1107" y="648.0" font-size="8.5" font-weight="bold" fill="#a8a8a8">N</text>
<rect x="1130" y="639" width="11" height="11" rx="1.5" fill="#c9c9c9"/>
<path d="M1132,644 l2.3,2.3 l3.8,-4.2" stroke="#2a2a2a" stroke-width="1.5" fill="none"/>
<rect x="945" y="720" width="208" height="1" fill="#383737"/>
<rect x="893" y="674" width="50" height="42" rx="2" fill="#403e3e"/>
<path d="M886,698 v-4 h3" stroke="#8a8a8a" stroke-width="1" fill="none"/>
<text x="963" y="699.5" font-size="13" fill="#d0d0d0" stroke="#d0d0d0" stroke-width="0.3">图层 23</text>
<text x="1107" y="698.0" font-size="8.5" font-weight="bold" fill="#a8a8a8">M</text>
<rect x="1130" y="689" width="11" height="11" rx="1.5" fill="#c9c9c9"/>
<path d="M1132,694 l2.3,2.3 l3.8,-4.2" stroke="#2a2a2a" stroke-width="1.5" fill="none"/>
<rect x="945" y="770" width="208" height="1" fill="#383737"/>
<rect x="893" y="724" width="50" height="42" rx="2" fill="#403e3e"/>
<path d="M886,748 v-4 h3" stroke="#8a8a8a" stroke-width="1" fill="none"/>
<text x="963" y="749.5" font-size="13" fill="#d0d0d0" stroke="#d0d0d0" stroke-width="0.3">图层 22</text>
<text x="1107" y="748.0" font-size="8.5" font-weight="bold" fill="#a8a8a8">M</text>
<rect x="1130" y="739" width="11" height="11" rx="1.5" fill="#c9c9c9"/>
<path d="M1132,744 l2.3,2.3 l3.8,-4.2" stroke="#2a2a2a" stroke-width="1.5" fill="none"/>
<rect x="945" y="820" width="208" height="1" fill="#383737"/>
<rect x="893" y="774" width="50" height="42" rx="2" fill="#403e3e"/>
<path d="M886,798 v-4 h3" stroke="#8a8a8a" stroke-width="1" fill="none"/>
<text x="963" y="799.5" font-size="13" fill="#d0d0d0" stroke="#d0d0d0" stroke-width="0.3">图层 25</text>
<text x="1107" y="798.0" font-size="8.5" font-weight="bold" fill="#a8a8a8">M</text>
<rect x="1130" y="789" width="11" height="11" rx="1.5" fill="#c9c9c9"/>
<path d="M1132,794 l2.3,2.3 l3.8,-4.2" stroke="#2a2a2a" stroke-width="1.5" fill="none"/>
<rect x="945" y="870" width="208" height="1" fill="#383737"/>
<rect x="893" y="824" width="50" height="42" rx="2" fill="#403e3e"/>
<path d="M886,848 v-4 h3" stroke="#8a8a8a" stroke-width="1" fill="none"/>
<text x="963" y="849.5" font-size="13" fill="#d0d0d0" stroke="#d0d0d0" stroke-width="0.3">图层 25</text>
<text x="1107" y="848.0" font-size="8.5" font-weight="bold" fill="#a8a8a8">M</text>
<rect x="1130" y="839" width="11" height="11" rx="1.5" fill="#c9c9c9"/>
<path d="M1132,844 l2.3,2.3 l3.8,-4.2" stroke="#2a2a2a" stroke-width="1.5" fill="none"/>
<rect x="945" y="920" width="208" height="1" fill="#383737"/>
<rect x="893" y="874" width="50" height="42" rx="2" fill="#403e3e"/>
<path d="M886,898 v-4 h3" stroke="#8a8a8a" stroke-width="1" fill="none"/>
<text x="963" y="899.5" font-size="13" fill="#d0d0d0" stroke="#d0d0d0" stroke-width="0.3">图层 21</text>
<text x="1107" y="898.0" font-size="8.5" font-weight="bold" fill="#a8a8a8">N</text>
<rect x="1130" y="889" width="11" height="11" rx="1.5" fill="#c9c9c9"/>
<path d="M1132,894 l2.3,2.3 l3.8,-4.2" stroke="#2a2a2a" stroke-width="1.5" fill="none"/>
<rect x="945" y="970" width="208" height="1" fill="#383737"/>
<rect x="886" y="924" width="50" height="42" rx="2" fill="#403e3e"/>
<text x="955" y="949.5" font-size="13" fill="#d0d0d0" stroke="#d0d0d0" stroke-width="0.3">图层 8</text>
<text x="1107" y="948.0" font-size="8.5" font-weight="bold" fill="#a8a8a8">N</text>
<rect x="1130" y="939" width="11" height="11" rx="1.5" fill="#c9c9c9"/>
<path d="M1132,944 l2.3,2.3 l3.8,-4.2" stroke="#2a2a2a" stroke-width="1.5" fill="none"/>
<rect x="945" y="1019" width="208" height="1" fill="#383737"/>
<rect x="893" y="973" width="50" height="42" rx="2" fill="#403e3e"/>
<path d="M886,997 v-4 h3" stroke="#8a8a8a" stroke-width="1" fill="none"/>
<text x="963" y="998.5" font-size="13" fill="#d0d0d0" stroke="#d0d0d0" stroke-width="0.3">图层 17</text>
<text x="1107" y="997.0" font-size="8.5" font-weight="bold" fill="#a8a8a8">N</text>
<rect x="1130" y="988" width="11" height="11" rx="1.5" fill="#c9c9c9"/>
<path d="M1132,993 l2.3,2.3 l3.8,-4.2" stroke="#2a2a2a" stroke-width="1.5" fill="none"/>
<rect x="945" y="1069" width="208" height="1" fill="#383737"/>
<rect x="893" y="1023" width="50" height="42" rx="2" fill="#403e3e"/>
<path d="M886,1047 v-4 h3" stroke="#8a8a8a" stroke-width="1" fill="none"/>
<text x="963" y="1048.5" font-size="13" fill="#d0d0d0" stroke="#d0d0d0" stroke-width="0.3">图层 19</text>
<text x="1107" y="1047.0" font-size="8.5" font-weight="bold" fill="#a8a8a8">M</text>
<rect x="1130" y="1038" width="11" height="11" rx="1.5" fill="#c9c9c9"/>
<path d="M1132,1043 l2.3,2.3 l3.8,-4.2" stroke="#2a2a2a" stroke-width="1.5" fill="none"/>
<rect x="887" y="413" width="8" height="7" fill="#f0f0f0"/><rect x="896" y="414" width="38" height="14" fill="#2c2c2c" opacity="0.6"/><rect x="899" y="416" width="16" height="1.2" fill="#8a8a8a"/><rect x="899" y="425" width="12" height="1.2" fill="#777"/><rect x="929" y="415" width="2.5" height="2.5" fill="#bbb"/><rect x="929" y="424" width="2.5" height="2.5" fill="#aaa"/>
<rect x="886" y="474" width="50" height="42" rx="2" fill="#43393a"/>
<path d="M897,500 q10,-10 22,-12 M900,507 q12,-10 24,-11 M905,492 q8,-6 18,-7" stroke="#6a3a30" stroke-width="3.5" fill="none" stroke-linecap="round" opacity="0.8" filter="url(#b1)"/>
<ellipse cx="911" cy="545" rx="25" ry="21" fill="#fafafa"/>
<path d="M893.0,540.0 C893.7,537.2 895.8,534.0 898.0,533.0 C900.2,532.0 903.7,534.7 906.0,534.0 C908.3,533.3 910.0,529.3 912.0,529.0 C914.0,528.7 915.8,531.7 918.0,532.0 C920.2,532.3 923.2,530.0 925.0,531.0 C926.8,532.0 928.7,535.5 929.0,538.0 C929.3,540.5 926.8,543.8 927.0,546.0 C927.2,548.2 930.8,549.3 930.0,551.0 C929.2,552.7 924.7,555.3 922.0,556.0 C919.3,556.7 916.7,554.5 914.0,555.0 C911.3,555.5 908.3,559.3 906.0,559.0 C903.7,558.7 902.0,554.5 900.0,553.0 C898.0,551.5 895.2,552.2 894.0,550.0 C892.8,547.8 892.3,542.8 893.0,540.0Z" fill="#3a3a3a"/>
<g fill="#c9c4c0"><ellipse cx="904.7" cy="658.2" rx="1.6" ry="0.8" transform="rotate(-35 904.7 658.2)"/><ellipse cx="917.5" cy="647.2" rx="2.3" ry="1.1" transform="rotate(-35 917.5 647.2)"/><ellipse cx="898.1" cy="660.3" rx="1.8" ry="0.9" transform="rotate(-35 898.1 660.3)"/><ellipse cx="926.0" cy="637.4" rx="2.2" ry="1.1" transform="rotate(-35 926.0 637.4)"/><ellipse cx="909.3" cy="657.7" rx="1.3" ry="0.7" transform="rotate(-35 909.3 657.7)"/><ellipse cx="898.3" cy="663.5" rx="1.8" ry="0.9" transform="rotate(-35 898.3 663.5)"/><ellipse cx="905.6" cy="645.8" rx="1.6" ry="0.8" transform="rotate(-35 905.6 645.8)"/><ellipse cx="915.4" cy="642.9" rx="1.6" ry="0.8" transform="rotate(-35 915.4 642.9)"/><ellipse cx="905.9" cy="649.4" rx="1.3" ry="0.7" transform="rotate(-35 905.9 649.4)"/><ellipse cx="932.5" cy="638.2" rx="1.5" ry="0.8" transform="rotate(-35 932.5 638.2)"/><ellipse cx="940.8" cy="626.9" rx="1.7" ry="0.9" transform="rotate(-35 940.8 626.9)"/><ellipse cx="928.6" cy="645.4" rx="1.8" ry="0.9" transform="rotate(-35 928.6 645.4)"/><ellipse cx="932.9" cy="633.7" rx="2.0" ry="1.0" transform="rotate(-35 932.9 633.7)"/><ellipse cx="936.1" cy="635.1" rx="2.0" ry="1.0" transform="rotate(-35 936.1 635.1)"/><ellipse cx="896.9" cy="661.3" rx="1.8" ry="0.9" transform="rotate(-35 896.9 661.3)"/><ellipse cx="904.6" cy="656.3" rx="2.1" ry="1.1" transform="rotate(-35 904.6 656.3)"/><ellipse cx="912.4" cy="648.4" rx="2.3" ry="1.1" transform="rotate(-35 912.4 648.4)"/><ellipse cx="918.2" cy="644.3" rx="1.3" ry="0.7" transform="rotate(-35 918.2 644.3)"/><ellipse cx="900.0" cy="663.6" rx="2.0" ry="1.0" transform="rotate(-35 900.0 663.6)"/><ellipse cx="911.6" cy="647.8" rx="2.5" ry="1.3" transform="rotate(-35 911.6 647.8)"/><ellipse cx="929.6" cy="643.0" rx="1.6" ry="0.8" transform="rotate(-35 929.6 643.0)"/><ellipse cx="921.3" cy="645.7" rx="1.9" ry="0.9" transform="rotate(-35 921.3 645.7)"/><ellipse cx="908.6" cy="657.4" rx="1.3" ry="0.6" transform="rotate(-35 908.6 657.4)"/><ellipse cx="931.8" cy="643.0" rx="2.2" ry="1.1" transform="rotate(-35 931.8 643.0)"/><ellipse cx="931.1" cy="637.8" rx="1.8" ry="0.9" transform="rotate(-35 931.1 637.8)"/><ellipse cx="901.6" cy="657.5" rx="1.5" ry="0.8" transform="rotate(-35 901.6 657.5)"/><ellipse cx="918.1" cy="642.9" rx="1.7" ry="0.9" transform="rotate(-35 918.1 642.9)"/><ellipse cx="920.4" cy="645.6" rx="1.9" ry="0.9" transform="rotate(-35 920.4 645.6)"/><ellipse cx="896.6" cy="652.8" rx="2.0" ry="1.0" transform="rotate(-35 896.6 652.8)"/><ellipse cx="935.0" cy="639.8" rx="2.3" ry="1.2" transform="rotate(-35 935.0 639.8)"/><ellipse cx="909.8" cy="653.8" rx="1.4" ry="0.7" transform="rotate(-35 909.8 653.8)"/><ellipse cx="894.8" cy="661.1" rx="1.6" ry="0.8" transform="rotate(-35 894.8 661.1)"/><ellipse cx="902.3" cy="653.0" rx="1.4" ry="0.7" transform="rotate(-35 902.3 653.0)"/><ellipse cx="903.9" cy="649.2" rx="1.6" ry="0.8" transform="rotate(-35 903.9 649.2)"/><ellipse cx="926.6" cy="637.0" rx="1.9" ry="0.9" transform="rotate(-35 926.6 637.0)"/><ellipse cx="897.3" cy="656.3" rx="1.5" ry="0.8" transform="rotate(-35 897.3 656.3)"/><ellipse cx="904.0" cy="655.3" rx="1.5" ry="0.8" transform="rotate(-35 904.0 655.3)"/><ellipse cx="924.3" cy="635.5" rx="1.3" ry="0.7" transform="rotate(-35 924.3 635.5)"/></g>
<rect x="893" y="674" width="50" height="42" rx="2" fill="#3b3535"/>
<g fill="#c88a5a"><ellipse cx="939.8" cy="726.9" rx="1.4" ry="0.7" transform="rotate(-35 939.8 726.9)"/><ellipse cx="933.5" cy="738.7" rx="1.7" ry="0.8" transform="rotate(-35 933.5 738.7)"/><ellipse cx="923.1" cy="743.4" rx="1.5" ry="0.7" transform="rotate(-35 923.1 743.4)"/><ellipse cx="914.4" cy="749.9" rx="2.6" ry="1.3" transform="rotate(-35 914.4 749.9)"/><ellipse cx="937.1" cy="732.5" rx="1.6" ry="0.8" transform="rotate(-35 937.1 732.5)"/><ellipse cx="895.7" cy="756.6" rx="1.7" ry="0.8" transform="rotate(-35 895.7 756.6)"/><ellipse cx="915.3" cy="748.5" rx="2.0" ry="1.0" transform="rotate(-35 915.3 748.5)"/><ellipse cx="904.1" cy="749.4" rx="1.5" ry="0.7" transform="rotate(-35 904.1 749.4)"/><ellipse cx="921.4" cy="747.2" rx="1.5" ry="0.8" transform="rotate(-35 921.4 747.2)"/><ellipse cx="936.3" cy="738.0" rx="2.4" ry="1.2" transform="rotate(-35 936.3 738.0)"/><ellipse cx="930.8" cy="736.1" rx="2.5" ry="1.3" transform="rotate(-35 930.8 736.1)"/><ellipse cx="935.4" cy="736.5" rx="2.2" ry="1.1" transform="rotate(-35 935.4 736.5)"/><ellipse cx="916.6" cy="745.9" rx="2.5" ry="1.2" transform="rotate(-35 916.6 745.9)"/><ellipse cx="920.0" cy="742.9" rx="2.4" ry="1.2" transform="rotate(-35 920.0 742.9)"/><ellipse cx="934.6" cy="735.6" rx="2.5" ry="1.2" transform="rotate(-35 934.6 735.6)"/><ellipse cx="927.3" cy="735.3" rx="1.7" ry="0.8" transform="rotate(-35 927.3 735.3)"/><ellipse cx="924.4" cy="745.5" rx="1.6" ry="0.8" transform="rotate(-35 924.4 745.5)"/><ellipse cx="934.1" cy="740.7" rx="2.2" ry="1.1" transform="rotate(-35 934.1 740.7)"/><ellipse cx="918.3" cy="747.0" rx="2.0" ry="1.0" transform="rotate(-35 918.3 747.0)"/><ellipse cx="908.3" cy="750.1" rx="2.5" ry="1.2" transform="rotate(-35 908.3 750.1)"/><ellipse cx="920.6" cy="746.3" rx="2.2" ry="1.1" transform="rotate(-35 920.6 746.3)"/><ellipse cx="933.3" cy="737.8" rx="1.4" ry="0.7" transform="rotate(-35 933.3 737.8)"/><ellipse cx="923.1" cy="737.2" rx="2.4" ry="1.2" transform="rotate(-35 923.1 737.2)"/><ellipse cx="901.6" cy="760.2" rx="1.6" ry="0.8" transform="rotate(-35 901.6 760.2)"/><ellipse cx="908.1" cy="751.4" rx="2.2" ry="1.1" transform="rotate(-35 908.1 751.4)"/><ellipse cx="897.5" cy="752.6" rx="2.1" ry="1.1" transform="rotate(-35 897.5 752.6)"/><ellipse cx="903.2" cy="749.2" rx="2.2" ry="1.1" transform="rotate(-35 903.2 749.2)"/><ellipse cx="896.4" cy="761.8" rx="1.5" ry="0.7" transform="rotate(-35 896.4 761.8)"/><ellipse cx="905.9" cy="751.6" rx="1.3" ry="0.7" transform="rotate(-35 905.9 751.6)"/><ellipse cx="912.1" cy="752.4" rx="1.4" ry="0.7" transform="rotate(-35 912.1 752.4)"/><ellipse cx="908.3" cy="748.5" rx="2.3" ry="1.1" transform="rotate(-35 908.3 748.5)"/><ellipse cx="930.5" cy="742.3" rx="2.4" ry="1.2" transform="rotate(-35 930.5 742.3)"/><ellipse cx="926.5" cy="735.8" rx="2.1" ry="1.1" transform="rotate(-35 926.5 735.8)"/><ellipse cx="907.9" cy="749.0" rx="2.4" ry="1.2" transform="rotate(-35 907.9 749.0)"/><ellipse cx="902.9" cy="753.2" rx="1.9" ry="1.0" transform="rotate(-35 902.9 753.2)"/><ellipse cx="905.8" cy="750.9" rx="2.1" ry="1.0" transform="rotate(-35 905.8 750.9)"/><ellipse cx="911.7" cy="747.9" rx="1.5" ry="0.7" transform="rotate(-35 911.7 747.9)"/><ellipse cx="896.6" cy="751.8" rx="1.4" ry="0.7" transform="rotate(-35 896.6 751.8)"/><ellipse cx="923.7" cy="748.3" rx="2.5" ry="1.2" transform="rotate(-35 923.7 748.3)"/><ellipse cx="937.2" cy="731.4" rx="1.6" ry="0.8" transform="rotate(-35 937.2 731.4)"/><ellipse cx="922.6" cy="746.8" rx="2.2" ry="1.1" transform="rotate(-35 922.6 746.8)"/><ellipse cx="907.3" cy="751.7" rx="1.3" ry="0.6" transform="rotate(-35 907.3 751.7)"/><ellipse cx="897.9" cy="751.6" rx="2.2" ry="1.1" transform="rotate(-35 897.9 751.6)"/><ellipse cx="904.7" cy="747.3" rx="1.6" ry="0.8" transform="rotate(-35 904.7 747.3)"/><ellipse cx="906.3" cy="751.9" rx="1.7" ry="0.8" transform="rotate(-35 906.3 751.9)"/></g>
<g fill="#ecd9b4"><ellipse cx="907.3" cy="800.0" rx="3.0" ry="1.5" transform="rotate(-35 907.3 800.0)"/><ellipse cx="920.7" cy="784.9" rx="3.7" ry="1.8" transform="rotate(-35 920.7 784.9)"/><ellipse cx="906.3" cy="808.2" rx="2.6" ry="1.3" transform="rotate(-35 906.3 808.2)"/><ellipse cx="932.0" cy="788.2" rx="1.7" ry="0.9" transform="rotate(-35 932.0 788.2)"/><ellipse cx="925.9" cy="791.8" rx="3.4" ry="1.7" transform="rotate(-35 925.9 791.8)"/><ellipse cx="922.6" cy="794.2" rx="3.0" ry="1.5" transform="rotate(-35 922.6 794.2)"/><ellipse cx="906.8" cy="805.3" rx="2.6" ry="1.3" transform="rotate(-35 906.8 805.3)"/><ellipse cx="929.5" cy="792.3" rx="3.9" ry="2.0" transform="rotate(-35 929.5 792.3)"/><ellipse cx="915.4" cy="797.0" rx="4.0" ry="2.0" transform="rotate(-35 915.4 797.0)"/><ellipse cx="931.5" cy="780.1" rx="1.9" ry="1.0" transform="rotate(-35 931.5 780.1)"/><ellipse cx="937.2" cy="784.7" rx="2.1" ry="1.1" transform="rotate(-35 937.2 784.7)"/><ellipse cx="917.6" cy="792.7" rx="3.0" ry="1.5" transform="rotate(-35 917.6 792.7)"/><ellipse cx="924.0" cy="795.4" rx="4.0" ry="2.0" transform="rotate(-35 924.0 795.4)"/><ellipse cx="935.9" cy="788.1" rx="1.7" ry="0.9" transform="rotate(-35 935.9 788.1)"/><ellipse cx="935.9" cy="791.3" rx="2.9" ry="1.5" transform="rotate(-35 935.9 791.3)"/><ellipse cx="925.2" cy="794.1" rx="2.9" ry="1.5" transform="rotate(-35 925.2 794.1)"/><ellipse cx="906.3" cy="805.5" rx="4.1" ry="2.1" transform="rotate(-35 906.3 805.5)"/><ellipse cx="902.5" cy="804.4" rx="1.7" ry="0.9" transform="rotate(-35 902.5 804.4)"/><ellipse cx="911.0" cy="805.6" rx="1.4" ry="0.7" transform="rotate(-35 911.0 805.6)"/><ellipse cx="920.1" cy="795.1" rx="2.2" ry="1.1" transform="rotate(-35 920.1 795.1)"/><ellipse cx="936.9" cy="785.2" rx="4.2" ry="2.1" transform="rotate(-35 936.9 785.2)"/><ellipse cx="907.5" cy="801.3" rx="1.4" ry="0.7" transform="rotate(-35 907.5 801.3)"/><ellipse cx="904.7" cy="804.4" rx="1.7" ry="0.9" transform="rotate(-35 904.7 804.4)"/><ellipse cx="901.0" cy="804.3" rx="4.0" ry="2.0" transform="rotate(-35 901.0 804.3)"/><ellipse cx="933.9" cy="784.1" rx="2.8" ry="1.4" transform="rotate(-35 933.9 784.1)"/><ellipse cx="924.6" cy="792.1" rx="3.1" ry="1.5" transform="rotate(-35 924.6 792.1)"/><ellipse cx="936.5" cy="782.6" rx="3.4" ry="1.7" transform="rotate(-35 936.5 782.6)"/><ellipse cx="905.8" cy="808.5" rx="2.8" ry="1.4" transform="rotate(-35 905.8 808.5)"/><ellipse cx="917.1" cy="792.6" rx="3.0" ry="1.5" transform="rotate(-35 917.1 792.6)"/><ellipse cx="898.5" cy="809.3" rx="1.5" ry="0.7" transform="rotate(-35 898.5 809.3)"/><ellipse cx="923.1" cy="794.2" rx="2.3" ry="1.1" transform="rotate(-35 923.1 794.2)"/><ellipse cx="928.1" cy="782.9" rx="1.5" ry="0.7" transform="rotate(-35 928.1 782.9)"/><ellipse cx="928.2" cy="786.9" rx="2.6" ry="1.3" transform="rotate(-35 928.2 786.9)"/><ellipse cx="920.8" cy="790.7" rx="2.2" ry="1.1" transform="rotate(-35 920.8 790.7)"/><ellipse cx="913.1" cy="795.6" rx="2.4" ry="1.2" transform="rotate(-35 913.1 795.6)"/><ellipse cx="926.6" cy="788.9" rx="3.4" ry="1.7" transform="rotate(-35 926.6 788.9)"/><ellipse cx="908.4" cy="804.2" rx="2.0" ry="1.0" transform="rotate(-35 908.4 804.2)"/><ellipse cx="904.5" cy="805.9" rx="1.6" ry="0.8" transform="rotate(-35 904.5 805.9)"/><ellipse cx="909.5" cy="804.3" rx="2.5" ry="1.3" transform="rotate(-35 909.5 804.3)"/><ellipse cx="930.9" cy="783.5" rx="3.2" ry="1.6" transform="rotate(-35 930.9 783.5)"/><ellipse cx="933.9" cy="781.1" rx="1.6" ry="0.8" transform="rotate(-35 933.9 781.1)"/><ellipse cx="917.4" cy="798.5" rx="3.7" ry="1.8" transform="rotate(-35 917.4 798.5)"/><ellipse cx="903.4" cy="807.5" rx="3.1" ry="1.6" transform="rotate(-35 903.4 807.5)"/><ellipse cx="929.9" cy="781.9" rx="2.1" ry="1.1" transform="rotate(-35 929.9 781.9)"/><ellipse cx="929.0" cy="785.2" rx="2.5" ry="1.2" transform="rotate(-35 929.0 785.2)"/><ellipse cx="914.1" cy="803.0" rx="1.7" ry="0.9" transform="rotate(-35 914.1 803.0)"/><ellipse cx="899.9" cy="813.2" rx="4.1" ry="2.1" transform="rotate(-35 899.9 813.2)"/><ellipse cx="917.9" cy="802.7" rx="1.9" ry="1.0" transform="rotate(-35 917.9 802.7)"/><ellipse cx="930.3" cy="790.9" rx="2.8" ry="1.4" transform="rotate(-35 930.3 790.9)"/><ellipse cx="908.2" cy="796.7" rx="1.5" ry="0.7" transform="rotate(-35 908.2 796.7)"/><ellipse cx="920.4" cy="797.0" rx="1.4" ry="0.7" transform="rotate(-35 920.4 797.0)"/><ellipse cx="936.1" cy="790.4" rx="3.9" ry="1.9" transform="rotate(-35 936.1 790.4)"/><ellipse cx="935.2" cy="777.8" rx="3.4" ry="1.7" transform="rotate(-35 935.2 777.8)"/><ellipse cx="903.0" cy="805.8" rx="2.8" ry="1.4" transform="rotate(-35 903.0 805.8)"/><ellipse cx="917.0" cy="798.8" rx="2.3" ry="1.1" transform="rotate(-35 917.0 798.8)"/><ellipse cx="909.8" cy="801.1" rx="3.5" ry="1.8" transform="rotate(-35 909.8 801.1)"/><ellipse cx="910.0" cy="799.3" rx="3.6" ry="1.8" transform="rotate(-35 910.0 799.3)"/><ellipse cx="905.9" cy="809.5" rx="3.6" ry="1.8" transform="rotate(-35 905.9 809.5)"/><ellipse cx="928.6" cy="788.4" rx="3.8" ry="1.9" transform="rotate(-35 928.6 788.4)"/><ellipse cx="897.7" cy="803.5" rx="2.8" ry="1.4" transform="rotate(-35 897.7 803.5)"/><ellipse cx="914.6" cy="800.9" rx="1.3" ry="0.6" transform="rotate(-35 914.6 800.9)"/><ellipse cx="897.1" cy="801.3" rx="1.5" ry="0.7" transform="rotate(-35 897.1 801.3)"/><ellipse cx="940.1" cy="776.9" rx="2.7" ry="1.4" transform="rotate(-35 940.1 776.9)"/><ellipse cx="909.2" cy="797.7" rx="3.1" ry="1.6" transform="rotate(-35 909.2 797.7)"/><ellipse cx="920.8" cy="788.4" rx="2.2" ry="1.1" transform="rotate(-35 920.8 788.4)"/><ellipse cx="902.5" cy="807.8" rx="2.4" ry="1.2" transform="rotate(-35 902.5 807.8)"/><ellipse cx="898.4" cy="804.1" rx="3.0" ry="1.5" transform="rotate(-35 898.4 804.1)"/><ellipse cx="929.2" cy="791.9" rx="3.1" ry="1.5" transform="rotate(-35 929.2 791.9)"/><ellipse cx="914.4" cy="796.7" rx="3.3" ry="1.7" transform="rotate(-35 914.4 796.7)"/><ellipse cx="915.8" cy="796.5" rx="2.0" ry="1.0" transform="rotate(-35 915.8 796.5)"/></g>
<g fill="#ecd9b4"><ellipse cx="907.3" cy="850.0" rx="3.0" ry="1.5" transform="rotate(-35 907.3 850.0)"/><ellipse cx="920.7" cy="834.9" rx="3.7" ry="1.8" transform="rotate(-35 920.7 834.9)"/><ellipse cx="906.3" cy="858.2" rx="2.6" ry="1.3" transform="rotate(-35 906.3 858.2)"/><ellipse cx="932.0" cy="838.2" rx="1.7" ry="0.9" transform="rotate(-35 932.0 838.2)"/><ellipse cx="925.9" cy="841.8" rx="3.4" ry="1.7" transform="rotate(-35 925.9 841.8)"/><ellipse cx="922.6" cy="844.2" rx="3.0" ry="1.5" transform="rotate(-35 922.6 844.2)"/><ellipse cx="906.8" cy="855.3" rx="2.6" ry="1.3" transform="rotate(-35 906.8 855.3)"/><ellipse cx="929.5" cy="842.3" rx="3.9" ry="2.0" transform="rotate(-35 929.5 842.3)"/><ellipse cx="915.4" cy="847.0" rx="4.0" ry="2.0" transform="rotate(-35 915.4 847.0)"/><ellipse cx="931.5" cy="830.1" rx="1.9" ry="1.0" transform="rotate(-35 931.5 830.1)"/><ellipse cx="937.2" cy="834.7" rx="2.1" ry="1.1" transform="rotate(-35 937.2 834.7)"/><ellipse cx="917.6" cy="842.7" rx="3.0" ry="1.5" transform="rotate(-35 917.6 842.7)"/><ellipse cx="924.0" cy="845.4" rx="4.0" ry="2.0" transform="rotate(-35 924.0 845.4)"/><ellipse cx="935.9" cy="838.1" rx="1.7" ry="0.9" transform="rotate(-35 935.9 838.1)"/><ellipse cx="935.9" cy="841.3" rx="2.9" ry="1.5" transform="rotate(-35 935.9 841.3)"/><ellipse cx="925.2" cy="844.1" rx="2.9" ry="1.5" transform="rotate(-35 925.2 844.1)"/><ellipse cx="906.3" cy="855.5" rx="4.1" ry="2.1" transform="rotate(-35 906.3 855.5)"/><ellipse cx="902.5" cy="854.4" rx="1.7" ry="0.9" transform="rotate(-35 902.5 854.4)"/><ellipse cx="911.0" cy="855.6" rx="1.4" ry="0.7" transform="rotate(-35 911.0 855.6)"/><ellipse cx="920.1" cy="845.1" rx="2.2" ry="1.1" transform="rotate(-35 920.1 845.1)"/><ellipse cx="936.9" cy="835.2" rx="4.2" ry="2.1" transform="rotate(-35 936.9 835.2)"/><ellipse cx="907.5" cy="851.3" rx="1.4" ry="0.7" transform="rotate(-35 907.5 851.3)"/><ellipse cx="904.7" cy="854.4" rx="1.7" ry="0.9" transform="rotate(-35 904.7 854.4)"/><ellipse cx="901.0" cy="854.3" rx="4.0" ry="2.0" transform="rotate(-35 901.0 854.3)"/><ellipse cx="933.9" cy="834.1" rx="2.8" ry="1.4" transform="rotate(-35 933.9 834.1)"/><ellipse cx="924.6" cy="842.1" rx="3.1" ry="1.5" transform="rotate(-35 924.6 842.1)"/><ellipse cx="936.5" cy="832.6" rx="3.4" ry="1.7" transform="rotate(-35 936.5 832.6)"/><ellipse cx="905.8" cy="858.5" rx="2.8" ry="1.4" transform="rotate(-35 905.8 858.5)"/><ellipse cx="917.1" cy="842.6" rx="3.0" ry="1.5" transform="rotate(-35 917.1 842.6)"/><ellipse cx="898.5" cy="859.3" rx="1.5" ry="0.7" transform="rotate(-35 898.5 859.3)"/><ellipse cx="923.1" cy="844.2" rx="2.3" ry="1.1" transform="rotate(-35 923.1 844.2)"/><ellipse cx="928.1" cy="832.9" rx="1.5" ry="0.7" transform="rotate(-35 928.1 832.9)"/><ellipse cx="928.2" cy="836.9" rx="2.6" ry="1.3" transform="rotate(-35 928.2 836.9)"/><ellipse cx="920.8" cy="840.7" rx="2.2" ry="1.1" transform="rotate(-35 920.8 840.7)"/><ellipse cx="913.1" cy="845.6" rx="2.4" ry="1.2" transform="rotate(-35 913.1 845.6)"/><ellipse cx="926.6" cy="838.9" rx="3.4" ry="1.7" transform="rotate(-35 926.6 838.9)"/><ellipse cx="908.4" cy="854.2" rx="2.0" ry="1.0" transform="rotate(-35 908.4 854.2)"/><ellipse cx="904.5" cy="855.9" rx="1.6" ry="0.8" transform="rotate(-35 904.5 855.9)"/><ellipse cx="909.5" cy="854.3" rx="2.5" ry="1.3" transform="rotate(-35 909.5 854.3)"/><ellipse cx="930.9" cy="833.5" rx="3.2" ry="1.6" transform="rotate(-35 930.9 833.5)"/><ellipse cx="933.9" cy="831.1" rx="1.6" ry="0.8" transform="rotate(-35 933.9 831.1)"/><ellipse cx="917.4" cy="848.5" rx="3.7" ry="1.8" transform="rotate(-35 917.4 848.5)"/><ellipse cx="903.4" cy="857.5" rx="3.1" ry="1.6" transform="rotate(-35 903.4 857.5)"/><ellipse cx="929.9" cy="831.9" rx="2.1" ry="1.1" transform="rotate(-35 929.9 831.9)"/><ellipse cx="929.0" cy="835.2" rx="2.5" ry="1.2" transform="rotate(-35 929.0 835.2)"/><ellipse cx="914.1" cy="853.0" rx="1.7" ry="0.9" transform="rotate(-35 914.1 853.0)"/><ellipse cx="899.9" cy="863.2" rx="4.1" ry="2.1" transform="rotate(-35 899.9 863.2)"/><ellipse cx="917.9" cy="852.7" rx="1.9" ry="1.0" transform="rotate(-35 917.9 852.7)"/><ellipse cx="930.3" cy="840.9" rx="2.8" ry="1.4" transform="rotate(-35 930.3 840.9)"/><ellipse cx="908.2" cy="846.7" rx="1.5" ry="0.7" transform="rotate(-35 908.2 846.7)"/><ellipse cx="920.4" cy="847.0" rx="1.4" ry="0.7" transform="rotate(-35 920.4 847.0)"/><ellipse cx="936.1" cy="840.4" rx="3.9" ry="1.9" transform="rotate(-35 936.1 840.4)"/><ellipse cx="935.2" cy="827.8" rx="3.4" ry="1.7" transform="rotate(-35 935.2 827.8)"/><ellipse cx="903.0" cy="855.8" rx="2.8" ry="1.4" transform="rotate(-35 903.0 855.8)"/><ellipse cx="917.0" cy="848.8" rx="2.3" ry="1.1" transform="rotate(-35 917.0 848.8)"/><ellipse cx="909.8" cy="851.1" rx="3.5" ry="1.8" transform="rotate(-35 909.8 851.1)"/><ellipse cx="910.0" cy="849.3" rx="3.6" ry="1.8" transform="rotate(-35 910.0 849.3)"/><ellipse cx="905.9" cy="859.5" rx="3.6" ry="1.8" transform="rotate(-35 905.9 859.5)"/><ellipse cx="928.6" cy="838.4" rx="3.8" ry="1.9" transform="rotate(-35 928.6 838.4)"/><ellipse cx="897.7" cy="853.5" rx="2.8" ry="1.4" transform="rotate(-35 897.7 853.5)"/><ellipse cx="914.6" cy="850.9" rx="1.3" ry="0.6" transform="rotate(-35 914.6 850.9)"/><ellipse cx="897.1" cy="851.3" rx="1.5" ry="0.7" transform="rotate(-35 897.1 851.3)"/><ellipse cx="940.1" cy="826.9" rx="2.7" ry="1.4" transform="rotate(-35 940.1 826.9)"/><ellipse cx="909.2" cy="847.7" rx="3.1" ry="1.6" transform="rotate(-35 909.2 847.7)"/><ellipse cx="920.8" cy="838.4" rx="2.2" ry="1.1" transform="rotate(-35 920.8 838.4)"/><ellipse cx="902.5" cy="857.8" rx="2.4" ry="1.2" transform="rotate(-35 902.5 857.8)"/><ellipse cx="898.4" cy="854.1" rx="3.0" ry="1.5" transform="rotate(-35 898.4 854.1)"/><ellipse cx="929.2" cy="841.9" rx="3.1" ry="1.5" transform="rotate(-35 929.2 841.9)"/><ellipse cx="914.4" cy="846.7" rx="3.3" ry="1.7" transform="rotate(-35 914.4 846.7)"/><ellipse cx="915.8" cy="846.5" rx="2.0" ry="1.0" transform="rotate(-35 915.8 846.5)"/></g>
<path d="M894.0,893.0 C895.0,889.7 898.7,887.3 902.0,885.0 C905.3,882.7 910.0,880.7 914.0,879.0 C918.0,877.3 922.3,875.3 926.0,875.0 C929.7,874.7 933.5,875.2 936.0,877.0 C938.5,878.8 939.8,882.5 941.0,886.0 C942.2,889.5 942.8,894.3 943.0,898.0 C943.2,901.7 943.5,905.5 942.0,908.0 C940.5,910.5 937.7,912.0 934.0,913.0 C930.3,914.0 924.7,914.2 920.0,914.0 C915.3,913.8 910.0,913.5 906.0,912.0 C902.0,910.5 898.0,908.2 896.0,905.0 C894.0,901.8 893.0,896.3 894.0,893.0Z" fill="#f6c99a"/>
<g fill="#f4f4f4"><path d="M887.0,958.0 C887.8,955.3 895.3,951.3 900.0,948.0 C904.7,944.7 910.7,941.3 915.0,938.0 C919.3,934.7 922.8,929.2 926.0,928.0 C929.2,926.8 932.5,928.2 934.0,931.0 C935.5,933.8 935.7,940.7 935.0,945.0 C934.3,949.3 932.8,954.2 930.0,957.0 C927.2,959.8 922.0,961.5 918.0,962.0 C914.0,962.5 909.8,959.7 906.0,960.0 C902.2,960.3 898.2,964.3 895.0,964.0 C891.8,963.7 886.2,960.7 887.0,958.0Z"/><path d="M898.0,968.0 C898.7,966.5 905.7,963.7 910.0,962.0 C914.3,960.3 920.7,958.0 924.0,958.0 C927.3,958.0 930.7,960.5 930.0,962.0 C929.3,963.5 924.0,965.5 920.0,967.0 C916.0,968.5 909.7,970.8 906.0,971.0 C902.3,971.2 897.3,969.5 898.0,968.0Z"/><path d="M914.0,933.0 C913.0,932.0 917.7,927.3 920.0,926.0 C922.3,924.7 927.0,924.0 928.0,925.0 C929.0,926.0 928.3,930.7 926.0,932.0 C923.7,933.3 915.0,934.0 914.0,933.0Z"/></g>
<path d="M893,955 l12,-6 M905,962 l14,-7 M912,945 l10,-8" stroke="#353535" stroke-width="1.6"/>
</g>
<rect x="1153" y="412" width="2.5" height="341" rx="1" fill="#9a9a9a"/>
</g>
<g>
<text x="181" y="335" font-size="13" fill="#b4b4b4">图库</text>
<circle cx="234" cy="330.5" r="11" fill="#141414"/>
<circle cx="276" cy="330.5" r="11" fill="#141414"/>
<circle cx="319" cy="330.5" r="11" fill="#141414"/>
<circle cx="361" cy="330.5" r="11" fill="#141414"/>
<g stroke="#cfcfcf" fill="none" stroke-linecap="round">
<path d="M229.5,335.5 L235,330" stroke-width="2.4"/><path d="M239.2,326.2 a3.4,3.4 0 1 0 1.6,3.2" stroke-width="2"/>
<path d="M271.5,336 L280,327" stroke-width="2"/><path d="M272.5,326 v3 M271,327.5 h3 M280.5,333 v2" stroke-width="1"/>
<path d="M322.5,326 H317 L321,331.5 Q322,335 316,335.5" stroke-width="2"/>
</g><path d="M366,325 L362.5,335.5 L360.5,331.5 L356,329.5 Z" fill="#cfcfcf"/><path d="M360.5,331.5 L356.5,336" stroke="#cfcfcf" stroke-width="1.6"/>
<g fill="#c2c2c2">
<path d="M957.5,319.5 L959,321 L947.5,334.5 L944.5,332 Z"/><path d="M944,332.5 L947,335.5 Q944.5,340.5 938,341 Q941,337 944,332.5Z"/>
<path d="M1003,321.5 q2,-1 3,1 l-1.5,5.5 q1,3 -2.5,6 l-4,2 l-1,4.5 l-6,-2.5 l2,-4 q-3,-1 -2,-4 l5,-4 q1.5,-3 4,-3 z"/>
<path d="M1053.5,321.5 L1059,326.5 L1049,337 L1043.5,332 Z"/><path d="M1043,332.8 L1048.3,337.6 L1046.5,339.5 L1041,334.8 Z" fill="#9a9a9a"/>
</g>
<rect x="1095" y="321.5" width="14" height="14" rx="2.5" fill="#1468d0"/><rect x="1091" y="325.5" width="14" height="14" rx="2.5" fill="#1c80f2" stroke="#2b2b2b" stroke-width="1"/>
<circle cx="1152.5" cy="330.5" r="10" fill="#ececec"/>
</g>
</g></g>
</svg>
<!-- window buttons -->
<svg class="abs" style="left:1220px;top:185px" width="110" height="30" viewBox="1220 185 110 30">
 <rect x="1227" y="197.5" width="12" height="2" fill="#fff"/>
 <rect x="1268" y="194" width="10" height="10" fill="none" stroke="#fff" stroke-width="2"/>
 <path d="M1308.5,193.5 L1319.5,204.5 M1319.5,193.5 L1308.5,204.5" stroke="#fff" stroke-width="1.8"/>
</svg>
<!-- side panel -->
<div class="abs" style="left:1283px;top:596px;width:52px;height:178px;background:#1a1a1a;border-radius:5px 0 0 5px"></div>
<div class="abs" style="left:1283px;top:785px;width:52px;height:52px;background:#1a1a1a;border-radius:5px 0 0 5px"></div>
<svg class="abs" style="left:1283px;top:596px" width="52" height="245" viewBox="1283 596 52 245" fill="none" stroke="#fff" stroke-width="1.8">
 <circle cx="1304" cy="635.5" r="3.6"/><circle cx="1315" cy="629.5" r="3.6"/><circle cx="1315" cy="641.5" r="3.6"/>
 <path d="M1307.2,633.8 L1311.8,631.2 M1307.2,637.2 L1311.8,639.8"/>
 <path d="M1308,675 V690 M1302,684.5 L1308,690.5 L1314,684.5"/><path d="M1300,690 V694.5 H1316 V690"/>
 <path d="M1300,729 H1318 M1302,729 V741 Q1302,744.5 1305.500,744.5 H1312.5 Q1316,744.5 1316,741 V729 M1305.5,729 V726.5 Q1305.5,725 1307,725 H1311 Q1312.5,725 1312.5,726.5 V729"/>
 <path d="M1307,733.500 V739.500 M1311,733.500 V739.500" stroke-width="2"/>
 <g stroke="#f3d19e" stroke-width="1.6" stroke-linejoin="round"><path d="M1311.500,802.5 L1318.5,809.500 L1315.500,810.500 L1312.5,816 L1313.500,819.500 L1302,808 L1305.500,809 L1310.500,805.500 Z"/><path d="M1307,814.5 L1302,821.5"/></g>
</svg>
<div class="new" style="left:1309px;top:786px;padding:0 4px;width:18px;">NEW</div>
<!-- toast -->
<div class="abs" style="left:13px;top:1101px;width:204px;height:27px;background:#1c1c1c;border-radius:3px;"></div>
<div class="abs" style="left:23px;top:1106px;font-size:12px;line-height:18px;color:#fff;white-space:nowrap;letter-spacing:0.1px">已定位到上次浏览位置，<span style="color:#3a8ffa;">从头播放</span></div>
<!-- progress -->
<div class="abs" style="left:3px;top:1137px;width:1332px;height:2px;background:#4a4a4a"></div>
<div class="abs" style="left:3px;top:1137px;width:1111px;height:2px;background:#2f8ae0"></div>
<!-- left controls -->
<svg class="abs" style="left:20px;top:1155px" width="100" height="32" viewBox="20 1155 100 32">
 <path d="M26,1162.500 L37.500,1171 L26,1179.500 Z" fill="#fff" stroke="#fff" stroke-width="1" stroke-linejoin="round"/>
 <rect x="62" y="1165" width="2" height="12" fill="#858585"/><path d="M76,1165 V1177 L66,1171 Z" fill="#858585"/>
 <rect x="102" y="1165" width="2" height="12" fill="#858585"/><path d="M90,1165 V1177 L100,1171 Z" fill="#858585"/>
</svg>
<div class="abs" style="left:124px;top:1162px;font-size:13px;line-height:18px;color:#fff;white-space:nowrap;letter-spacing:-0.2px">01:26:24 / 01:43:49</div>
<!-- right controls -->
<svg class="abs" style="left:865px;top:1155px" width="120" height="32" viewBox="865 1155 120 32">
 <path d="M871,1167.500 H875.500 L881.500,1163 V1179 L875.500,1174.500 H871 Z" fill="#fff"/>
 <path d="M885,1165.500 Q889.500,1171 885,1176.500" fill="none" stroke="#fff" stroke-width="2"/>
 <rect x="897" y="1170" width="76" height="2" fill="#fff"/><circle cx="972.500" cy="1171" r="3.800" fill="#fff"/>
</svg>
<div class="btn" style="left:992px">标记</div>
<div class="btn" style="left:1058px">倍速</div>
<div class="btn" style="left:1124px;border-color:#f3d19e;color:#f3d19e">超清</div>
<div class="btn" style="left:1190px">字幕</div>
<div class="new" style="left:1019px;top:1156px">NEW</div>
<div class="new" style="left:1087px;top:1156px">NEW</div>
<svg class="abs" style="left:1255px;top:1158px" width="60" height="26" viewBox="1255 1158 60 26" fill="none" stroke="#fff" stroke-width="2.2">
 <path d="M1260,1169 V1165 H1264.500 M1270.500,1165 H1275 V1169 M1275,1174 V1178 H1270.500 M1264.500,1178 H1260 V1174"/>
 <path d="M1292,1164.500 H1309 M1292,1171 H1299.500 M1292,1177.500 H1309" stroke-width="2.4"/>
 <path d="M1309,1167.500 V1174.500 L1303,1171 Z" fill="#fff" stroke="none"/>
</svg>

</body>
</html>
